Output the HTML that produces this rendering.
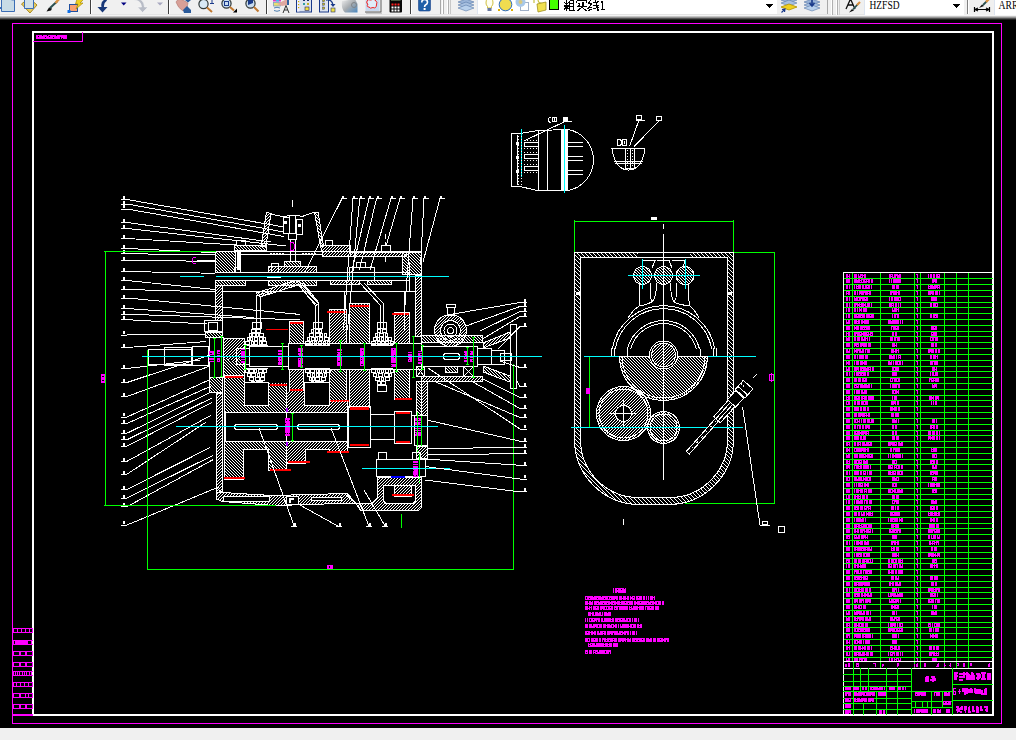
<!DOCTYPE html>
<html><head><meta charset="utf-8"><style>
html,body{margin:0;padding:0;background:#000;width:1016px;height:740px;overflow:hidden}
#tb{position:absolute;left:0;top:0;width:1016px;height:20px}
svg{position:absolute;left:0;top:0}
</style></head><body>
<svg width="1016" height="740" viewBox="0 0 1016 740" shape-rendering="crispEdges">
<defs>
<pattern id="hat" width="3" height="3" patternUnits="userSpaceOnUse"><rect x="2" y="0" width="1" height="1" fill="#fff"/><rect x="1" y="1" width="1" height="1" fill="#fff"/><rect x="0" y="2" width="1" height="1" fill="#fff"/></pattern>
<pattern id="hatb" width="3" height="3" patternUnits="userSpaceOnUse"><rect x="0" y="0" width="1" height="1" fill="#fff"/><rect x="1" y="1" width="1" height="1" fill="#fff"/><rect x="2" y="2" width="1" height="1" fill="#fff"/></pattern>
<pattern id="hatl" width="4" height="4" patternUnits="userSpaceOnUse"><rect x="3" y="0" width="1" height="1" fill="#fff"/><rect x="2" y="1" width="1" height="1" fill="#fff"/><rect x="1" y="2" width="1" height="1" fill="#fff"/><rect x="0" y="3" width="1" height="1" fill="#fff"/></pattern>
<pattern id="hatlb" width="4" height="4" patternUnits="userSpaceOnUse"><rect x="0" y="0" width="1" height="1" fill="#fff"/><rect x="1" y="1" width="1" height="1" fill="#fff"/><rect x="2" y="2" width="1" height="1" fill="#fff"/><rect x="3" y="3" width="1" height="1" fill="#fff"/></pattern>
</defs>
<rect x="0" y="0" width="1016" height="740" fill="#000"/>
<rect x="0" y="0" width="1016" height="15" fill="#f0f0f0"/>
<rect x="0" y="15" width="1016" height="1" fill="#f4f4f4"/>
<rect x="0" y="16" width="1016" height="1" fill="#c4c4c4"/>
<rect x="0" y="17" width="1016" height="1" fill="#959595"/>
<rect x="0" y="18" width="1016" height="1" fill="#555555"/>
<rect x="0" y="19" width="1016" height="1" fill="#222222"/>
<rect x="0" y="728" width="1016" height="12" fill="#f0f0f0"/>
<rect x="12.5" y="23.5" width="989" height="700" stroke="#f0f" stroke-width="1" fill="none"/>
<rect x="33" y="32" width="960" height="683" stroke="#fff" stroke-width="2" fill="none"/>
<rect x="843" y="278" width="150" height="1" fill="#0f0"/>
<rect x="843" y="284" width="150" height="1" fill="#0f0"/>
<rect x="843" y="290" width="150" height="1" fill="#0f0"/>
<rect x="843" y="296" width="150" height="1" fill="#0f0"/>
<rect x="843" y="302" width="150" height="1" fill="#0f0"/>
<rect x="843" y="307" width="150" height="1" fill="#0f0"/>
<rect x="843" y="313" width="150" height="1" fill="#0f0"/>
<rect x="843" y="319" width="150" height="1" fill="#0f0"/>
<rect x="843" y="325" width="150" height="1" fill="#0f0"/>
<rect x="843" y="331" width="150" height="1" fill="#0f0"/>
<rect x="843" y="336" width="150" height="1" fill="#0f0"/>
<rect x="843" y="342" width="150" height="1" fill="#0f0"/>
<rect x="843" y="348" width="150" height="1" fill="#0f0"/>
<rect x="843" y="354" width="150" height="1" fill="#0f0"/>
<rect x="843" y="360" width="150" height="1" fill="#0f0"/>
<rect x="843" y="366" width="150" height="1" fill="#0f0"/>
<rect x="843" y="371" width="150" height="1" fill="#0f0"/>
<rect x="843" y="377" width="150" height="1" fill="#0f0"/>
<rect x="843" y="383" width="150" height="1" fill="#0f0"/>
<rect x="843" y="389" width="150" height="1" fill="#0f0"/>
<rect x="843" y="395" width="150" height="1" fill="#0f0"/>
<rect x="843" y="400" width="150" height="1" fill="#0f0"/>
<rect x="843" y="406" width="150" height="1" fill="#0f0"/>
<rect x="843" y="412" width="150" height="1" fill="#0f0"/>
<rect x="843" y="418" width="150" height="1" fill="#0f0"/>
<rect x="843" y="424" width="150" height="1" fill="#0f0"/>
<rect x="843" y="430" width="150" height="1" fill="#0f0"/>
<rect x="843" y="435" width="150" height="1" fill="#0f0"/>
<rect x="843" y="441" width="150" height="1" fill="#0f0"/>
<rect x="843" y="447" width="150" height="1" fill="#0f0"/>
<rect x="843" y="453" width="150" height="1" fill="#0f0"/>
<rect x="843" y="459" width="150" height="1" fill="#0f0"/>
<rect x="843" y="464" width="150" height="1" fill="#0f0"/>
<rect x="843" y="470" width="150" height="1" fill="#0f0"/>
<rect x="843" y="476" width="150" height="1" fill="#0f0"/>
<rect x="843" y="482" width="150" height="1" fill="#0f0"/>
<rect x="843" y="488" width="150" height="1" fill="#0f0"/>
<rect x="843" y="494" width="150" height="1" fill="#0f0"/>
<rect x="843" y="499" width="150" height="1" fill="#0f0"/>
<rect x="843" y="505" width="150" height="1" fill="#0f0"/>
<rect x="843" y="511" width="150" height="1" fill="#0f0"/>
<rect x="843" y="517" width="150" height="1" fill="#0f0"/>
<rect x="843" y="523" width="150" height="1" fill="#0f0"/>
<rect x="843" y="528" width="150" height="1" fill="#0f0"/>
<rect x="843" y="534" width="150" height="1" fill="#0f0"/>
<rect x="843" y="540" width="150" height="1" fill="#0f0"/>
<rect x="843" y="546" width="150" height="1" fill="#0f0"/>
<rect x="843" y="552" width="150" height="1" fill="#0f0"/>
<rect x="843" y="558" width="150" height="1" fill="#0f0"/>
<rect x="843" y="563" width="150" height="1" fill="#0f0"/>
<rect x="843" y="569" width="150" height="1" fill="#0f0"/>
<rect x="843" y="575" width="150" height="1" fill="#0f0"/>
<rect x="843" y="581" width="150" height="1" fill="#0f0"/>
<rect x="843" y="587" width="150" height="1" fill="#0f0"/>
<rect x="843" y="592" width="150" height="1" fill="#0f0"/>
<rect x="843" y="598" width="150" height="1" fill="#0f0"/>
<rect x="843" y="604" width="150" height="1" fill="#0f0"/>
<rect x="843" y="610" width="150" height="1" fill="#0f0"/>
<rect x="843" y="616" width="150" height="1" fill="#0f0"/>
<rect x="843" y="622" width="150" height="1" fill="#0f0"/>
<rect x="843" y="627" width="150" height="1" fill="#0f0"/>
<rect x="843" y="633" width="150" height="1" fill="#0f0"/>
<rect x="843" y="639" width="150" height="1" fill="#0f0"/>
<rect x="843" y="645" width="150" height="1" fill="#0f0"/>
<rect x="843" y="651" width="150" height="1" fill="#0f0"/>
<rect x="843" y="657" width="150" height="1" fill="#0f0"/>
<rect x="852" y="272" width="1" height="390" fill="#0f0"/>
<rect x="880" y="272" width="1" height="390" fill="#0f0"/>
<rect x="914" y="272" width="1" height="390" fill="#0f0"/>
<rect x="920" y="272" width="1" height="390" fill="#0f0"/>
<rect x="944" y="272" width="1" height="390" fill="#0f0"/>
<rect x="956" y="272" width="1" height="390" fill="#0f0"/>
<rect x="968" y="272" width="1" height="390" fill="#0f0"/>
<rect x="846" y="274" width="4" height="4" fill="#f0f"/>
<rect x="848" y="274" width="1" height="1" fill="#000"/>
<rect x="848" y="275" width="1" height="1" fill="#000"/>
<rect x="848" y="277" width="1" height="1" fill="#000"/>
<rect x="854" y="274" width="12" height="4" fill="#f0f"/>
<rect x="857" y="274" width="1" height="4" fill="#000"/>
<rect x="859" y="274" width="1" height="1" fill="#000"/>
<rect x="859" y="275" width="1" height="1" fill="#000"/>
<rect x="861" y="276" width="1" height="1" fill="#000"/>
<rect x="863" y="274" width="1" height="1" fill="#000"/>
<rect x="863" y="276" width="1" height="1" fill="#000"/>
<rect x="863" y="277" width="1" height="1" fill="#000"/>
<rect x="889" y="274" width="12" height="4" fill="#f0f"/>
<rect x="891" y="275" width="1" height="1" fill="#000"/>
<rect x="891" y="277" width="1" height="1" fill="#000"/>
<rect x="893" y="274" width="1" height="1" fill="#000"/>
<rect x="893" y="275" width="1" height="1" fill="#000"/>
<rect x="893" y="276" width="1" height="1" fill="#000"/>
<rect x="896" y="276" width="1" height="1" fill="#000"/>
<rect x="896" y="277" width="1" height="1" fill="#000"/>
<rect x="898" y="274" width="1" height="1" fill="#000"/>
<rect x="917" y="274" width="1" height="4" fill="#f0f"/>
<rect x="916" y="274" width="1" height="1" fill="#f0f"/>
<rect x="928" y="274" width="12" height="4" fill="#f0f"/>
<rect x="929" y="274" width="1" height="4" fill="#000"/>
<rect x="932" y="274" width="1" height="4" fill="#000"/>
<rect x="935" y="274" width="1" height="4" fill="#000"/>
<rect x="938" y="275" width="1" height="1" fill="#000"/>
<rect x="846" y="279" width="4" height="4" fill="#f0f"/>
<rect x="854" y="279" width="19" height="4" fill="#f0f"/>
<rect x="857" y="279" width="1" height="1" fill="#000"/>
<rect x="860" y="279" width="1" height="1" fill="#000"/>
<rect x="860" y="281" width="1" height="1" fill="#000"/>
<rect x="862" y="280" width="1" height="1" fill="#000"/>
<rect x="862" y="281" width="1" height="1" fill="#000"/>
<rect x="865" y="280" width="1" height="1" fill="#000"/>
<rect x="867" y="280" width="1" height="1" fill="#000"/>
<rect x="867" y="282" width="1" height="1" fill="#000"/>
<rect x="870" y="279" width="1" height="1" fill="#000"/>
<rect x="870" y="280" width="1" height="1" fill="#000"/>
<rect x="870" y="281" width="1" height="1" fill="#000"/>
<rect x="870" y="282" width="1" height="1" fill="#000"/>
<rect x="889" y="279" width="12" height="4" fill="#f0f"/>
<rect x="890" y="279" width="1" height="4" fill="#000"/>
<rect x="892" y="279" width="1" height="4" fill="#000"/>
<rect x="917" y="279" width="1" height="4" fill="#f0f"/>
<rect x="916" y="279" width="1" height="1" fill="#f0f"/>
<rect x="932" y="279" width="5" height="4" fill="#f0f"/>
<rect x="934" y="282" width="1" height="1" fill="#000"/>
<rect x="846" y="285" width="4" height="4" fill="#f0f"/>
<rect x="848" y="285" width="1" height="4" fill="#000"/>
<rect x="854" y="285" width="18" height="4" fill="#f0f"/>
<rect x="855" y="285" width="1" height="4" fill="#000"/>
<rect x="857" y="285" width="1" height="1" fill="#000"/>
<rect x="857" y="287" width="1" height="1" fill="#000"/>
<rect x="861" y="285" width="1" height="4" fill="#000"/>
<rect x="864" y="285" width="1" height="1" fill="#000"/>
<rect x="864" y="286" width="1" height="1" fill="#000"/>
<rect x="864" y="287" width="1" height="1" fill="#000"/>
<rect x="867" y="286" width="1" height="1" fill="#000"/>
<rect x="870" y="285" width="1" height="1" fill="#000"/>
<rect x="870" y="286" width="1" height="1" fill="#000"/>
<rect x="870" y="287" width="1" height="1" fill="#000"/>
<rect x="870" y="288" width="1" height="1" fill="#000"/>
<rect x="892" y="285" width="7" height="4" fill="#f0f"/>
<rect x="895" y="285" width="1" height="4" fill="#000"/>
<rect x="917" y="285" width="1" height="4" fill="#f0f"/>
<rect x="916" y="285" width="1" height="1" fill="#f0f"/>
<rect x="928" y="285" width="12" height="4" fill="#f0f"/>
<rect x="929" y="285" width="1" height="1" fill="#000"/>
<rect x="929" y="287" width="1" height="1" fill="#000"/>
<rect x="933" y="285" width="1" height="1" fill="#000"/>
<rect x="936" y="288" width="1" height="1" fill="#000"/>
<rect x="938" y="286" width="1" height="1" fill="#000"/>
<rect x="938" y="288" width="1" height="1" fill="#000"/>
<rect x="846" y="291" width="4" height="4" fill="#f0f"/>
<rect x="847" y="292" width="1" height="1" fill="#000"/>
<rect x="847" y="294" width="1" height="1" fill="#000"/>
<rect x="854" y="291" width="17" height="4" fill="#f0f"/>
<rect x="856" y="291" width="1" height="4" fill="#000"/>
<rect x="858" y="291" width="1" height="4" fill="#000"/>
<rect x="860" y="294" width="1" height="1" fill="#000"/>
<rect x="864" y="293" width="1" height="1" fill="#000"/>
<rect x="864" y="294" width="1" height="1" fill="#000"/>
<rect x="868" y="292" width="1" height="1" fill="#000"/>
<rect x="868" y="294" width="1" height="1" fill="#000"/>
<rect x="890" y="291" width="10" height="4" fill="#f0f"/>
<rect x="892" y="293" width="1" height="1" fill="#000"/>
<rect x="892" y="294" width="1" height="1" fill="#000"/>
<rect x="897" y="291" width="1" height="1" fill="#000"/>
<rect x="897" y="293" width="1" height="1" fill="#000"/>
<rect x="897" y="294" width="1" height="1" fill="#000"/>
<rect x="917" y="291" width="1" height="4" fill="#f0f"/>
<rect x="916" y="291" width="1" height="1" fill="#f0f"/>
<rect x="928" y="291" width="12" height="4" fill="#f0f"/>
<rect x="931" y="294" width="1" height="1" fill="#000"/>
<rect x="934" y="291" width="1" height="4" fill="#000"/>
<rect x="938" y="291" width="1" height="4" fill="#000"/>
<rect x="846" y="297" width="4" height="4" fill="#f0f"/>
<rect x="848" y="297" width="1" height="4" fill="#000"/>
<rect x="854" y="297" width="14" height="4" fill="#f0f"/>
<rect x="855" y="297" width="1" height="1" fill="#000"/>
<rect x="858" y="298" width="1" height="1" fill="#000"/>
<rect x="858" y="299" width="1" height="1" fill="#000"/>
<rect x="861" y="299" width="1" height="1" fill="#000"/>
<rect x="861" y="300" width="1" height="1" fill="#000"/>
<rect x="865" y="298" width="1" height="1" fill="#000"/>
<rect x="889" y="297" width="12" height="4" fill="#f0f"/>
<rect x="890" y="297" width="1" height="4" fill="#000"/>
<rect x="893" y="297" width="1" height="4" fill="#000"/>
<rect x="899" y="298" width="1" height="1" fill="#000"/>
<rect x="899" y="299" width="1" height="1" fill="#000"/>
<rect x="917" y="297" width="1" height="4" fill="#f0f"/>
<rect x="916" y="297" width="1" height="1" fill="#f0f"/>
<rect x="931" y="297" width="6" height="4" fill="#f0f"/>
<rect x="846" y="303" width="4" height="4" fill="#f0f"/>
<rect x="848" y="303" width="1" height="4" fill="#000"/>
<rect x="854" y="303" width="18" height="4" fill="#f0f"/>
<rect x="856" y="305" width="1" height="1" fill="#000"/>
<rect x="856" y="306" width="1" height="1" fill="#000"/>
<rect x="858" y="303" width="1" height="1" fill="#000"/>
<rect x="858" y="306" width="1" height="1" fill="#000"/>
<rect x="860" y="303" width="1" height="1" fill="#000"/>
<rect x="860" y="305" width="1" height="1" fill="#000"/>
<rect x="864" y="303" width="1" height="1" fill="#000"/>
<rect x="864" y="306" width="1" height="1" fill="#000"/>
<rect x="866" y="303" width="1" height="1" fill="#000"/>
<rect x="866" y="304" width="1" height="1" fill="#000"/>
<rect x="866" y="305" width="1" height="1" fill="#000"/>
<rect x="870" y="303" width="1" height="4" fill="#000"/>
<rect x="889" y="303" width="12" height="4" fill="#f0f"/>
<rect x="892" y="304" width="1" height="1" fill="#000"/>
<rect x="892" y="306" width="1" height="1" fill="#000"/>
<rect x="894" y="303" width="1" height="4" fill="#000"/>
<rect x="897" y="303" width="1" height="4" fill="#000"/>
<rect x="899" y="303" width="1" height="4" fill="#000"/>
<rect x="917" y="303" width="1" height="4" fill="#f0f"/>
<rect x="916" y="303" width="1" height="1" fill="#f0f"/>
<rect x="930" y="303" width="8" height="4" fill="#f0f"/>
<rect x="932" y="303" width="1" height="4" fill="#000"/>
<rect x="936" y="304" width="1" height="1" fill="#000"/>
<rect x="936" y="305" width="1" height="1" fill="#000"/>
<rect x="846" y="308" width="4" height="4" fill="#f0f"/>
<rect x="847" y="308" width="1" height="4" fill="#000"/>
<rect x="854" y="308" width="13" height="4" fill="#f0f"/>
<rect x="856" y="308" width="1" height="4" fill="#000"/>
<rect x="858" y="308" width="1" height="4" fill="#000"/>
<rect x="860" y="308" width="1" height="1" fill="#000"/>
<rect x="860" y="311" width="1" height="1" fill="#000"/>
<rect x="862" y="308" width="1" height="4" fill="#000"/>
<rect x="892" y="308" width="7" height="4" fill="#f0f"/>
<rect x="893" y="308" width="1" height="1" fill="#000"/>
<rect x="893" y="309" width="1" height="1" fill="#000"/>
<rect x="897" y="308" width="1" height="1" fill="#000"/>
<rect x="897" y="310" width="1" height="1" fill="#000"/>
<rect x="897" y="311" width="1" height="1" fill="#000"/>
<rect x="917" y="308" width="1" height="4" fill="#f0f"/>
<rect x="916" y="308" width="1" height="1" fill="#f0f"/>
<rect x="846" y="314" width="4" height="4" fill="#f0f"/>
<rect x="847" y="314" width="1" height="4" fill="#000"/>
<rect x="854" y="314" width="20" height="4" fill="#f0f"/>
<rect x="857" y="315" width="1" height="1" fill="#000"/>
<rect x="861" y="316" width="1" height="1" fill="#000"/>
<rect x="865" y="314" width="1" height="4" fill="#000"/>
<rect x="870" y="315" width="1" height="1" fill="#000"/>
<rect x="892" y="314" width="7" height="4" fill="#f0f"/>
<rect x="893" y="314" width="1" height="4" fill="#000"/>
<rect x="896" y="315" width="1" height="1" fill="#000"/>
<rect x="896" y="316" width="1" height="1" fill="#000"/>
<rect x="896" y="317" width="1" height="1" fill="#000"/>
<rect x="917" y="314" width="1" height="4" fill="#f0f"/>
<rect x="916" y="314" width="1" height="1" fill="#f0f"/>
<rect x="930" y="314" width="8" height="4" fill="#f0f"/>
<rect x="932" y="314" width="1" height="4" fill="#000"/>
<rect x="935" y="316" width="1" height="1" fill="#000"/>
<rect x="846" y="320" width="4" height="4" fill="#f0f"/>
<rect x="847" y="320" width="1" height="1" fill="#000"/>
<rect x="847" y="321" width="1" height="1" fill="#000"/>
<rect x="854" y="320" width="15" height="4" fill="#f0f"/>
<rect x="857" y="320" width="1" height="1" fill="#000"/>
<rect x="857" y="322" width="1" height="1" fill="#000"/>
<rect x="860" y="320" width="1" height="4" fill="#000"/>
<rect x="863" y="320" width="1" height="1" fill="#000"/>
<rect x="863" y="323" width="1" height="1" fill="#000"/>
<rect x="888" y="320" width="15" height="4" fill="#f0f"/>
<rect x="891" y="320" width="1" height="1" fill="#000"/>
<rect x="899" y="320" width="1" height="4" fill="#000"/>
<rect x="901" y="320" width="1" height="4" fill="#000"/>
<rect x="917" y="320" width="1" height="4" fill="#f0f"/>
<rect x="916" y="320" width="1" height="1" fill="#f0f"/>
<rect x="846" y="326" width="4" height="4" fill="#f0f"/>
<rect x="854" y="326" width="16" height="4" fill="#f0f"/>
<rect x="855" y="326" width="1" height="1" fill="#000"/>
<rect x="855" y="329" width="1" height="1" fill="#000"/>
<rect x="859" y="326" width="1" height="4" fill="#000"/>
<rect x="863" y="328" width="1" height="1" fill="#000"/>
<rect x="865" y="328" width="1" height="1" fill="#000"/>
<rect x="891" y="326" width="8" height="4" fill="#f0f"/>
<rect x="892" y="327" width="1" height="1" fill="#000"/>
<rect x="892" y="328" width="1" height="1" fill="#000"/>
<rect x="892" y="329" width="1" height="1" fill="#000"/>
<rect x="896" y="327" width="1" height="1" fill="#000"/>
<rect x="917" y="326" width="1" height="4" fill="#f0f"/>
<rect x="916" y="326" width="1" height="1" fill="#f0f"/>
<rect x="931" y="326" width="6" height="4" fill="#f0f"/>
<rect x="934" y="327" width="1" height="1" fill="#000"/>
<rect x="846" y="332" width="4" height="4" fill="#f0f"/>
<rect x="847" y="332" width="1" height="1" fill="#000"/>
<rect x="847" y="334" width="1" height="1" fill="#000"/>
<rect x="847" y="335" width="1" height="1" fill="#000"/>
<rect x="854" y="332" width="19" height="4" fill="#f0f"/>
<rect x="856" y="334" width="1" height="1" fill="#000"/>
<rect x="856" y="335" width="1" height="1" fill="#000"/>
<rect x="860" y="333" width="1" height="1" fill="#000"/>
<rect x="862" y="332" width="1" height="1" fill="#000"/>
<rect x="862" y="335" width="1" height="1" fill="#000"/>
<rect x="867" y="333" width="1" height="1" fill="#000"/>
<rect x="869" y="332" width="1" height="1" fill="#000"/>
<rect x="869" y="333" width="1" height="1" fill="#000"/>
<rect x="869" y="335" width="1" height="1" fill="#000"/>
<rect x="871" y="334" width="1" height="1" fill="#000"/>
<rect x="892" y="332" width="5" height="4" fill="#f0f"/>
<rect x="894" y="332" width="1" height="4" fill="#000"/>
<rect x="917" y="332" width="1" height="4" fill="#f0f"/>
<rect x="916" y="332" width="1" height="1" fill="#f0f"/>
<rect x="931" y="332" width="6" height="4" fill="#f0f"/>
<rect x="932" y="333" width="1" height="1" fill="#000"/>
<rect x="846" y="337" width="4" height="4" fill="#f0f"/>
<rect x="847" y="337" width="1" height="1" fill="#000"/>
<rect x="854" y="337" width="16" height="4" fill="#f0f"/>
<rect x="856" y="337" width="1" height="4" fill="#000"/>
<rect x="860" y="337" width="1" height="4" fill="#000"/>
<rect x="863" y="337" width="1" height="1" fill="#000"/>
<rect x="863" y="338" width="1" height="1" fill="#000"/>
<rect x="866" y="337" width="1" height="1" fill="#000"/>
<rect x="866" y="339" width="1" height="1" fill="#000"/>
<rect x="866" y="340" width="1" height="1" fill="#000"/>
<rect x="868" y="337" width="1" height="4" fill="#000"/>
<rect x="890" y="337" width="10" height="4" fill="#f0f"/>
<rect x="893" y="337" width="1" height="4" fill="#000"/>
<rect x="896" y="338" width="1" height="1" fill="#000"/>
<rect x="896" y="339" width="1" height="1" fill="#000"/>
<rect x="896" y="340" width="1" height="1" fill="#000"/>
<rect x="917" y="337" width="1" height="4" fill="#f0f"/>
<rect x="916" y="337" width="1" height="1" fill="#f0f"/>
<rect x="930" y="337" width="8" height="4" fill="#f0f"/>
<rect x="931" y="338" width="1" height="1" fill="#000"/>
<rect x="931" y="339" width="1" height="1" fill="#000"/>
<rect x="934" y="338" width="1" height="1" fill="#000"/>
<rect x="934" y="339" width="1" height="1" fill="#000"/>
<rect x="934" y="340" width="1" height="1" fill="#000"/>
<rect x="846" y="343" width="4" height="4" fill="#f0f"/>
<rect x="854" y="343" width="17" height="4" fill="#f0f"/>
<rect x="855" y="346" width="1" height="1" fill="#000"/>
<rect x="857" y="345" width="1" height="1" fill="#000"/>
<rect x="859" y="343" width="1" height="4" fill="#000"/>
<rect x="862" y="346" width="1" height="1" fill="#000"/>
<rect x="867" y="343" width="1" height="4" fill="#000"/>
<rect x="892" y="343" width="5" height="4" fill="#f0f"/>
<rect x="895" y="343" width="1" height="1" fill="#000"/>
<rect x="895" y="344" width="1" height="1" fill="#000"/>
<rect x="895" y="346" width="1" height="1" fill="#000"/>
<rect x="917" y="343" width="1" height="4" fill="#f0f"/>
<rect x="916" y="343" width="1" height="1" fill="#f0f"/>
<rect x="931" y="343" width="6" height="4" fill="#f0f"/>
<rect x="934" y="343" width="1" height="4" fill="#000"/>
<rect x="846" y="349" width="4" height="4" fill="#f0f"/>
<rect x="848" y="349" width="1" height="1" fill="#000"/>
<rect x="848" y="350" width="1" height="1" fill="#000"/>
<rect x="854" y="349" width="16" height="4" fill="#f0f"/>
<rect x="855" y="349" width="1" height="1" fill="#000"/>
<rect x="855" y="352" width="1" height="1" fill="#000"/>
<rect x="858" y="351" width="1" height="1" fill="#000"/>
<rect x="858" y="352" width="1" height="1" fill="#000"/>
<rect x="861" y="349" width="1" height="1" fill="#000"/>
<rect x="861" y="350" width="1" height="1" fill="#000"/>
<rect x="864" y="349" width="1" height="4" fill="#000"/>
<rect x="866" y="350" width="1" height="1" fill="#000"/>
<rect x="866" y="351" width="1" height="1" fill="#000"/>
<rect x="866" y="352" width="1" height="1" fill="#000"/>
<rect x="891" y="349" width="8" height="4" fill="#f0f"/>
<rect x="894" y="349" width="1" height="1" fill="#000"/>
<rect x="894" y="350" width="1" height="1" fill="#000"/>
<rect x="894" y="352" width="1" height="1" fill="#000"/>
<rect x="897" y="349" width="1" height="1" fill="#000"/>
<rect x="897" y="351" width="1" height="1" fill="#000"/>
<rect x="897" y="352" width="1" height="1" fill="#000"/>
<rect x="917" y="349" width="1" height="4" fill="#f0f"/>
<rect x="916" y="349" width="1" height="1" fill="#f0f"/>
<rect x="928" y="349" width="12" height="4" fill="#f0f"/>
<rect x="930" y="352" width="1" height="1" fill="#000"/>
<rect x="934" y="349" width="1" height="4" fill="#000"/>
<rect x="937" y="349" width="1" height="4" fill="#000"/>
<rect x="846" y="355" width="4" height="4" fill="#f0f"/>
<rect x="854" y="355" width="14" height="4" fill="#f0f"/>
<rect x="856" y="355" width="1" height="4" fill="#000"/>
<rect x="858" y="355" width="1" height="4" fill="#000"/>
<rect x="864" y="355" width="1" height="4" fill="#000"/>
<rect x="889" y="355" width="12" height="4" fill="#f0f"/>
<rect x="892" y="355" width="1" height="1" fill="#000"/>
<rect x="895" y="355" width="1" height="4" fill="#000"/>
<rect x="897" y="355" width="1" height="4" fill="#000"/>
<rect x="899" y="356" width="1" height="1" fill="#000"/>
<rect x="899" y="358" width="1" height="1" fill="#000"/>
<rect x="917" y="355" width="1" height="4" fill="#f0f"/>
<rect x="916" y="355" width="1" height="1" fill="#f0f"/>
<rect x="930" y="355" width="8" height="4" fill="#f0f"/>
<rect x="932" y="355" width="1" height="4" fill="#000"/>
<rect x="936" y="355" width="1" height="1" fill="#000"/>
<rect x="936" y="357" width="1" height="1" fill="#000"/>
<rect x="936" y="358" width="1" height="1" fill="#000"/>
<rect x="846" y="361" width="4" height="4" fill="#f0f"/>
<rect x="847" y="361" width="1" height="1" fill="#000"/>
<rect x="847" y="364" width="1" height="1" fill="#000"/>
<rect x="854" y="361" width="13" height="4" fill="#f0f"/>
<rect x="855" y="361" width="1" height="4" fill="#000"/>
<rect x="859" y="361" width="1" height="4" fill="#000"/>
<rect x="863" y="361" width="1" height="1" fill="#000"/>
<rect x="863" y="364" width="1" height="1" fill="#000"/>
<rect x="888" y="361" width="15" height="4" fill="#f0f"/>
<rect x="890" y="361" width="1" height="1" fill="#000"/>
<rect x="892" y="361" width="1" height="4" fill="#000"/>
<rect x="894" y="361" width="1" height="4" fill="#000"/>
<rect x="898" y="362" width="1" height="1" fill="#000"/>
<rect x="898" y="363" width="1" height="1" fill="#000"/>
<rect x="901" y="361" width="1" height="4" fill="#000"/>
<rect x="917" y="361" width="1" height="4" fill="#f0f"/>
<rect x="916" y="361" width="1" height="1" fill="#f0f"/>
<rect x="930" y="361" width="8" height="4" fill="#f0f"/>
<rect x="933" y="362" width="1" height="1" fill="#000"/>
<rect x="933" y="363" width="1" height="1" fill="#000"/>
<rect x="933" y="364" width="1" height="1" fill="#000"/>
<rect x="846" y="367" width="4" height="4" fill="#f0f"/>
<rect x="847" y="367" width="1" height="1" fill="#000"/>
<rect x="847" y="368" width="1" height="1" fill="#000"/>
<rect x="854" y="367" width="20" height="4" fill="#f0f"/>
<rect x="857" y="370" width="1" height="1" fill="#000"/>
<rect x="859" y="367" width="1" height="4" fill="#000"/>
<rect x="862" y="369" width="1" height="1" fill="#000"/>
<rect x="866" y="367" width="1" height="1" fill="#000"/>
<rect x="869" y="368" width="1" height="1" fill="#000"/>
<rect x="869" y="370" width="1" height="1" fill="#000"/>
<rect x="871" y="367" width="1" height="4" fill="#000"/>
<rect x="892" y="367" width="7" height="4" fill="#f0f"/>
<rect x="894" y="368" width="1" height="1" fill="#000"/>
<rect x="894" y="369" width="1" height="1" fill="#000"/>
<rect x="917" y="367" width="1" height="4" fill="#f0f"/>
<rect x="916" y="367" width="1" height="1" fill="#f0f"/>
<rect x="932" y="367" width="5" height="4" fill="#f0f"/>
<rect x="935" y="367" width="1" height="1" fill="#000"/>
<rect x="935" y="368" width="1" height="1" fill="#000"/>
<rect x="935" y="370" width="1" height="1" fill="#000"/>
<rect x="846" y="372" width="4" height="4" fill="#f0f"/>
<rect x="848" y="372" width="1" height="4" fill="#000"/>
<rect x="854" y="372" width="15" height="4" fill="#f0f"/>
<rect x="855" y="372" width="1" height="4" fill="#000"/>
<rect x="859" y="374" width="1" height="1" fill="#000"/>
<rect x="862" y="374" width="1" height="1" fill="#000"/>
<rect x="866" y="372" width="1" height="1" fill="#000"/>
<rect x="866" y="373" width="1" height="1" fill="#000"/>
<rect x="866" y="374" width="1" height="1" fill="#000"/>
<rect x="866" y="375" width="1" height="1" fill="#000"/>
<rect x="892" y="372" width="5" height="4" fill="#f0f"/>
<rect x="917" y="372" width="1" height="4" fill="#f0f"/>
<rect x="916" y="372" width="1" height="1" fill="#f0f"/>
<rect x="930" y="372" width="8" height="4" fill="#f0f"/>
<rect x="931" y="372" width="1" height="4" fill="#000"/>
<rect x="934" y="372" width="1" height="1" fill="#000"/>
<rect x="934" y="373" width="1" height="1" fill="#000"/>
<rect x="934" y="374" width="1" height="1" fill="#000"/>
<rect x="846" y="378" width="4" height="4" fill="#f0f"/>
<rect x="854" y="378" width="13" height="4" fill="#f0f"/>
<rect x="857" y="378" width="1" height="4" fill="#000"/>
<rect x="861" y="378" width="1" height="4" fill="#000"/>
<rect x="864" y="379" width="1" height="1" fill="#000"/>
<rect x="890" y="378" width="10" height="4" fill="#f0f"/>
<rect x="891" y="379" width="1" height="1" fill="#000"/>
<rect x="891" y="380" width="1" height="1" fill="#000"/>
<rect x="893" y="379" width="1" height="1" fill="#000"/>
<rect x="893" y="380" width="1" height="1" fill="#000"/>
<rect x="893" y="381" width="1" height="1" fill="#000"/>
<rect x="897" y="379" width="1" height="1" fill="#000"/>
<rect x="897" y="380" width="1" height="1" fill="#000"/>
<rect x="917" y="378" width="1" height="4" fill="#f0f"/>
<rect x="916" y="378" width="1" height="1" fill="#f0f"/>
<rect x="929" y="378" width="10" height="4" fill="#f0f"/>
<rect x="930" y="380" width="1" height="1" fill="#000"/>
<rect x="930" y="381" width="1" height="1" fill="#000"/>
<rect x="932" y="379" width="1" height="1" fill="#000"/>
<rect x="934" y="379" width="1" height="1" fill="#000"/>
<rect x="934" y="381" width="1" height="1" fill="#000"/>
<rect x="846" y="384" width="4" height="4" fill="#f0f"/>
<rect x="854" y="384" width="18" height="4" fill="#f0f"/>
<rect x="855" y="386" width="1" height="1" fill="#000"/>
<rect x="857" y="385" width="1" height="1" fill="#000"/>
<rect x="859" y="385" width="1" height="1" fill="#000"/>
<rect x="859" y="386" width="1" height="1" fill="#000"/>
<rect x="859" y="387" width="1" height="1" fill="#000"/>
<rect x="863" y="384" width="1" height="1" fill="#000"/>
<rect x="867" y="384" width="1" height="1" fill="#000"/>
<rect x="870" y="384" width="1" height="1" fill="#000"/>
<rect x="870" y="385" width="1" height="1" fill="#000"/>
<rect x="870" y="386" width="1" height="1" fill="#000"/>
<rect x="870" y="387" width="1" height="1" fill="#000"/>
<rect x="890" y="384" width="10" height="4" fill="#f0f"/>
<rect x="891" y="384" width="1" height="4" fill="#000"/>
<rect x="897" y="385" width="1" height="1" fill="#000"/>
<rect x="897" y="386" width="1" height="1" fill="#000"/>
<rect x="897" y="387" width="1" height="1" fill="#000"/>
<rect x="917" y="384" width="1" height="4" fill="#f0f"/>
<rect x="916" y="384" width="1" height="1" fill="#f0f"/>
<rect x="932" y="384" width="5" height="4" fill="#f0f"/>
<rect x="933" y="384" width="1" height="1" fill="#000"/>
<rect x="935" y="387" width="1" height="1" fill="#000"/>
<rect x="846" y="390" width="4" height="4" fill="#f0f"/>
<rect x="854" y="390" width="13" height="4" fill="#f0f"/>
<rect x="855" y="390" width="1" height="4" fill="#000"/>
<rect x="860" y="390" width="1" height="4" fill="#000"/>
<rect x="863" y="390" width="1" height="1" fill="#000"/>
<rect x="863" y="391" width="1" height="1" fill="#000"/>
<rect x="892" y="390" width="7" height="4" fill="#f0f"/>
<rect x="894" y="391" width="1" height="1" fill="#000"/>
<rect x="894" y="392" width="1" height="1" fill="#000"/>
<rect x="897" y="390" width="1" height="1" fill="#000"/>
<rect x="897" y="393" width="1" height="1" fill="#000"/>
<rect x="917" y="390" width="1" height="4" fill="#f0f"/>
<rect x="916" y="390" width="1" height="1" fill="#f0f"/>
<rect x="846" y="396" width="4" height="4" fill="#f0f"/>
<rect x="847" y="396" width="1" height="1" fill="#000"/>
<rect x="847" y="398" width="1" height="1" fill="#000"/>
<rect x="854" y="396" width="20" height="4" fill="#f0f"/>
<rect x="857" y="397" width="1" height="1" fill="#000"/>
<rect x="860" y="396" width="1" height="1" fill="#000"/>
<rect x="860" y="397" width="1" height="1" fill="#000"/>
<rect x="860" y="398" width="1" height="1" fill="#000"/>
<rect x="860" y="399" width="1" height="1" fill="#000"/>
<rect x="863" y="397" width="1" height="1" fill="#000"/>
<rect x="863" y="399" width="1" height="1" fill="#000"/>
<rect x="867" y="396" width="1" height="4" fill="#000"/>
<rect x="892" y="396" width="5" height="4" fill="#f0f"/>
<rect x="893" y="396" width="1" height="4" fill="#000"/>
<rect x="917" y="396" width="1" height="4" fill="#f0f"/>
<rect x="916" y="396" width="1" height="1" fill="#f0f"/>
<rect x="929" y="396" width="10" height="4" fill="#f0f"/>
<rect x="932" y="396" width="1" height="1" fill="#000"/>
<rect x="932" y="399" width="1" height="1" fill="#000"/>
<rect x="934" y="396" width="1" height="4" fill="#000"/>
<rect x="937" y="399" width="1" height="1" fill="#000"/>
<rect x="846" y="401" width="4" height="4" fill="#f0f"/>
<rect x="847" y="402" width="1" height="1" fill="#000"/>
<rect x="847" y="403" width="1" height="1" fill="#000"/>
<rect x="854" y="401" width="14" height="4" fill="#f0f"/>
<rect x="856" y="401" width="1" height="4" fill="#000"/>
<rect x="860" y="401" width="1" height="4" fill="#000"/>
<rect x="864" y="402" width="1" height="1" fill="#000"/>
<rect x="864" y="403" width="1" height="1" fill="#000"/>
<rect x="891" y="401" width="8" height="4" fill="#f0f"/>
<rect x="894" y="404" width="1" height="1" fill="#000"/>
<rect x="896" y="401" width="1" height="4" fill="#000"/>
<rect x="917" y="401" width="1" height="4" fill="#f0f"/>
<rect x="916" y="401" width="1" height="1" fill="#f0f"/>
<rect x="931" y="401" width="6" height="4" fill="#f0f"/>
<rect x="932" y="401" width="1" height="4" fill="#000"/>
<rect x="934" y="401" width="1" height="4" fill="#000"/>
<rect x="846" y="407" width="4" height="4" fill="#f0f"/>
<rect x="854" y="407" width="15" height="4" fill="#f0f"/>
<rect x="859" y="407" width="1" height="4" fill="#000"/>
<rect x="862" y="407" width="1" height="4" fill="#000"/>
<rect x="866" y="407" width="1" height="4" fill="#000"/>
<rect x="890" y="407" width="10" height="4" fill="#f0f"/>
<rect x="893" y="407" width="1" height="1" fill="#000"/>
<rect x="893" y="410" width="1" height="1" fill="#000"/>
<rect x="897" y="407" width="1" height="1" fill="#000"/>
<rect x="897" y="408" width="1" height="1" fill="#000"/>
<rect x="897" y="409" width="1" height="1" fill="#000"/>
<rect x="897" y="410" width="1" height="1" fill="#000"/>
<rect x="917" y="407" width="1" height="4" fill="#f0f"/>
<rect x="916" y="407" width="1" height="1" fill="#f0f"/>
<rect x="846" y="413" width="4" height="4" fill="#f0f"/>
<rect x="854" y="413" width="16" height="4" fill="#f0f"/>
<rect x="857" y="413" width="1" height="4" fill="#000"/>
<rect x="861" y="416" width="1" height="1" fill="#000"/>
<rect x="865" y="414" width="1" height="1" fill="#000"/>
<rect x="865" y="416" width="1" height="1" fill="#000"/>
<rect x="867" y="413" width="1" height="1" fill="#000"/>
<rect x="867" y="414" width="1" height="1" fill="#000"/>
<rect x="867" y="416" width="1" height="1" fill="#000"/>
<rect x="891" y="413" width="8" height="4" fill="#f0f"/>
<rect x="894" y="413" width="1" height="4" fill="#000"/>
<rect x="917" y="413" width="1" height="4" fill="#f0f"/>
<rect x="916" y="413" width="1" height="1" fill="#f0f"/>
<rect x="846" y="419" width="4" height="4" fill="#f0f"/>
<rect x="854" y="419" width="20" height="4" fill="#f0f"/>
<rect x="856" y="420" width="1" height="1" fill="#000"/>
<rect x="856" y="421" width="1" height="1" fill="#000"/>
<rect x="858" y="419" width="1" height="1" fill="#000"/>
<rect x="858" y="420" width="1" height="1" fill="#000"/>
<rect x="858" y="422" width="1" height="1" fill="#000"/>
<rect x="860" y="419" width="1" height="4" fill="#000"/>
<rect x="862" y="419" width="1" height="4" fill="#000"/>
<rect x="866" y="419" width="1" height="1" fill="#000"/>
<rect x="866" y="420" width="1" height="1" fill="#000"/>
<rect x="866" y="421" width="1" height="1" fill="#000"/>
<rect x="866" y="422" width="1" height="1" fill="#000"/>
<rect x="870" y="419" width="1" height="1" fill="#000"/>
<rect x="870" y="420" width="1" height="1" fill="#000"/>
<rect x="870" y="421" width="1" height="1" fill="#000"/>
<rect x="892" y="419" width="7" height="4" fill="#f0f"/>
<rect x="895" y="419" width="1" height="1" fill="#000"/>
<rect x="897" y="419" width="1" height="4" fill="#000"/>
<rect x="917" y="419" width="1" height="4" fill="#f0f"/>
<rect x="916" y="419" width="1" height="1" fill="#f0f"/>
<rect x="932" y="419" width="5" height="4" fill="#f0f"/>
<rect x="935" y="419" width="1" height="4" fill="#000"/>
<rect x="846" y="425" width="4" height="4" fill="#f0f"/>
<rect x="854" y="425" width="16" height="4" fill="#f0f"/>
<rect x="856" y="425" width="1" height="4" fill="#000"/>
<rect x="858" y="426" width="1" height="1" fill="#000"/>
<rect x="858" y="427" width="1" height="1" fill="#000"/>
<rect x="858" y="428" width="1" height="1" fill="#000"/>
<rect x="861" y="425" width="1" height="4" fill="#000"/>
<rect x="864" y="425" width="1" height="4" fill="#000"/>
<rect x="867" y="428" width="1" height="1" fill="#000"/>
<rect x="892" y="425" width="5" height="4" fill="#f0f"/>
<rect x="894" y="425" width="1" height="4" fill="#000"/>
<rect x="917" y="425" width="1" height="4" fill="#f0f"/>
<rect x="916" y="425" width="1" height="1" fill="#f0f"/>
<rect x="930" y="425" width="8" height="4" fill="#f0f"/>
<rect x="932" y="426" width="1" height="1" fill="#000"/>
<rect x="932" y="428" width="1" height="1" fill="#000"/>
<rect x="935" y="425" width="1" height="4" fill="#000"/>
<rect x="846" y="431" width="4" height="4" fill="#f0f"/>
<rect x="854" y="431" width="15" height="4" fill="#f0f"/>
<rect x="856" y="432" width="1" height="1" fill="#000"/>
<rect x="860" y="431" width="1" height="1" fill="#000"/>
<rect x="860" y="434" width="1" height="1" fill="#000"/>
<rect x="864" y="434" width="1" height="1" fill="#000"/>
<rect x="867" y="432" width="1" height="1" fill="#000"/>
<rect x="867" y="434" width="1" height="1" fill="#000"/>
<rect x="892" y="431" width="5" height="4" fill="#f0f"/>
<rect x="894" y="431" width="1" height="4" fill="#000"/>
<rect x="917" y="431" width="1" height="4" fill="#f0f"/>
<rect x="916" y="431" width="1" height="1" fill="#f0f"/>
<rect x="928" y="431" width="12" height="4" fill="#f0f"/>
<rect x="931" y="431" width="1" height="4" fill="#000"/>
<rect x="935" y="431" width="1" height="4" fill="#000"/>
<rect x="938" y="431" width="1" height="4" fill="#000"/>
<rect x="846" y="436" width="4" height="4" fill="#f0f"/>
<rect x="854" y="436" width="12" height="4" fill="#f0f"/>
<rect x="859" y="436" width="1" height="4" fill="#000"/>
<rect x="862" y="436" width="1" height="1" fill="#000"/>
<rect x="862" y="437" width="1" height="1" fill="#000"/>
<rect x="862" y="438" width="1" height="1" fill="#000"/>
<rect x="892" y="436" width="7" height="4" fill="#f0f"/>
<rect x="895" y="436" width="1" height="4" fill="#000"/>
<rect x="917" y="436" width="1" height="4" fill="#f0f"/>
<rect x="916" y="436" width="1" height="1" fill="#f0f"/>
<rect x="928" y="436" width="12" height="4" fill="#f0f"/>
<rect x="929" y="439" width="1" height="1" fill="#000"/>
<rect x="931" y="436" width="1" height="1" fill="#000"/>
<rect x="931" y="439" width="1" height="1" fill="#000"/>
<rect x="935" y="436" width="1" height="4" fill="#000"/>
<rect x="938" y="436" width="1" height="4" fill="#000"/>
<rect x="846" y="442" width="4" height="4" fill="#f0f"/>
<rect x="848" y="443" width="1" height="1" fill="#000"/>
<rect x="848" y="445" width="1" height="1" fill="#000"/>
<rect x="854" y="442" width="18" height="4" fill="#f0f"/>
<rect x="856" y="442" width="1" height="4" fill="#000"/>
<rect x="859" y="443" width="1" height="1" fill="#000"/>
<rect x="859" y="445" width="1" height="1" fill="#000"/>
<rect x="861" y="442" width="1" height="4" fill="#000"/>
<rect x="865" y="442" width="1" height="1" fill="#000"/>
<rect x="865" y="443" width="1" height="1" fill="#000"/>
<rect x="869" y="443" width="1" height="1" fill="#000"/>
<rect x="888" y="442" width="15" height="4" fill="#f0f"/>
<rect x="891" y="445" width="1" height="1" fill="#000"/>
<rect x="895" y="443" width="1" height="1" fill="#000"/>
<rect x="897" y="442" width="1" height="4" fill="#000"/>
<rect x="900" y="442" width="1" height="1" fill="#000"/>
<rect x="917" y="442" width="1" height="4" fill="#f0f"/>
<rect x="916" y="442" width="1" height="1" fill="#f0f"/>
<rect x="846" y="448" width="4" height="4" fill="#f0f"/>
<rect x="848" y="448" width="1" height="1" fill="#000"/>
<rect x="848" y="451" width="1" height="1" fill="#000"/>
<rect x="854" y="448" width="15" height="4" fill="#f0f"/>
<rect x="855" y="449" width="1" height="1" fill="#000"/>
<rect x="855" y="450" width="1" height="1" fill="#000"/>
<rect x="862" y="451" width="1" height="1" fill="#000"/>
<rect x="866" y="448" width="1" height="1" fill="#000"/>
<rect x="866" y="450" width="1" height="1" fill="#000"/>
<rect x="866" y="451" width="1" height="1" fill="#000"/>
<rect x="890" y="448" width="10" height="4" fill="#f0f"/>
<rect x="892" y="448" width="1" height="4" fill="#000"/>
<rect x="894" y="450" width="1" height="1" fill="#000"/>
<rect x="894" y="451" width="1" height="1" fill="#000"/>
<rect x="917" y="448" width="1" height="4" fill="#f0f"/>
<rect x="916" y="448" width="1" height="1" fill="#f0f"/>
<rect x="931" y="448" width="6" height="4" fill="#f0f"/>
<rect x="932" y="448" width="1" height="1" fill="#000"/>
<rect x="932" y="450" width="1" height="1" fill="#000"/>
<rect x="846" y="454" width="4" height="4" fill="#f0f"/>
<rect x="847" y="454" width="1" height="1" fill="#000"/>
<rect x="854" y="454" width="19" height="4" fill="#f0f"/>
<rect x="858" y="454" width="1" height="4" fill="#000"/>
<rect x="864" y="455" width="1" height="1" fill="#000"/>
<rect x="866" y="454" width="1" height="1" fill="#000"/>
<rect x="866" y="457" width="1" height="1" fill="#000"/>
<rect x="870" y="455" width="1" height="1" fill="#000"/>
<rect x="888" y="454" width="15" height="4" fill="#f0f"/>
<rect x="889" y="454" width="1" height="4" fill="#000"/>
<rect x="891" y="454" width="1" height="1" fill="#000"/>
<rect x="891" y="455" width="1" height="1" fill="#000"/>
<rect x="891" y="456" width="1" height="1" fill="#000"/>
<rect x="891" y="457" width="1" height="1" fill="#000"/>
<rect x="894" y="454" width="1" height="1" fill="#000"/>
<rect x="894" y="457" width="1" height="1" fill="#000"/>
<rect x="901" y="454" width="1" height="4" fill="#000"/>
<rect x="917" y="454" width="1" height="4" fill="#f0f"/>
<rect x="916" y="454" width="1" height="1" fill="#f0f"/>
<rect x="932" y="454" width="5" height="4" fill="#f0f"/>
<rect x="935" y="455" width="1" height="1" fill="#000"/>
<rect x="935" y="456" width="1" height="1" fill="#000"/>
<rect x="846" y="460" width="4" height="4" fill="#f0f"/>
<rect x="848" y="460" width="1" height="1" fill="#000"/>
<rect x="848" y="462" width="1" height="1" fill="#000"/>
<rect x="854" y="460" width="14" height="4" fill="#f0f"/>
<rect x="857" y="461" width="1" height="1" fill="#000"/>
<rect x="857" y="462" width="1" height="1" fill="#000"/>
<rect x="860" y="461" width="1" height="1" fill="#000"/>
<rect x="862" y="460" width="1" height="4" fill="#000"/>
<rect x="865" y="460" width="1" height="1" fill="#000"/>
<rect x="892" y="460" width="5" height="4" fill="#f0f"/>
<rect x="895" y="461" width="1" height="1" fill="#000"/>
<rect x="895" y="462" width="1" height="1" fill="#000"/>
<rect x="917" y="460" width="1" height="4" fill="#f0f"/>
<rect x="916" y="460" width="1" height="1" fill="#f0f"/>
<rect x="930" y="460" width="8" height="4" fill="#f0f"/>
<rect x="932" y="462" width="1" height="1" fill="#000"/>
<rect x="935" y="460" width="1" height="4" fill="#000"/>
<rect x="846" y="465" width="4" height="4" fill="#f0f"/>
<rect x="848" y="468" width="1" height="1" fill="#000"/>
<rect x="854" y="465" width="17" height="4" fill="#f0f"/>
<rect x="855" y="466" width="1" height="1" fill="#000"/>
<rect x="855" y="467" width="1" height="1" fill="#000"/>
<rect x="855" y="468" width="1" height="1" fill="#000"/>
<rect x="859" y="465" width="1" height="1" fill="#000"/>
<rect x="859" y="467" width="1" height="1" fill="#000"/>
<rect x="862" y="465" width="1" height="1" fill="#000"/>
<rect x="862" y="466" width="1" height="1" fill="#000"/>
<rect x="862" y="467" width="1" height="1" fill="#000"/>
<rect x="862" y="468" width="1" height="1" fill="#000"/>
<rect x="869" y="465" width="1" height="4" fill="#000"/>
<rect x="888" y="465" width="15" height="4" fill="#f0f"/>
<rect x="891" y="466" width="1" height="1" fill="#000"/>
<rect x="893" y="465" width="1" height="4" fill="#000"/>
<rect x="895" y="466" width="1" height="1" fill="#000"/>
<rect x="895" y="468" width="1" height="1" fill="#000"/>
<rect x="897" y="466" width="1" height="1" fill="#000"/>
<rect x="897" y="467" width="1" height="1" fill="#000"/>
<rect x="900" y="465" width="1" height="4" fill="#000"/>
<rect x="917" y="465" width="1" height="4" fill="#f0f"/>
<rect x="916" y="465" width="1" height="1" fill="#f0f"/>
<rect x="932" y="465" width="5" height="4" fill="#f0f"/>
<rect x="934" y="465" width="1" height="1" fill="#000"/>
<rect x="934" y="466" width="1" height="1" fill="#000"/>
<rect x="846" y="471" width="4" height="4" fill="#f0f"/>
<rect x="848" y="471" width="1" height="4" fill="#000"/>
<rect x="854" y="471" width="18" height="4" fill="#f0f"/>
<rect x="859" y="471" width="1" height="4" fill="#000"/>
<rect x="862" y="471" width="1" height="4" fill="#000"/>
<rect x="864" y="472" width="1" height="1" fill="#000"/>
<rect x="866" y="471" width="1" height="4" fill="#000"/>
<rect x="868" y="471" width="1" height="4" fill="#000"/>
<rect x="888" y="471" width="15" height="4" fill="#f0f"/>
<rect x="891" y="471" width="1" height="1" fill="#000"/>
<rect x="891" y="473" width="1" height="1" fill="#000"/>
<rect x="894" y="472" width="1" height="1" fill="#000"/>
<rect x="896" y="471" width="1" height="4" fill="#000"/>
<rect x="900" y="472" width="1" height="1" fill="#000"/>
<rect x="900" y="473" width="1" height="1" fill="#000"/>
<rect x="917" y="471" width="1" height="4" fill="#f0f"/>
<rect x="916" y="471" width="1" height="1" fill="#f0f"/>
<rect x="930" y="471" width="8" height="4" fill="#f0f"/>
<rect x="932" y="473" width="1" height="1" fill="#000"/>
<rect x="934" y="474" width="1" height="1" fill="#000"/>
<rect x="846" y="477" width="4" height="4" fill="#f0f"/>
<rect x="848" y="478" width="1" height="1" fill="#000"/>
<rect x="848" y="479" width="1" height="1" fill="#000"/>
<rect x="854" y="477" width="17" height="4" fill="#f0f"/>
<rect x="857" y="477" width="1" height="1" fill="#000"/>
<rect x="857" y="478" width="1" height="1" fill="#000"/>
<rect x="862" y="477" width="1" height="1" fill="#000"/>
<rect x="862" y="478" width="1" height="1" fill="#000"/>
<rect x="862" y="479" width="1" height="1" fill="#000"/>
<rect x="864" y="477" width="1" height="1" fill="#000"/>
<rect x="864" y="480" width="1" height="1" fill="#000"/>
<rect x="868" y="478" width="1" height="1" fill="#000"/>
<rect x="868" y="479" width="1" height="1" fill="#000"/>
<rect x="892" y="477" width="7" height="4" fill="#f0f"/>
<rect x="895" y="477" width="1" height="1" fill="#000"/>
<rect x="897" y="478" width="1" height="1" fill="#000"/>
<rect x="897" y="479" width="1" height="1" fill="#000"/>
<rect x="917" y="477" width="1" height="4" fill="#f0f"/>
<rect x="916" y="477" width="1" height="1" fill="#f0f"/>
<rect x="932" y="477" width="5" height="4" fill="#f0f"/>
<rect x="933" y="478" width="1" height="1" fill="#000"/>
<rect x="933" y="480" width="1" height="1" fill="#000"/>
<rect x="846" y="483" width="4" height="4" fill="#f0f"/>
<rect x="854" y="483" width="15" height="4" fill="#f0f"/>
<rect x="855" y="483" width="1" height="4" fill="#000"/>
<rect x="857" y="483" width="1" height="4" fill="#000"/>
<rect x="861" y="484" width="1" height="1" fill="#000"/>
<rect x="863" y="483" width="1" height="4" fill="#000"/>
<rect x="866" y="483" width="1" height="1" fill="#000"/>
<rect x="866" y="486" width="1" height="1" fill="#000"/>
<rect x="892" y="483" width="5" height="4" fill="#f0f"/>
<rect x="894" y="484" width="1" height="1" fill="#000"/>
<rect x="894" y="485" width="1" height="1" fill="#000"/>
<rect x="917" y="483" width="1" height="4" fill="#f0f"/>
<rect x="916" y="483" width="1" height="1" fill="#f0f"/>
<rect x="928" y="483" width="12" height="4" fill="#f0f"/>
<rect x="929" y="483" width="1" height="4" fill="#000"/>
<rect x="935" y="483" width="1" height="1" fill="#000"/>
<rect x="935" y="485" width="1" height="1" fill="#000"/>
<rect x="935" y="486" width="1" height="1" fill="#000"/>
<rect x="846" y="489" width="4" height="4" fill="#f0f"/>
<rect x="854" y="489" width="18" height="4" fill="#f0f"/>
<rect x="855" y="489" width="1" height="1" fill="#000"/>
<rect x="855" y="490" width="1" height="1" fill="#000"/>
<rect x="855" y="491" width="1" height="1" fill="#000"/>
<rect x="855" y="492" width="1" height="1" fill="#000"/>
<rect x="859" y="489" width="1" height="1" fill="#000"/>
<rect x="859" y="491" width="1" height="1" fill="#000"/>
<rect x="859" y="492" width="1" height="1" fill="#000"/>
<rect x="863" y="489" width="1" height="4" fill="#000"/>
<rect x="865" y="490" width="1" height="1" fill="#000"/>
<rect x="865" y="492" width="1" height="1" fill="#000"/>
<rect x="867" y="489" width="1" height="4" fill="#000"/>
<rect x="888" y="489" width="15" height="4" fill="#f0f"/>
<rect x="891" y="490" width="1" height="1" fill="#000"/>
<rect x="891" y="491" width="1" height="1" fill="#000"/>
<rect x="893" y="489" width="1" height="1" fill="#000"/>
<rect x="893" y="492" width="1" height="1" fill="#000"/>
<rect x="896" y="489" width="1" height="1" fill="#000"/>
<rect x="896" y="490" width="1" height="1" fill="#000"/>
<rect x="896" y="491" width="1" height="1" fill="#000"/>
<rect x="900" y="489" width="1" height="1" fill="#000"/>
<rect x="917" y="489" width="1" height="4" fill="#f0f"/>
<rect x="916" y="489" width="1" height="1" fill="#f0f"/>
<rect x="932" y="489" width="5" height="4" fill="#f0f"/>
<rect x="934" y="491" width="1" height="1" fill="#000"/>
<rect x="846" y="495" width="4" height="4" fill="#f0f"/>
<rect x="847" y="495" width="1" height="1" fill="#000"/>
<rect x="847" y="496" width="1" height="1" fill="#000"/>
<rect x="847" y="497" width="1" height="1" fill="#000"/>
<rect x="854" y="495" width="14" height="4" fill="#f0f"/>
<rect x="856" y="495" width="1" height="1" fill="#000"/>
<rect x="856" y="497" width="1" height="1" fill="#000"/>
<rect x="856" y="498" width="1" height="1" fill="#000"/>
<rect x="859" y="495" width="1" height="1" fill="#000"/>
<rect x="859" y="497" width="1" height="1" fill="#000"/>
<rect x="861" y="495" width="1" height="4" fill="#000"/>
<rect x="865" y="495" width="1" height="4" fill="#000"/>
<rect x="892" y="495" width="7" height="4" fill="#f0f"/>
<rect x="895" y="495" width="1" height="1" fill="#000"/>
<rect x="895" y="496" width="1" height="1" fill="#000"/>
<rect x="895" y="497" width="1" height="1" fill="#000"/>
<rect x="895" y="498" width="1" height="1" fill="#000"/>
<rect x="917" y="495" width="1" height="4" fill="#f0f"/>
<rect x="916" y="495" width="1" height="1" fill="#f0f"/>
<rect x="846" y="500" width="4" height="4" fill="#f0f"/>
<rect x="847" y="500" width="1" height="4" fill="#000"/>
<rect x="854" y="500" width="18" height="4" fill="#f0f"/>
<rect x="855" y="500" width="1" height="4" fill="#000"/>
<rect x="859" y="500" width="1" height="1" fill="#000"/>
<rect x="863" y="500" width="1" height="4" fill="#000"/>
<rect x="865" y="501" width="1" height="1" fill="#000"/>
<rect x="865" y="502" width="1" height="1" fill="#000"/>
<rect x="865" y="503" width="1" height="1" fill="#000"/>
<rect x="868" y="500" width="1" height="4" fill="#000"/>
<rect x="892" y="500" width="7" height="4" fill="#f0f"/>
<rect x="893" y="501" width="1" height="1" fill="#000"/>
<rect x="893" y="502" width="1" height="1" fill="#000"/>
<rect x="895" y="502" width="1" height="1" fill="#000"/>
<rect x="895" y="503" width="1" height="1" fill="#000"/>
<rect x="917" y="500" width="1" height="4" fill="#f0f"/>
<rect x="916" y="500" width="1" height="1" fill="#f0f"/>
<rect x="931" y="500" width="6" height="4" fill="#f0f"/>
<rect x="934" y="500" width="1" height="1" fill="#000"/>
<rect x="846" y="506" width="4" height="4" fill="#f0f"/>
<rect x="854" y="506" width="17" height="4" fill="#f0f"/>
<rect x="856" y="508" width="1" height="1" fill="#000"/>
<rect x="859" y="506" width="1" height="4" fill="#000"/>
<rect x="863" y="506" width="1" height="4" fill="#000"/>
<rect x="865" y="507" width="1" height="1" fill="#000"/>
<rect x="867" y="508" width="1" height="1" fill="#000"/>
<rect x="867" y="509" width="1" height="1" fill="#000"/>
<rect x="869" y="507" width="1" height="1" fill="#000"/>
<rect x="869" y="509" width="1" height="1" fill="#000"/>
<rect x="891" y="506" width="8" height="4" fill="#f0f"/>
<rect x="894" y="506" width="1" height="4" fill="#000"/>
<rect x="896" y="506" width="1" height="4" fill="#000"/>
<rect x="917" y="506" width="1" height="4" fill="#f0f"/>
<rect x="916" y="506" width="1" height="1" fill="#f0f"/>
<rect x="930" y="506" width="8" height="4" fill="#f0f"/>
<rect x="932" y="507" width="1" height="1" fill="#000"/>
<rect x="935" y="506" width="1" height="4" fill="#000"/>
<rect x="846" y="512" width="4" height="4" fill="#f0f"/>
<rect x="854" y="512" width="19" height="4" fill="#f0f"/>
<rect x="857" y="512" width="1" height="4" fill="#000"/>
<rect x="860" y="512" width="1" height="4" fill="#000"/>
<rect x="862" y="512" width="1" height="1" fill="#000"/>
<rect x="862" y="513" width="1" height="1" fill="#000"/>
<rect x="865" y="512" width="1" height="4" fill="#000"/>
<rect x="867" y="512" width="1" height="1" fill="#000"/>
<rect x="867" y="515" width="1" height="1" fill="#000"/>
<rect x="871" y="512" width="1" height="1" fill="#000"/>
<rect x="871" y="514" width="1" height="1" fill="#000"/>
<rect x="890" y="512" width="10" height="4" fill="#f0f"/>
<rect x="893" y="513" width="1" height="1" fill="#000"/>
<rect x="917" y="512" width="1" height="4" fill="#f0f"/>
<rect x="916" y="512" width="1" height="1" fill="#f0f"/>
<rect x="928" y="512" width="12" height="4" fill="#f0f"/>
<rect x="929" y="512" width="1" height="1" fill="#000"/>
<rect x="929" y="514" width="1" height="1" fill="#000"/>
<rect x="933" y="512" width="1" height="1" fill="#000"/>
<rect x="933" y="514" width="1" height="1" fill="#000"/>
<rect x="937" y="512" width="1" height="1" fill="#000"/>
<rect x="937" y="514" width="1" height="1" fill="#000"/>
<rect x="846" y="518" width="4" height="4" fill="#f0f"/>
<rect x="854" y="518" width="12" height="4" fill="#f0f"/>
<rect x="855" y="518" width="1" height="4" fill="#000"/>
<rect x="861" y="518" width="1" height="1" fill="#000"/>
<rect x="864" y="518" width="1" height="4" fill="#000"/>
<rect x="888" y="518" width="15" height="4" fill="#f0f"/>
<rect x="889" y="518" width="1" height="4" fill="#000"/>
<rect x="893" y="520" width="1" height="1" fill="#000"/>
<rect x="898" y="518" width="1" height="4" fill="#000"/>
<rect x="900" y="518" width="1" height="1" fill="#000"/>
<rect x="900" y="521" width="1" height="1" fill="#000"/>
<rect x="917" y="518" width="1" height="4" fill="#f0f"/>
<rect x="916" y="518" width="1" height="1" fill="#f0f"/>
<rect x="930" y="518" width="8" height="4" fill="#f0f"/>
<rect x="932" y="518" width="1" height="1" fill="#000"/>
<rect x="932" y="521" width="1" height="1" fill="#000"/>
<rect x="935" y="518" width="1" height="4" fill="#000"/>
<rect x="846" y="524" width="4" height="4" fill="#f0f"/>
<rect x="854" y="524" width="18" height="4" fill="#f0f"/>
<rect x="857" y="525" width="1" height="1" fill="#000"/>
<rect x="857" y="527" width="1" height="1" fill="#000"/>
<rect x="860" y="524" width="1" height="1" fill="#000"/>
<rect x="860" y="526" width="1" height="1" fill="#000"/>
<rect x="862" y="525" width="1" height="1" fill="#000"/>
<rect x="867" y="525" width="1" height="1" fill="#000"/>
<rect x="867" y="526" width="1" height="1" fill="#000"/>
<rect x="891" y="524" width="8" height="4" fill="#f0f"/>
<rect x="894" y="525" width="1" height="1" fill="#000"/>
<rect x="894" y="527" width="1" height="1" fill="#000"/>
<rect x="917" y="524" width="1" height="4" fill="#f0f"/>
<rect x="916" y="524" width="1" height="1" fill="#f0f"/>
<rect x="929" y="524" width="10" height="4" fill="#f0f"/>
<rect x="935" y="524" width="1" height="4" fill="#000"/>
<rect x="846" y="529" width="4" height="4" fill="#f0f"/>
<rect x="854" y="529" width="19" height="4" fill="#f0f"/>
<rect x="856" y="529" width="1" height="1" fill="#000"/>
<rect x="856" y="530" width="1" height="1" fill="#000"/>
<rect x="856" y="532" width="1" height="1" fill="#000"/>
<rect x="859" y="529" width="1" height="4" fill="#000"/>
<rect x="863" y="531" width="1" height="1" fill="#000"/>
<rect x="863" y="532" width="1" height="1" fill="#000"/>
<rect x="865" y="529" width="1" height="1" fill="#000"/>
<rect x="865" y="530" width="1" height="1" fill="#000"/>
<rect x="865" y="532" width="1" height="1" fill="#000"/>
<rect x="869" y="530" width="1" height="1" fill="#000"/>
<rect x="871" y="529" width="1" height="4" fill="#000"/>
<rect x="889" y="529" width="12" height="4" fill="#f0f"/>
<rect x="891" y="530" width="1" height="1" fill="#000"/>
<rect x="895" y="531" width="1" height="1" fill="#000"/>
<rect x="898" y="531" width="1" height="1" fill="#000"/>
<rect x="898" y="532" width="1" height="1" fill="#000"/>
<rect x="917" y="529" width="1" height="4" fill="#f0f"/>
<rect x="916" y="529" width="1" height="1" fill="#f0f"/>
<rect x="928" y="529" width="12" height="4" fill="#f0f"/>
<rect x="933" y="531" width="1" height="1" fill="#000"/>
<rect x="933" y="532" width="1" height="1" fill="#000"/>
<rect x="935" y="530" width="1" height="1" fill="#000"/>
<rect x="846" y="535" width="4" height="4" fill="#f0f"/>
<rect x="848" y="537" width="1" height="1" fill="#000"/>
<rect x="854" y="535" width="14" height="4" fill="#f0f"/>
<rect x="855" y="536" width="1" height="1" fill="#000"/>
<rect x="857" y="535" width="1" height="1" fill="#000"/>
<rect x="857" y="536" width="1" height="1" fill="#000"/>
<rect x="860" y="535" width="1" height="1" fill="#000"/>
<rect x="860" y="536" width="1" height="1" fill="#000"/>
<rect x="860" y="537" width="1" height="1" fill="#000"/>
<rect x="860" y="538" width="1" height="1" fill="#000"/>
<rect x="864" y="538" width="1" height="1" fill="#000"/>
<rect x="866" y="535" width="1" height="1" fill="#000"/>
<rect x="866" y="536" width="1" height="1" fill="#000"/>
<rect x="866" y="538" width="1" height="1" fill="#000"/>
<rect x="892" y="535" width="5" height="4" fill="#f0f"/>
<rect x="917" y="535" width="1" height="4" fill="#f0f"/>
<rect x="916" y="535" width="1" height="1" fill="#f0f"/>
<rect x="928" y="535" width="12" height="4" fill="#f0f"/>
<rect x="930" y="535" width="1" height="4" fill="#000"/>
<rect x="932" y="535" width="1" height="1" fill="#000"/>
<rect x="932" y="536" width="1" height="1" fill="#000"/>
<rect x="932" y="537" width="1" height="1" fill="#000"/>
<rect x="936" y="535" width="1" height="4" fill="#000"/>
<rect x="938" y="535" width="1" height="1" fill="#000"/>
<rect x="938" y="536" width="1" height="1" fill="#000"/>
<rect x="846" y="541" width="4" height="4" fill="#f0f"/>
<rect x="848" y="541" width="1" height="4" fill="#000"/>
<rect x="854" y="541" width="15" height="4" fill="#f0f"/>
<rect x="855" y="541" width="1" height="4" fill="#000"/>
<rect x="859" y="541" width="1" height="1" fill="#000"/>
<rect x="859" y="544" width="1" height="1" fill="#000"/>
<rect x="863" y="541" width="1" height="4" fill="#000"/>
<rect x="866" y="541" width="1" height="1" fill="#000"/>
<rect x="891" y="541" width="8" height="4" fill="#f0f"/>
<rect x="893" y="543" width="1" height="1" fill="#000"/>
<rect x="893" y="544" width="1" height="1" fill="#000"/>
<rect x="896" y="541" width="1" height="1" fill="#000"/>
<rect x="896" y="543" width="1" height="1" fill="#000"/>
<rect x="896" y="544" width="1" height="1" fill="#000"/>
<rect x="917" y="541" width="1" height="4" fill="#f0f"/>
<rect x="916" y="541" width="1" height="1" fill="#f0f"/>
<rect x="929" y="541" width="10" height="4" fill="#f0f"/>
<rect x="931" y="541" width="1" height="1" fill="#000"/>
<rect x="931" y="542" width="1" height="1" fill="#000"/>
<rect x="931" y="544" width="1" height="1" fill="#000"/>
<rect x="933" y="542" width="1" height="1" fill="#000"/>
<rect x="933" y="544" width="1" height="1" fill="#000"/>
<rect x="935" y="541" width="1" height="1" fill="#000"/>
<rect x="935" y="543" width="1" height="1" fill="#000"/>
<rect x="935" y="544" width="1" height="1" fill="#000"/>
<rect x="937" y="543" width="1" height="1" fill="#000"/>
<rect x="937" y="544" width="1" height="1" fill="#000"/>
<rect x="846" y="547" width="4" height="4" fill="#f0f"/>
<rect x="854" y="547" width="18" height="4" fill="#f0f"/>
<rect x="856" y="548" width="1" height="1" fill="#000"/>
<rect x="856" y="550" width="1" height="1" fill="#000"/>
<rect x="862" y="549" width="1" height="1" fill="#000"/>
<rect x="866" y="548" width="1" height="1" fill="#000"/>
<rect x="866" y="550" width="1" height="1" fill="#000"/>
<rect x="870" y="547" width="1" height="1" fill="#000"/>
<rect x="870" y="548" width="1" height="1" fill="#000"/>
<rect x="891" y="547" width="8" height="4" fill="#f0f"/>
<rect x="892" y="547" width="1" height="1" fill="#000"/>
<rect x="892" y="549" width="1" height="1" fill="#000"/>
<rect x="895" y="547" width="1" height="4" fill="#000"/>
<rect x="917" y="547" width="1" height="4" fill="#f0f"/>
<rect x="916" y="547" width="1" height="1" fill="#f0f"/>
<rect x="931" y="547" width="6" height="4" fill="#f0f"/>
<rect x="933" y="547" width="1" height="4" fill="#000"/>
<rect x="846" y="553" width="4" height="4" fill="#f0f"/>
<rect x="854" y="553" width="16" height="4" fill="#f0f"/>
<rect x="855" y="553" width="1" height="4" fill="#000"/>
<rect x="859" y="555" width="1" height="1" fill="#000"/>
<rect x="862" y="553" width="1" height="4" fill="#000"/>
<rect x="865" y="554" width="1" height="1" fill="#000"/>
<rect x="865" y="555" width="1" height="1" fill="#000"/>
<rect x="892" y="553" width="7" height="4" fill="#f0f"/>
<rect x="897" y="553" width="1" height="1" fill="#000"/>
<rect x="897" y="554" width="1" height="1" fill="#000"/>
<rect x="897" y="556" width="1" height="1" fill="#000"/>
<rect x="917" y="553" width="1" height="4" fill="#f0f"/>
<rect x="916" y="553" width="1" height="1" fill="#f0f"/>
<rect x="928" y="553" width="12" height="4" fill="#f0f"/>
<rect x="930" y="556" width="1" height="1" fill="#000"/>
<rect x="934" y="553" width="1" height="1" fill="#000"/>
<rect x="934" y="556" width="1" height="1" fill="#000"/>
<rect x="936" y="553" width="1" height="1" fill="#000"/>
<rect x="936" y="554" width="1" height="1" fill="#000"/>
<rect x="936" y="556" width="1" height="1" fill="#000"/>
<rect x="938" y="556" width="1" height="1" fill="#000"/>
<rect x="846" y="559" width="4" height="4" fill="#f0f"/>
<rect x="847" y="561" width="1" height="1" fill="#000"/>
<rect x="854" y="559" width="19" height="4" fill="#f0f"/>
<rect x="857" y="559" width="1" height="4" fill="#000"/>
<rect x="861" y="559" width="1" height="4" fill="#000"/>
<rect x="865" y="560" width="1" height="1" fill="#000"/>
<rect x="865" y="562" width="1" height="1" fill="#000"/>
<rect x="869" y="560" width="1" height="1" fill="#000"/>
<rect x="869" y="561" width="1" height="1" fill="#000"/>
<rect x="871" y="559" width="1" height="1" fill="#000"/>
<rect x="871" y="560" width="1" height="1" fill="#000"/>
<rect x="871" y="561" width="1" height="1" fill="#000"/>
<rect x="888" y="559" width="15" height="4" fill="#f0f"/>
<rect x="890" y="559" width="1" height="4" fill="#000"/>
<rect x="894" y="560" width="1" height="1" fill="#000"/>
<rect x="894" y="561" width="1" height="1" fill="#000"/>
<rect x="897" y="559" width="1" height="4" fill="#000"/>
<rect x="901" y="559" width="1" height="1" fill="#000"/>
<rect x="901" y="561" width="1" height="1" fill="#000"/>
<rect x="917" y="559" width="1" height="4" fill="#f0f"/>
<rect x="916" y="559" width="1" height="1" fill="#f0f"/>
<rect x="932" y="559" width="5" height="4" fill="#f0f"/>
<rect x="935" y="561" width="1" height="1" fill="#000"/>
<rect x="846" y="564" width="4" height="4" fill="#f0f"/>
<rect x="847" y="564" width="1" height="4" fill="#000"/>
<rect x="854" y="564" width="12" height="4" fill="#f0f"/>
<rect x="856" y="564" width="1" height="1" fill="#000"/>
<rect x="856" y="566" width="1" height="1" fill="#000"/>
<rect x="856" y="567" width="1" height="1" fill="#000"/>
<rect x="859" y="564" width="1" height="1" fill="#000"/>
<rect x="859" y="565" width="1" height="1" fill="#000"/>
<rect x="859" y="567" width="1" height="1" fill="#000"/>
<rect x="861" y="564" width="1" height="1" fill="#000"/>
<rect x="888" y="564" width="15" height="4" fill="#f0f"/>
<rect x="890" y="565" width="1" height="1" fill="#000"/>
<rect x="892" y="564" width="1" height="1" fill="#000"/>
<rect x="892" y="565" width="1" height="1" fill="#000"/>
<rect x="892" y="566" width="1" height="1" fill="#000"/>
<rect x="892" y="567" width="1" height="1" fill="#000"/>
<rect x="896" y="565" width="1" height="1" fill="#000"/>
<rect x="896" y="566" width="1" height="1" fill="#000"/>
<rect x="896" y="567" width="1" height="1" fill="#000"/>
<rect x="898" y="564" width="1" height="4" fill="#000"/>
<rect x="901" y="564" width="1" height="1" fill="#000"/>
<rect x="901" y="565" width="1" height="1" fill="#000"/>
<rect x="917" y="564" width="1" height="4" fill="#f0f"/>
<rect x="916" y="564" width="1" height="1" fill="#f0f"/>
<rect x="930" y="564" width="8" height="4" fill="#f0f"/>
<rect x="933" y="564" width="1" height="1" fill="#000"/>
<rect x="933" y="566" width="1" height="1" fill="#000"/>
<rect x="933" y="567" width="1" height="1" fill="#000"/>
<rect x="935" y="564" width="1" height="1" fill="#000"/>
<rect x="935" y="566" width="1" height="1" fill="#000"/>
<rect x="935" y="567" width="1" height="1" fill="#000"/>
<rect x="846" y="570" width="4" height="4" fill="#f0f"/>
<rect x="854" y="570" width="18" height="4" fill="#f0f"/>
<rect x="855" y="572" width="1" height="1" fill="#000"/>
<rect x="855" y="573" width="1" height="1" fill="#000"/>
<rect x="859" y="570" width="1" height="1" fill="#000"/>
<rect x="859" y="571" width="1" height="1" fill="#000"/>
<rect x="859" y="572" width="1" height="1" fill="#000"/>
<rect x="862" y="570" width="1" height="4" fill="#000"/>
<rect x="864" y="571" width="1" height="1" fill="#000"/>
<rect x="864" y="572" width="1" height="1" fill="#000"/>
<rect x="864" y="573" width="1" height="1" fill="#000"/>
<rect x="868" y="572" width="1" height="1" fill="#000"/>
<rect x="888" y="570" width="15" height="4" fill="#f0f"/>
<rect x="890" y="570" width="1" height="1" fill="#000"/>
<rect x="890" y="571" width="1" height="1" fill="#000"/>
<rect x="890" y="573" width="1" height="1" fill="#000"/>
<rect x="894" y="570" width="1" height="4" fill="#000"/>
<rect x="897" y="570" width="1" height="4" fill="#000"/>
<rect x="917" y="570" width="1" height="4" fill="#f0f"/>
<rect x="916" y="570" width="1" height="1" fill="#f0f"/>
<rect x="846" y="576" width="4" height="4" fill="#f0f"/>
<rect x="854" y="576" width="14" height="4" fill="#f0f"/>
<rect x="856" y="578" width="1" height="1" fill="#000"/>
<rect x="860" y="578" width="1" height="1" fill="#000"/>
<rect x="862" y="576" width="1" height="1" fill="#000"/>
<rect x="862" y="578" width="1" height="1" fill="#000"/>
<rect x="862" y="579" width="1" height="1" fill="#000"/>
<rect x="866" y="577" width="1" height="1" fill="#000"/>
<rect x="891" y="576" width="8" height="4" fill="#f0f"/>
<rect x="894" y="576" width="1" height="4" fill="#000"/>
<rect x="897" y="576" width="1" height="1" fill="#000"/>
<rect x="897" y="577" width="1" height="1" fill="#000"/>
<rect x="917" y="576" width="1" height="4" fill="#f0f"/>
<rect x="916" y="576" width="1" height="1" fill="#f0f"/>
<rect x="930" y="576" width="8" height="4" fill="#f0f"/>
<rect x="933" y="576" width="1" height="4" fill="#000"/>
<rect x="846" y="582" width="4" height="4" fill="#f0f"/>
<rect x="854" y="582" width="16" height="4" fill="#f0f"/>
<rect x="857" y="583" width="1" height="1" fill="#000"/>
<rect x="857" y="585" width="1" height="1" fill="#000"/>
<rect x="863" y="585" width="1" height="1" fill="#000"/>
<rect x="889" y="582" width="12" height="4" fill="#f0f"/>
<rect x="891" y="582" width="1" height="1" fill="#000"/>
<rect x="891" y="584" width="1" height="1" fill="#000"/>
<rect x="891" y="585" width="1" height="1" fill="#000"/>
<rect x="894" y="582" width="1" height="4" fill="#000"/>
<rect x="898" y="582" width="1" height="1" fill="#000"/>
<rect x="898" y="583" width="1" height="1" fill="#000"/>
<rect x="917" y="582" width="1" height="4" fill="#f0f"/>
<rect x="916" y="582" width="1" height="1" fill="#f0f"/>
<rect x="931" y="582" width="6" height="4" fill="#f0f"/>
<rect x="934" y="582" width="1" height="4" fill="#000"/>
<rect x="846" y="588" width="4" height="4" fill="#f0f"/>
<rect x="848" y="588" width="1" height="4" fill="#000"/>
<rect x="854" y="588" width="17" height="4" fill="#f0f"/>
<rect x="857" y="589" width="1" height="1" fill="#000"/>
<rect x="857" y="590" width="1" height="1" fill="#000"/>
<rect x="860" y="588" width="1" height="1" fill="#000"/>
<rect x="860" y="590" width="1" height="1" fill="#000"/>
<rect x="864" y="588" width="1" height="4" fill="#000"/>
<rect x="868" y="588" width="1" height="4" fill="#000"/>
<rect x="892" y="588" width="7" height="4" fill="#f0f"/>
<rect x="895" y="590" width="1" height="1" fill="#000"/>
<rect x="895" y="591" width="1" height="1" fill="#000"/>
<rect x="897" y="588" width="1" height="4" fill="#000"/>
<rect x="917" y="588" width="1" height="4" fill="#f0f"/>
<rect x="916" y="588" width="1" height="1" fill="#f0f"/>
<rect x="928" y="588" width="12" height="4" fill="#f0f"/>
<rect x="930" y="591" width="1" height="1" fill="#000"/>
<rect x="934" y="588" width="1" height="1" fill="#000"/>
<rect x="934" y="590" width="1" height="1" fill="#000"/>
<rect x="937" y="590" width="1" height="1" fill="#000"/>
<rect x="937" y="591" width="1" height="1" fill="#000"/>
<rect x="846" y="593" width="4" height="4" fill="#f0f"/>
<rect x="854" y="593" width="18" height="4" fill="#f0f"/>
<rect x="856" y="595" width="1" height="1" fill="#000"/>
<rect x="860" y="593" width="1" height="4" fill="#000"/>
<rect x="863" y="593" width="1" height="1" fill="#000"/>
<rect x="863" y="594" width="1" height="1" fill="#000"/>
<rect x="863" y="596" width="1" height="1" fill="#000"/>
<rect x="866" y="593" width="1" height="1" fill="#000"/>
<rect x="866" y="596" width="1" height="1" fill="#000"/>
<rect x="869" y="593" width="1" height="1" fill="#000"/>
<rect x="869" y="594" width="1" height="1" fill="#000"/>
<rect x="888" y="593" width="15" height="4" fill="#f0f"/>
<rect x="889" y="593" width="1" height="1" fill="#000"/>
<rect x="889" y="594" width="1" height="1" fill="#000"/>
<rect x="889" y="595" width="1" height="1" fill="#000"/>
<rect x="892" y="596" width="1" height="1" fill="#000"/>
<rect x="896" y="593" width="1" height="1" fill="#000"/>
<rect x="896" y="594" width="1" height="1" fill="#000"/>
<rect x="898" y="593" width="1" height="1" fill="#000"/>
<rect x="917" y="593" width="1" height="4" fill="#f0f"/>
<rect x="916" y="593" width="1" height="1" fill="#f0f"/>
<rect x="930" y="593" width="8" height="4" fill="#f0f"/>
<rect x="933" y="594" width="1" height="1" fill="#000"/>
<rect x="936" y="593" width="1" height="4" fill="#000"/>
<rect x="846" y="599" width="4" height="4" fill="#f0f"/>
<rect x="854" y="599" width="17" height="4" fill="#f0f"/>
<rect x="856" y="602" width="1" height="1" fill="#000"/>
<rect x="858" y="599" width="1" height="4" fill="#000"/>
<rect x="862" y="601" width="1" height="1" fill="#000"/>
<rect x="862" y="602" width="1" height="1" fill="#000"/>
<rect x="864" y="599" width="1" height="4" fill="#000"/>
<rect x="868" y="602" width="1" height="1" fill="#000"/>
<rect x="889" y="599" width="12" height="4" fill="#f0f"/>
<rect x="890" y="599" width="1" height="1" fill="#000"/>
<rect x="890" y="600" width="1" height="1" fill="#000"/>
<rect x="894" y="600" width="1" height="1" fill="#000"/>
<rect x="897" y="602" width="1" height="1" fill="#000"/>
<rect x="899" y="599" width="1" height="4" fill="#000"/>
<rect x="917" y="599" width="1" height="4" fill="#f0f"/>
<rect x="916" y="599" width="1" height="1" fill="#f0f"/>
<rect x="928" y="599" width="12" height="4" fill="#f0f"/>
<rect x="930" y="600" width="1" height="1" fill="#000"/>
<rect x="934" y="599" width="1" height="4" fill="#000"/>
<rect x="936" y="600" width="1" height="1" fill="#000"/>
<rect x="936" y="601" width="1" height="1" fill="#000"/>
<rect x="936" y="602" width="1" height="1" fill="#000"/>
<rect x="846" y="605" width="4" height="4" fill="#f0f"/>
<rect x="854" y="605" width="12" height="4" fill="#f0f"/>
<rect x="857" y="605" width="1" height="1" fill="#000"/>
<rect x="857" y="606" width="1" height="1" fill="#000"/>
<rect x="857" y="608" width="1" height="1" fill="#000"/>
<rect x="860" y="606" width="1" height="1" fill="#000"/>
<rect x="860" y="607" width="1" height="1" fill="#000"/>
<rect x="862" y="605" width="1" height="4" fill="#000"/>
<rect x="891" y="605" width="8" height="4" fill="#f0f"/>
<rect x="893" y="605" width="1" height="1" fill="#000"/>
<rect x="893" y="608" width="1" height="1" fill="#000"/>
<rect x="896" y="606" width="1" height="1" fill="#000"/>
<rect x="917" y="605" width="1" height="4" fill="#f0f"/>
<rect x="916" y="605" width="1" height="1" fill="#f0f"/>
<rect x="932" y="605" width="5" height="4" fill="#f0f"/>
<rect x="933" y="605" width="1" height="4" fill="#000"/>
<rect x="846" y="611" width="4" height="4" fill="#f0f"/>
<rect x="847" y="611" width="1" height="1" fill="#000"/>
<rect x="847" y="612" width="1" height="1" fill="#000"/>
<rect x="854" y="611" width="17" height="4" fill="#f0f"/>
<rect x="855" y="611" width="1" height="1" fill="#000"/>
<rect x="858" y="614" width="1" height="1" fill="#000"/>
<rect x="862" y="611" width="1" height="1" fill="#000"/>
<rect x="862" y="612" width="1" height="1" fill="#000"/>
<rect x="865" y="611" width="1" height="4" fill="#000"/>
<rect x="869" y="611" width="1" height="4" fill="#000"/>
<rect x="892" y="611" width="5" height="4" fill="#f0f"/>
<rect x="895" y="611" width="1" height="4" fill="#000"/>
<rect x="917" y="611" width="1" height="4" fill="#f0f"/>
<rect x="916" y="611" width="1" height="1" fill="#f0f"/>
<rect x="931" y="611" width="6" height="4" fill="#f0f"/>
<rect x="934" y="611" width="1" height="1" fill="#000"/>
<rect x="846" y="617" width="4" height="4" fill="#f0f"/>
<rect x="847" y="617" width="1" height="1" fill="#000"/>
<rect x="854" y="617" width="17" height="4" fill="#f0f"/>
<rect x="856" y="617" width="1" height="1" fill="#000"/>
<rect x="856" y="619" width="1" height="1" fill="#000"/>
<rect x="858" y="619" width="1" height="1" fill="#000"/>
<rect x="858" y="620" width="1" height="1" fill="#000"/>
<rect x="861" y="620" width="1" height="1" fill="#000"/>
<rect x="864" y="617" width="1" height="4" fill="#000"/>
<rect x="868" y="617" width="1" height="1" fill="#000"/>
<rect x="868" y="618" width="1" height="1" fill="#000"/>
<rect x="890" y="617" width="10" height="4" fill="#f0f"/>
<rect x="893" y="617" width="1" height="1" fill="#000"/>
<rect x="893" y="618" width="1" height="1" fill="#000"/>
<rect x="895" y="619" width="1" height="1" fill="#000"/>
<rect x="895" y="620" width="1" height="1" fill="#000"/>
<rect x="897" y="618" width="1" height="1" fill="#000"/>
<rect x="917" y="617" width="1" height="4" fill="#f0f"/>
<rect x="916" y="617" width="1" height="1" fill="#f0f"/>
<rect x="846" y="623" width="4" height="4" fill="#f0f"/>
<rect x="848" y="624" width="1" height="1" fill="#000"/>
<rect x="848" y="626" width="1" height="1" fill="#000"/>
<rect x="854" y="623" width="14" height="4" fill="#f0f"/>
<rect x="857" y="623" width="1" height="1" fill="#000"/>
<rect x="857" y="624" width="1" height="1" fill="#000"/>
<rect x="857" y="626" width="1" height="1" fill="#000"/>
<rect x="860" y="624" width="1" height="1" fill="#000"/>
<rect x="860" y="625" width="1" height="1" fill="#000"/>
<rect x="864" y="623" width="1" height="4" fill="#000"/>
<rect x="888" y="623" width="15" height="4" fill="#f0f"/>
<rect x="889" y="623" width="1" height="4" fill="#000"/>
<rect x="893" y="626" width="1" height="1" fill="#000"/>
<rect x="896" y="623" width="1" height="4" fill="#000"/>
<rect x="898" y="623" width="1" height="4" fill="#000"/>
<rect x="901" y="624" width="1" height="1" fill="#000"/>
<rect x="901" y="625" width="1" height="1" fill="#000"/>
<rect x="917" y="623" width="1" height="4" fill="#f0f"/>
<rect x="916" y="623" width="1" height="1" fill="#f0f"/>
<rect x="928" y="623" width="12" height="4" fill="#f0f"/>
<rect x="929" y="625" width="1" height="1" fill="#000"/>
<rect x="931" y="623" width="1" height="1" fill="#000"/>
<rect x="931" y="624" width="1" height="1" fill="#000"/>
<rect x="931" y="625" width="1" height="1" fill="#000"/>
<rect x="931" y="626" width="1" height="1" fill="#000"/>
<rect x="933" y="623" width="1" height="4" fill="#000"/>
<rect x="935" y="624" width="1" height="1" fill="#000"/>
<rect x="935" y="625" width="1" height="1" fill="#000"/>
<rect x="846" y="628" width="4" height="4" fill="#f0f"/>
<rect x="854" y="628" width="16" height="4" fill="#f0f"/>
<rect x="856" y="629" width="1" height="1" fill="#000"/>
<rect x="856" y="630" width="1" height="1" fill="#000"/>
<rect x="859" y="630" width="1" height="1" fill="#000"/>
<rect x="864" y="630" width="1" height="1" fill="#000"/>
<rect x="888" y="628" width="15" height="4" fill="#f0f"/>
<rect x="891" y="631" width="1" height="1" fill="#000"/>
<rect x="895" y="629" width="1" height="1" fill="#000"/>
<rect x="895" y="630" width="1" height="1" fill="#000"/>
<rect x="898" y="629" width="1" height="1" fill="#000"/>
<rect x="900" y="629" width="1" height="1" fill="#000"/>
<rect x="917" y="628" width="1" height="4" fill="#f0f"/>
<rect x="916" y="628" width="1" height="1" fill="#f0f"/>
<rect x="929" y="628" width="10" height="4" fill="#f0f"/>
<rect x="932" y="628" width="1" height="4" fill="#000"/>
<rect x="934" y="628" width="1" height="4" fill="#000"/>
<rect x="846" y="634" width="4" height="4" fill="#f0f"/>
<rect x="848" y="636" width="1" height="1" fill="#000"/>
<rect x="848" y="637" width="1" height="1" fill="#000"/>
<rect x="854" y="634" width="19" height="4" fill="#f0f"/>
<rect x="855" y="637" width="1" height="1" fill="#000"/>
<rect x="861" y="634" width="1" height="4" fill="#000"/>
<rect x="864" y="635" width="1" height="1" fill="#000"/>
<rect x="864" y="637" width="1" height="1" fill="#000"/>
<rect x="871" y="634" width="1" height="4" fill="#000"/>
<rect x="892" y="634" width="7" height="4" fill="#f0f"/>
<rect x="897" y="634" width="1" height="4" fill="#000"/>
<rect x="917" y="634" width="1" height="4" fill="#f0f"/>
<rect x="916" y="634" width="1" height="1" fill="#f0f"/>
<rect x="930" y="634" width="8" height="4" fill="#f0f"/>
<rect x="931" y="634" width="1" height="1" fill="#000"/>
<rect x="931" y="637" width="1" height="1" fill="#000"/>
<rect x="934" y="634" width="1" height="1" fill="#000"/>
<rect x="934" y="637" width="1" height="1" fill="#000"/>
<rect x="846" y="640" width="4" height="4" fill="#f0f"/>
<rect x="848" y="640" width="1" height="1" fill="#000"/>
<rect x="848" y="641" width="1" height="1" fill="#000"/>
<rect x="848" y="643" width="1" height="1" fill="#000"/>
<rect x="854" y="640" width="16" height="4" fill="#f0f"/>
<rect x="856" y="641" width="1" height="1" fill="#000"/>
<rect x="856" y="642" width="1" height="1" fill="#000"/>
<rect x="858" y="640" width="1" height="1" fill="#000"/>
<rect x="858" y="643" width="1" height="1" fill="#000"/>
<rect x="862" y="640" width="1" height="4" fill="#000"/>
<rect x="864" y="640" width="1" height="4" fill="#000"/>
<rect x="892" y="640" width="5" height="4" fill="#f0f"/>
<rect x="917" y="640" width="1" height="4" fill="#f0f"/>
<rect x="916" y="640" width="1" height="1" fill="#f0f"/>
<rect x="846" y="646" width="4" height="4" fill="#f0f"/>
<rect x="848" y="646" width="1" height="1" fill="#000"/>
<rect x="848" y="648" width="1" height="1" fill="#000"/>
<rect x="848" y="649" width="1" height="1" fill="#000"/>
<rect x="854" y="646" width="18" height="4" fill="#f0f"/>
<rect x="857" y="646" width="1" height="4" fill="#000"/>
<rect x="861" y="646" width="1" height="1" fill="#000"/>
<rect x="861" y="647" width="1" height="1" fill="#000"/>
<rect x="861" y="649" width="1" height="1" fill="#000"/>
<rect x="863" y="646" width="1" height="1" fill="#000"/>
<rect x="863" y="649" width="1" height="1" fill="#000"/>
<rect x="866" y="646" width="1" height="4" fill="#000"/>
<rect x="870" y="646" width="1" height="4" fill="#000"/>
<rect x="890" y="646" width="10" height="4" fill="#f0f"/>
<rect x="891" y="648" width="1" height="1" fill="#000"/>
<rect x="893" y="646" width="1" height="1" fill="#000"/>
<rect x="893" y="647" width="1" height="1" fill="#000"/>
<rect x="893" y="649" width="1" height="1" fill="#000"/>
<rect x="897" y="646" width="1" height="1" fill="#000"/>
<rect x="897" y="647" width="1" height="1" fill="#000"/>
<rect x="897" y="648" width="1" height="1" fill="#000"/>
<rect x="917" y="646" width="1" height="4" fill="#f0f"/>
<rect x="916" y="646" width="1" height="1" fill="#f0f"/>
<rect x="929" y="646" width="10" height="4" fill="#f0f"/>
<rect x="932" y="646" width="1" height="4" fill="#000"/>
<rect x="935" y="646" width="1" height="4" fill="#000"/>
<rect x="846" y="652" width="4" height="4" fill="#f0f"/>
<rect x="848" y="652" width="1" height="1" fill="#000"/>
<rect x="848" y="653" width="1" height="1" fill="#000"/>
<rect x="848" y="654" width="1" height="1" fill="#000"/>
<rect x="854" y="652" width="19" height="4" fill="#f0f"/>
<rect x="857" y="653" width="1" height="1" fill="#000"/>
<rect x="857" y="655" width="1" height="1" fill="#000"/>
<rect x="861" y="652" width="1" height="1" fill="#000"/>
<rect x="861" y="653" width="1" height="1" fill="#000"/>
<rect x="865" y="652" width="1" height="1" fill="#000"/>
<rect x="865" y="653" width="1" height="1" fill="#000"/>
<rect x="865" y="655" width="1" height="1" fill="#000"/>
<rect x="869" y="652" width="1" height="4" fill="#000"/>
<rect x="888" y="652" width="15" height="4" fill="#f0f"/>
<rect x="889" y="652" width="1" height="4" fill="#000"/>
<rect x="891" y="653" width="1" height="1" fill="#000"/>
<rect x="893" y="654" width="1" height="1" fill="#000"/>
<rect x="893" y="655" width="1" height="1" fill="#000"/>
<rect x="895" y="652" width="1" height="4" fill="#000"/>
<rect x="899" y="652" width="1" height="4" fill="#000"/>
<rect x="901" y="652" width="1" height="1" fill="#000"/>
<rect x="901" y="653" width="1" height="1" fill="#000"/>
<rect x="901" y="654" width="1" height="1" fill="#000"/>
<rect x="901" y="655" width="1" height="1" fill="#000"/>
<rect x="917" y="652" width="1" height="4" fill="#f0f"/>
<rect x="916" y="652" width="1" height="1" fill="#f0f"/>
<rect x="929" y="652" width="10" height="4" fill="#f0f"/>
<rect x="932" y="654" width="1" height="1" fill="#000"/>
<rect x="932" y="655" width="1" height="1" fill="#000"/>
<rect x="935" y="652" width="1" height="1" fill="#000"/>
<rect x="935" y="654" width="1" height="1" fill="#000"/>
<rect x="937" y="652" width="1" height="1" fill="#000"/>
<rect x="937" y="654" width="1" height="1" fill="#000"/>
<rect x="846" y="658" width="4" height="4" fill="#f0f"/>
<rect x="847" y="658" width="1" height="1" fill="#000"/>
<rect x="847" y="659" width="1" height="1" fill="#000"/>
<rect x="847" y="661" width="1" height="1" fill="#000"/>
<rect x="854" y="658" width="13" height="4" fill="#f0f"/>
<rect x="855" y="661" width="1" height="1" fill="#000"/>
<rect x="858" y="658" width="1" height="4" fill="#000"/>
<rect x="860" y="660" width="1" height="1" fill="#000"/>
<rect x="860" y="661" width="1" height="1" fill="#000"/>
<rect x="863" y="659" width="1" height="1" fill="#000"/>
<rect x="863" y="660" width="1" height="1" fill="#000"/>
<rect x="863" y="661" width="1" height="1" fill="#000"/>
<rect x="889" y="658" width="12" height="4" fill="#f0f"/>
<rect x="890" y="658" width="1" height="4" fill="#000"/>
<rect x="893" y="658" width="1" height="4" fill="#000"/>
<rect x="895" y="658" width="1" height="1" fill="#000"/>
<rect x="895" y="660" width="1" height="1" fill="#000"/>
<rect x="895" y="661" width="1" height="1" fill="#000"/>
<rect x="897" y="659" width="1" height="1" fill="#000"/>
<rect x="897" y="660" width="1" height="1" fill="#000"/>
<rect x="899" y="658" width="1" height="1" fill="#000"/>
<rect x="899" y="659" width="1" height="1" fill="#000"/>
<rect x="917" y="658" width="1" height="4" fill="#f0f"/>
<rect x="916" y="658" width="1" height="1" fill="#f0f"/>
<rect x="932" y="658" width="5" height="4" fill="#f0f"/>
<rect x="935" y="661" width="1" height="1" fill="#000"/>
<rect x="843" y="272" width="150" height="1" fill="#fff"/>
<rect x="843" y="272" width="1" height="443" fill="#fff"/>
<rect x="843" y="661" width="150" height="1" fill="#fff"/>
<rect x="843" y="668" width="150" height="1" fill="#fff"/>
<rect x="843" y="674" width="68" height="1" fill="#0f0"/>
<rect x="843" y="681" width="68" height="1" fill="#0f0"/>
<rect x="843" y="686" width="68" height="1" fill="#0f0"/>
<rect x="843" y="698" width="68" height="1" fill="#0f0"/>
<rect x="843" y="703" width="68" height="1" fill="#0f0"/>
<rect x="843" y="709" width="68" height="1" fill="#0f0"/>
<rect x="843" y="691" width="109" height="1" fill="#0f0"/>
<rect x="911" y="701" width="41" height="1" fill="#0f0"/>
<rect x="911" y="707" width="41" height="1" fill="#0f0"/>
<rect x="952" y="684" width="41" height="1" fill="#0f0"/>
<rect x="952" y="700" width="41" height="1" fill="#0f0"/>
<rect x="853" y="668" width="1" height="47" fill="#0f0"/>
<rect x="860" y="668" width="1" height="23" fill="#0f0"/>
<rect x="868" y="668" width="1" height="23" fill="#0f0"/>
<rect x="863" y="703" width="1" height="12" fill="#0f0"/>
<rect x="876" y="691" width="1" height="24" fill="#0f0"/>
<rect x="886" y="668" width="1" height="47" fill="#0f0"/>
<rect x="897" y="668" width="1" height="47" fill="#0f0"/>
<rect x="911" y="668" width="1" height="47" fill="#0f0"/>
<rect x="931" y="691" width="1" height="24" fill="#0f0"/>
<rect x="942" y="691" width="1" height="16" fill="#0f0"/>
<rect x="915" y="701" width="1" height="6" fill="#0f0"/>
<rect x="922" y="701" width="1" height="6" fill="#0f0"/>
<rect x="927" y="701" width="1" height="6" fill="#0f0"/>
<rect x="952" y="668" width="1" height="47" fill="#0f0"/>
<rect x="853" y="662" width="1" height="6" fill="#0f0"/>
<rect x="880" y="662" width="1" height="6" fill="#0f0"/>
<rect x="914" y="662" width="1" height="6" fill="#0f0"/>
<rect x="920" y="662" width="1" height="6" fill="#0f0"/>
<rect x="944" y="662" width="1" height="6" fill="#0f0"/>
<rect x="956" y="662" width="1" height="6" fill="#0f0"/>
<rect x="968" y="662" width="1" height="6" fill="#0f0"/>
<rect x="845" y="666" width="2" height="1" fill="#f0f"/>
<rect x="845" y="665" width="2" height="1" fill="#f0f"/>
<rect x="845" y="664" width="1" height="3" fill="#f0f"/>
<rect x="845" y="664" width="1" height="3" fill="#f0f"/>
<rect x="846" y="664" width="1" height="3" fill="#f0f"/>
<rect x="848" y="663" width="2" height="1" fill="#f0f"/>
<rect x="848" y="663" width="2" height="1" fill="#f0f"/>
<rect x="848" y="665" width="2" height="1" fill="#f0f"/>
<rect x="848" y="663" width="1" height="4" fill="#f0f"/>
<rect x="849" y="664" width="1" height="3" fill="#f0f"/>
<rect x="856" y="666" width="3" height="1" fill="#f0f"/>
<rect x="856" y="664" width="3" height="1" fill="#f0f"/>
<rect x="856" y="663" width="3" height="1" fill="#f0f"/>
<rect x="858" y="663" width="1" height="4" fill="#f0f"/>
<rect x="856" y="663" width="1" height="4" fill="#f0f"/>
<rect x="874" y="663" width="1" height="1" fill="#f0f"/>
<rect x="874" y="663" width="2" height="1" fill="#f0f"/>
<rect x="873" y="663" width="3" height="1" fill="#f0f"/>
<rect x="875" y="663" width="1" height="4" fill="#f0f"/>
<rect x="882" y="665" width="2" height="1" fill="#f0f"/>
<rect x="882" y="664" width="2" height="1" fill="#f0f"/>
<rect x="882" y="664" width="1" height="3" fill="#f0f"/>
<rect x="882" y="664" width="1" height="2" fill="#f0f"/>
<rect x="897" y="663" width="2" height="1" fill="#f0f"/>
<rect x="897" y="664" width="2" height="1" fill="#f0f"/>
<rect x="897" y="665" width="2" height="1" fill="#f0f"/>
<rect x="897" y="664" width="1" height="3" fill="#f0f"/>
<rect x="914" y="666" width="1" height="1" fill="#f0f"/>
<rect x="914" y="665" width="1" height="1" fill="#f0f"/>
<rect x="914" y="664" width="1" height="2" fill="#f0f"/>
<rect x="916" y="665" width="2" height="1" fill="#f0f"/>
<rect x="916" y="666" width="2" height="1" fill="#f0f"/>
<rect x="917" y="663" width="1" height="3" fill="#f0f"/>
<rect x="916" y="664" width="1" height="2" fill="#f0f"/>
<rect x="917" y="663" width="1" height="4" fill="#f0f"/>
<rect x="924" y="664" width="2" height="1" fill="#f0f"/>
<rect x="924" y="666" width="2" height="1" fill="#f0f"/>
<rect x="924" y="663" width="2" height="1" fill="#f0f"/>
<rect x="925" y="664" width="1" height="2" fill="#f0f"/>
<rect x="924" y="663" width="1" height="3" fill="#f0f"/>
<rect x="925" y="664" width="1" height="3" fill="#f0f"/>
<rect x="936" y="666" width="3" height="1" fill="#f0f"/>
<rect x="937" y="666" width="1" height="1" fill="#f0f"/>
<rect x="937" y="665" width="2" height="1" fill="#f0f"/>
<rect x="938" y="663" width="1" height="4" fill="#f0f"/>
<rect x="937" y="664" width="1" height="2" fill="#f0f"/>
<rect x="944" y="665" width="2" height="1" fill="#f0f"/>
<rect x="944" y="665" width="2" height="1" fill="#f0f"/>
<rect x="944" y="663" width="1" height="4" fill="#f0f"/>
<rect x="944" y="664" width="1" height="3" fill="#f0f"/>
<rect x="949" y="665" width="2" height="1" fill="#f0f"/>
<rect x="949" y="665" width="2" height="1" fill="#f0f"/>
<rect x="949" y="665" width="2" height="1" fill="#f0f"/>
<rect x="950" y="663" width="1" height="4" fill="#f0f"/>
<rect x="950" y="663" width="1" height="4" fill="#f0f"/>
<rect x="957" y="663" width="2" height="1" fill="#f0f"/>
<rect x="957" y="665" width="2" height="1" fill="#f0f"/>
<rect x="958" y="663" width="1" height="3" fill="#f0f"/>
<rect x="958" y="663" width="1" height="3" fill="#f0f"/>
<rect x="958" y="664" width="1" height="2" fill="#f0f"/>
<rect x="963" y="665" width="2" height="1" fill="#f0f"/>
<rect x="963" y="666" width="2" height="1" fill="#f0f"/>
<rect x="963" y="663" width="2" height="1" fill="#f0f"/>
<rect x="964" y="664" width="1" height="2" fill="#f0f"/>
<rect x="963" y="664" width="1" height="3" fill="#f0f"/>
<rect x="964" y="664" width="1" height="3" fill="#f0f"/>
<rect x="970" y="665" width="2" height="1" fill="#f0f"/>
<rect x="970" y="663" width="2" height="1" fill="#f0f"/>
<rect x="971" y="663" width="1" height="3" fill="#f0f"/>
<rect x="970" y="664" width="1" height="2" fill="#f0f"/>
<rect x="970" y="664" width="1" height="2" fill="#f0f"/>
<rect x="988" y="665" width="2" height="1" fill="#f0f"/>
<rect x="988" y="666" width="2" height="1" fill="#f0f"/>
<rect x="988" y="664" width="2" height="1" fill="#f0f"/>
<rect x="989" y="663" width="1" height="3" fill="#f0f"/>
<rect x="845" y="687" width="6" height="3" fill="#f0f"/>
<rect x="853" y="687" width="6" height="3" fill="#f0f"/>
<rect x="862" y="687" width="5" height="3" fill="#f0f"/>
<rect x="864" y="687" width="1" height="3" fill="#000"/>
<rect x="870" y="687" width="15" height="3" fill="#f0f"/>
<rect x="872" y="688" width="1" height="1" fill="#000"/>
<rect x="878" y="687" width="1" height="1" fill="#000"/>
<rect x="883" y="687" width="1" height="3" fill="#000"/>
<rect x="889" y="687" width="6" height="3" fill="#f0f"/>
<rect x="898" y="687" width="6" height="3" fill="#f0f"/>
<rect x="901" y="687" width="1" height="3" fill="#000"/>
<rect x="905" y="687" width="1" height="3" fill="#f0f"/>
<rect x="845" y="692" width="6" height="4" fill="#f0f"/>
<rect x="847" y="694" width="1" height="1" fill="#000"/>
<rect x="847" y="695" width="1" height="1" fill="#000"/>
<rect x="854" y="692" width="21" height="4" fill="#f0f"/>
<rect x="857" y="692" width="1" height="1" fill="#000"/>
<rect x="862" y="695" width="1" height="1" fill="#000"/>
<rect x="865" y="693" width="1" height="1" fill="#000"/>
<rect x="865" y="694" width="1" height="1" fill="#000"/>
<rect x="871" y="695" width="1" height="1" fill="#000"/>
<rect x="878" y="692" width="8" height="4" fill="#f0f"/>
<rect x="845" y="698" width="6" height="4" fill="#f0f"/>
<rect x="849" y="699" width="1" height="1" fill="#000"/>
<rect x="854" y="698" width="20" height="4" fill="#f0f"/>
<rect x="856" y="698" width="1" height="1" fill="#000"/>
<rect x="856" y="700" width="1" height="1" fill="#000"/>
<rect x="860" y="698" width="1" height="1" fill="#000"/>
<rect x="863" y="701" width="1" height="1" fill="#000"/>
<rect x="867" y="698" width="1" height="4" fill="#000"/>
<rect x="871" y="701" width="1" height="1" fill="#000"/>
<rect x="845" y="704" width="6" height="4" fill="#f0f"/>
<rect x="845" y="710" width="6" height="4" fill="#f0f"/>
<rect x="849" y="713" width="1" height="1" fill="#000"/>
<rect x="879" y="710" width="6" height="4" fill="#f0f"/>
<rect x="882" y="710" width="1" height="4" fill="#000"/>
<rect x="926" y="677" width="3" height="2" fill="#f0f"/>
<rect x="926" y="676" width="3" height="2" fill="#f0f"/>
<rect x="925" y="678" width="4" height="2" fill="#f0f"/>
<rect x="925" y="677" width="2" height="5" fill="#f0f"/>
<rect x="926" y="677" width="2" height="5" fill="#f0f"/>
<rect x="927" y="678" width="2" height="4" fill="#f0f"/>
<rect x="931" y="676" width="4" height="2" fill="#f0f"/>
<rect x="930" y="679" width="4" height="2" fill="#f0f"/>
<rect x="932" y="678" width="2" height="4" fill="#f0f"/>
<rect x="934" y="678" width="2" height="3" fill="#f0f"/>
<rect x="932" y="677" width="2" height="5" fill="#f0f"/>
<rect x="915" y="692" width="11" height="4" fill="#f0f"/>
<rect x="916" y="694" width="1" height="1" fill="#000"/>
<rect x="920" y="695" width="1" height="1" fill="#000"/>
<rect x="934" y="692" width="6" height="4" fill="#f0f"/>
<rect x="935" y="693" width="1" height="1" fill="#000"/>
<rect x="935" y="694" width="1" height="1" fill="#000"/>
<rect x="935" y="695" width="1" height="1" fill="#000"/>
<rect x="944" y="692" width="6" height="4" fill="#f0f"/>
<rect x="947" y="692" width="1" height="1" fill="#000"/>
<rect x="943" y="701" width="8" height="4" fill="#f0f"/>
<rect x="944" y="702" width="1" height="1" fill="#000"/>
<rect x="947" y="702" width="1" height="1" fill="#000"/>
<rect x="914" y="709" width="14" height="4" fill="#f0f"/>
<rect x="915" y="709" width="1" height="4" fill="#000"/>
<rect x="920" y="712" width="1" height="1" fill="#000"/>
<rect x="933" y="709" width="8" height="4" fill="#f0f"/>
<rect x="936" y="709" width="1" height="4" fill="#000"/>
<rect x="939" y="709" width="1" height="1" fill="#000"/>
<rect x="946" y="709" width="4" height="4" fill="#f0f"/>
<rect x="954" y="672" width="4" height="2" fill="#f0f"/>
<rect x="954" y="675" width="4" height="2" fill="#f0f"/>
<rect x="954" y="673" width="2" height="7" fill="#f0f"/>
<rect x="955" y="674" width="2" height="6" fill="#f0f"/>
<rect x="959" y="676" width="5" height="2" fill="#f0f"/>
<rect x="959" y="679" width="4" height="2" fill="#f0f"/>
<rect x="959" y="673" width="5" height="2" fill="#f0f"/>
<rect x="963" y="672" width="2" height="6" fill="#f0f"/>
<rect x="966" y="673" width="3" height="2" fill="#f0f"/>
<rect x="965" y="673" width="4" height="2" fill="#f0f"/>
<rect x="965" y="673" width="3" height="2" fill="#f0f"/>
<rect x="968" y="674" width="2" height="6" fill="#f0f"/>
<rect x="966" y="672" width="2" height="8" fill="#f0f"/>
<rect x="970" y="675" width="5" height="2" fill="#f0f"/>
<rect x="970" y="678" width="5" height="2" fill="#f0f"/>
<rect x="970" y="677" width="5" height="2" fill="#f0f"/>
<rect x="971" y="672" width="2" height="8" fill="#f0f"/>
<rect x="972" y="673" width="2" height="6" fill="#f0f"/>
<rect x="972" y="673" width="2" height="7" fill="#f0f"/>
<rect x="976" y="677" width="4" height="2" fill="#f0f"/>
<rect x="976" y="673" width="4" height="2" fill="#f0f"/>
<rect x="976" y="673" width="3" height="2" fill="#f0f"/>
<rect x="979" y="674" width="2" height="4" fill="#f0f"/>
<rect x="977" y="674" width="2" height="6" fill="#f0f"/>
<rect x="981" y="672" width="5" height="2" fill="#f0f"/>
<rect x="981" y="678" width="5" height="2" fill="#f0f"/>
<rect x="983" y="673" width="2" height="6" fill="#f0f"/>
<rect x="982" y="673" width="2" height="6" fill="#f0f"/>
<rect x="983" y="672" width="2" height="7" fill="#f0f"/>
<rect x="987" y="673" width="3" height="2" fill="#f0f"/>
<rect x="988" y="674" width="2" height="2" fill="#f0f"/>
<rect x="987" y="676" width="4" height="2" fill="#f0f"/>
<rect x="987" y="673" width="2" height="7" fill="#f0f"/>
<rect x="989" y="673" width="2" height="7" fill="#f0f"/>
<rect x="953" y="688" width="1" height="7" fill="#f0f"/>
<rect x="953" y="688" width="3" height="1" fill="#f0f"/>
<rect x="953" y="691" width="3" height="1" fill="#f0f"/>
<rect x="955" y="691" width="1" height="4" fill="#f0f"/>
<rect x="953" y="694" width="3" height="1" fill="#f0f"/>
<rect x="958" y="691" width="3" height="1" fill="#f0f"/>
<rect x="959" y="689" width="1" height="5" fill="#f0f"/>
<rect x="962" y="690" width="5" height="2" fill="#f0f"/>
<rect x="962" y="688" width="4" height="2" fill="#f0f"/>
<rect x="964" y="689" width="2" height="6" fill="#f0f"/>
<rect x="966" y="688" width="2" height="6" fill="#f0f"/>
<rect x="968" y="689" width="5" height="2" fill="#f0f"/>
<rect x="968" y="691" width="5" height="2" fill="#f0f"/>
<rect x="970" y="688" width="2" height="5" fill="#f0f"/>
<rect x="976" y="691" width="4" height="2" fill="#f0f"/>
<rect x="976" y="689" width="3" height="2" fill="#f0f"/>
<rect x="976" y="692" width="4" height="2" fill="#f0f"/>
<rect x="979" y="689" width="2" height="5" fill="#f0f"/>
<rect x="975" y="689" width="2" height="5" fill="#f0f"/>
<rect x="974" y="688" width="2" height="5" fill="#f0f"/>
<rect x="982" y="693" width="4" height="2" fill="#f0f"/>
<rect x="981" y="693" width="5" height="2" fill="#f0f"/>
<rect x="984" y="689" width="2" height="6" fill="#f0f"/>
<rect x="981" y="690" width="2" height="5" fill="#f0f"/>
<rect x="985" y="688" width="2" height="7" fill="#f0f"/>
<rect x="956" y="706" width="3" height="2" fill="#f0f"/>
<rect x="957" y="711" width="1" height="2" fill="#f0f"/>
<rect x="956" y="709" width="3" height="2" fill="#f0f"/>
<rect x="957" y="707" width="2" height="4" fill="#f0f"/>
<rect x="958" y="708" width="2" height="4" fill="#f0f"/>
<rect x="960" y="711" width="2" height="2" fill="#f0f"/>
<rect x="961" y="708" width="2" height="2" fill="#f0f"/>
<rect x="961" y="706" width="2" height="2" fill="#f0f"/>
<rect x="960" y="707" width="2" height="3" fill="#f0f"/>
<rect x="964" y="708" width="3" height="2" fill="#f0f"/>
<rect x="964" y="706" width="3" height="2" fill="#f0f"/>
<rect x="965" y="711" width="1" height="2" fill="#f0f"/>
<rect x="964" y="706" width="2" height="5" fill="#f0f"/>
<rect x="969" y="706" width="1" height="2" fill="#f0f"/>
<rect x="968" y="711" width="3" height="2" fill="#f0f"/>
<rect x="968" y="707" width="2" height="5" fill="#f0f"/>
<rect x="973" y="707" width="1" height="2" fill="#f0f"/>
<rect x="972" y="710" width="3" height="2" fill="#f0f"/>
<rect x="973" y="708" width="1" height="2" fill="#f0f"/>
<rect x="972" y="708" width="2" height="2" fill="#f0f"/>
<rect x="972" y="706" width="2" height="6" fill="#f0f"/>
<rect x="976" y="709" width="3" height="2" fill="#f0f"/>
<rect x="976" y="711" width="3" height="2" fill="#f0f"/>
<rect x="977" y="709" width="2" height="2" fill="#f0f"/>
<rect x="977" y="707" width="2" height="5" fill="#f0f"/>
<rect x="976" y="706" width="2" height="4" fill="#f0f"/>
<rect x="977" y="707" width="2" height="5" fill="#f0f"/>
<rect x="981" y="706" width="1" height="2" fill="#f0f"/>
<rect x="980" y="709" width="3" height="2" fill="#f0f"/>
<rect x="981" y="709" width="2" height="2" fill="#f0f"/>
<rect x="980" y="707" width="2" height="4" fill="#f0f"/>
<rect x="980" y="706" width="2" height="5" fill="#f0f"/>
<rect x="984" y="706" width="3" height="2" fill="#f0f"/>
<rect x="985" y="706" width="1" height="2" fill="#f0f"/>
<rect x="985" y="709" width="2" height="2" fill="#f0f"/>
<rect x="986" y="706" width="2" height="6" fill="#f0f"/>
<rect x="986" y="706" width="2" height="5" fill="#f0f"/>
<polygon points="266.5,212.5 271,213.5 266,246 261,246" fill="url(#hat)" stroke="#fff" stroke-width="1"/>
<polygon points="314.5,212 318,212 323.5,246 320.5,246" fill="url(#hatb)" stroke="#fff" stroke-width="1"/>
<polyline points="271,214 284,217 289.5,215 295,215 302,216.5 315,212" stroke="#fff" stroke-width="1" fill="none"/>
<polygon points="234,245.5 266,245.5 266,250.5 234,250.5" fill="url(#hatb)" stroke="#fff" stroke-width="1"/>
<polygon points="320.5,245.5 350,245.5 350,256.5 323,256.5" fill="url(#hat)" stroke="#fff" stroke-width="1"/>
<rect x="236.5" y="240.5" width="9" height="5" stroke="#fff" stroke-width="1" fill="none"/>
<rect x="325.5" y="240.5" width="7" height="5" stroke="#fff" stroke-width="1" fill="none"/>
<rect x="289.5" y="215.5" width="6" height="18" stroke="#fff" stroke-width="1" fill="none"/>
<rect x="288.5" y="233.5" width="8" height="6" stroke="#fff" stroke-width="1" fill="none"/>
<rect x="290.5" y="239.5" width="5" height="22" stroke="#fff" stroke-width="1" fill="none"/>
<rect x="283.5" y="217.5" width="6" height="16" stroke="#fff" stroke-width="1" fill="none"/>
<rect x="296.5" y="219.5" width="6" height="15" stroke="#fff" stroke-width="1" fill="none"/>
<rect x="284" y="221" width="3" height="3" fill="#fff"/>
<rect x="298" y="224" width="3" height="3" fill="#fff"/>
<rect x="284" y="261" width="17" height="6" fill="url(#hatb)"/>
<rect x="284.5" y="261.5" width="16" height="5" stroke="#fff" stroke-width="1" fill="none"/>
<rect x="268" y="266" width="49" height="7" fill="url(#hat)"/>
<rect x="268.5" y="266.5" width="48" height="6" stroke="#fff" stroke-width="1" fill="none"/>
<rect x="292" y="200" width="1" height="7" fill="#fff"/>
<path d="M290.5,242.5 L293,242.5 L294.5,244.5 L294.5,248.5 L293,250.5 L290.5,250.5 Z" stroke="#f0f" stroke-width="1" fill="none"/>
<line x1="215" y1="251.5" x2="422" y2="251.5" stroke="#fff" stroke-width="1"/>
<rect x="215" y="251" width="21" height="22" fill="url(#hatb)"/>
<rect x="215.5" y="251.5" width="20" height="21" stroke="#fff" stroke-width="1" fill="none"/>
<rect x="237" y="252" width="4" height="18" fill="#fff"/>
<line x1="241" y1="254.5" x2="322" y2="254.5" stroke="#fff" stroke-width="1"/>
<rect x="270" y="253" width="2" height="2" fill="#fff"/>
<rect x="273" y="253" width="2" height="2" fill="#fff"/>
<rect x="276" y="253" width="2" height="2" fill="#fff"/>
<rect x="279" y="253" width="2" height="2" fill="#fff"/>
<rect x="282" y="253" width="2" height="2" fill="#fff"/>
<rect x="302" y="253" width="2" height="2" fill="#fff"/>
<rect x="305" y="253" width="2" height="2" fill="#fff"/>
<rect x="308" y="253" width="2" height="2" fill="#fff"/>
<rect x="311" y="253" width="2" height="2" fill="#fff"/>
<rect x="314" y="253" width="2" height="2" fill="#fff"/>
<line x1="215" y1="272.5" x2="410" y2="272.5" stroke="#fff" stroke-width="1"/>
<rect x="271.5" y="263.5" width="7" height="9" stroke="#fff" stroke-width="1" fill="none"/>
<rect x="234.5" y="267.5" width="6" height="5" stroke="#fff" stroke-width="1" fill="none"/>
<line x1="215" y1="280.5" x2="410" y2="280.5" stroke="#fff" stroke-width="1"/>
<rect x="215" y="280" width="31" height="6" fill="url(#hatb)"/>
<rect x="215.5" y="280.5" width="30" height="5" stroke="#fff" stroke-width="1" fill="none"/>
<rect x="268" y="280" width="49" height="6" fill="url(#hatb)"/>
<rect x="268.5" y="280.5" width="48" height="5" stroke="#fff" stroke-width="1" fill="none"/>
<rect x="330" y="280" width="30" height="5" fill="url(#hat)"/>
<rect x="330.5" y="280.5" width="29" height="4" stroke="#fff" stroke-width="1" fill="none"/>
<rect x="367" y="280" width="25" height="5" fill="url(#hatb)"/>
<rect x="367.5" y="280.5" width="24" height="4" stroke="#fff" stroke-width="1" fill="none"/>
<line x1="222" y1="291.5" x2="415" y2="291.5" stroke="#fff" stroke-width="1"/>
<rect x="267" y="277" width="14" height="1" fill="#fff"/>
<polygon points="256,293 260,297 301,284 297,280" fill="url(#hat)" stroke="#fff" stroke-width="1"/>
<rect x="350" y="252" width="57" height="5" fill="url(#hat)"/>
<rect x="350.5" y="252.5" width="56" height="4" stroke="#fff" stroke-width="1" fill="none"/>
<rect x="402" y="252" width="20" height="23" fill="url(#hatb)"/>
<rect x="402.5" y="252.5" width="19" height="22" stroke="#fff" stroke-width="1" fill="none"/>
<rect x="349.5" y="267.5" width="25" height="13" stroke="#fff" stroke-width="1" fill="none"/>
<rect x="356.5" y="262.5" width="9" height="5" stroke="#fff" stroke-width="1" fill="none"/>
<rect x="381.5" y="245.5" width="9" height="7" stroke="#fff" stroke-width="1" fill="none"/>
<rect x="385" y="234" width="1" height="5" fill="#fff"/>
<rect x="385" y="242" width="1" height="3" fill="#fff"/>
<rect x="385" y="256" width="1" height="6" fill="#fff"/>
<rect x="415" y="275" width="7" height="62" fill="url(#hat)"/>
<rect x="415.5" y="275.5" width="6" height="61" stroke="#fff" stroke-width="1" fill="none"/>
<line x1="409.5" y1="262" x2="409.5" y2="292" stroke="#fff" stroke-width="1"/>
<rect x="215" y="285" width="8" height="36" fill="url(#hat)"/>
<rect x="215.5" y="285.5" width="7" height="35" stroke="#fff" stroke-width="1" fill="none"/>
<rect x="204.5" y="320.5" width="18" height="11" stroke="#fff" stroke-width="1" fill="none"/>
<rect x="208.5" y="322.5" width="9" height="8" stroke="#fff" stroke-width="1" fill="none"/>
<rect x="205" y="332" width="18" height="6" fill="url(#hatb)"/>
<rect x="205.5" y="332.5" width="17" height="5" stroke="#fff" stroke-width="1" fill="none"/>
<rect x="209.5" y="337.5" width="14" height="40" stroke="#fff" stroke-width="1" fill="none"/>
<rect x="209" y="377" width="14" height="16" fill="url(#hatb)"/>
<rect x="209.5" y="377.5" width="13" height="15" stroke="#fff" stroke-width="1" fill="none"/>
<rect x="216" y="393" width="7" height="100" fill="url(#hat)"/>
<rect x="216.5" y="393.5" width="6" height="99" stroke="#fff" stroke-width="1" fill="none"/>
<polygon points="216.5,488 222.5,492.5 272,495.5 347,493.5 356,503 309,504.5 275,505.5 222,501.5 216.5,499" fill="url(#hat)" stroke="#fff" stroke-width="1"/>
<rect x="223.5" y="496.5" width="46" height="5" fill="#000" stroke="#fff" stroke-width="1"/>
<rect x="311.5" y="497.5" width="30" height="3" fill="#000" stroke="#fff" stroke-width="1"/>
<rect x="286.5" y="496.5" width="12" height="8" fill="#000" stroke="#fff" stroke-width="1"/>
<rect x="289" y="498" width="5" height="2" fill="#fff"/>
<rect x="289" y="498" width="2" height="5" fill="#fff"/>
<rect x="148.5" y="349.5" width="44" height="15" stroke="#fff" stroke-width="1" fill="none"/>
<rect x="164.5" y="347.5" width="27" height="18" stroke="#fff" stroke-width="1" fill="none"/>
<rect x="192.5" y="346.5" width="16" height="19" stroke="#fff" stroke-width="1" fill="none"/>
<polygon points="223,338 245,338 245,357 234,362 223,357" fill="url(#hat)" stroke="none" stroke-width="1"/>
<polygon points="223,357 234,362 245,357 245,376 223,376" fill="url(#hatb)" stroke="none" stroke-width="1"/>
<rect x="223.5" y="338.5" width="21" height="37" stroke="#fff" stroke-width="1" fill="none"/>
<rect x="236.5" y="348.5" width="13" height="16" stroke="#fff" stroke-width="1" fill="none"/>
<rect x="249.5" y="346.5" width="39" height="20" stroke="#fff" stroke-width="1" fill="none"/>
<rect x="288.5" y="343.5" width="133" height="26" stroke="#fff" stroke-width="1" fill="none"/>
<rect x="251.5" y="329.5" width="4" height="3" stroke="#fff" stroke-width="1" fill="none"/>
<rect x="256.5" y="329.5" width="4" height="3" stroke="#fff" stroke-width="1" fill="none"/>
<rect x="249.5" y="333.5" width="2" height="3" stroke="#fff" stroke-width="1" fill="none"/>
<rect x="252.5" y="333.5" width="3" height="3" stroke="#fff" stroke-width="1" fill="none"/>
<rect x="256.5" y="333.5" width="2" height="3" stroke="#fff" stroke-width="1" fill="none"/>
<rect x="259.5" y="333.5" width="4" height="3" stroke="#fff" stroke-width="1" fill="none"/>
<rect x="247.5" y="337.5" width="2" height="3" stroke="#fff" stroke-width="1" fill="none"/>
<rect x="250.5" y="337.5" width="2" height="3" stroke="#fff" stroke-width="1" fill="none"/>
<rect x="254.5" y="337.5" width="3" height="3" stroke="#fff" stroke-width="1" fill="none"/>
<rect x="259.5" y="337.5" width="3" height="3" stroke="#fff" stroke-width="1" fill="none"/>
<rect x="263.5" y="337.5" width="2" height="3" stroke="#fff" stroke-width="1" fill="none"/>
<rect x="245.5" y="341.5" width="4" height="3" stroke="#fff" stroke-width="1" fill="none"/>
<rect x="251.5" y="341.5" width="2" height="3" stroke="#fff" stroke-width="1" fill="none"/>
<rect x="254.5" y="341.5" width="3" height="3" stroke="#fff" stroke-width="1" fill="none"/>
<rect x="259.5" y="341.5" width="2" height="3" stroke="#fff" stroke-width="1" fill="none"/>
<rect x="262.5" y="341.5" width="4" height="3" stroke="#fff" stroke-width="1" fill="none"/>
<line x1="245" y1="345.5" x2="268" y2="345.5" stroke="#fff" stroke-width="1"/>
<rect x="251.5" y="381.5" width="3" height="3" stroke="#fff" stroke-width="1" fill="none"/>
<rect x="256.5" y="381.5" width="2" height="3" stroke="#fff" stroke-width="1" fill="none"/>
<rect x="259.5" y="381.5" width="3" height="3" stroke="#fff" stroke-width="1" fill="none"/>
<rect x="249.5" y="377.5" width="4" height="3" stroke="#fff" stroke-width="1" fill="none"/>
<rect x="255.5" y="377.5" width="4" height="3" stroke="#fff" stroke-width="1" fill="none"/>
<rect x="260.5" y="377.5" width="4" height="3" stroke="#fff" stroke-width="1" fill="none"/>
<rect x="247.5" y="373.5" width="3" height="3" stroke="#fff" stroke-width="1" fill="none"/>
<rect x="251.5" y="373.5" width="4" height="3" stroke="#fff" stroke-width="1" fill="none"/>
<rect x="257.5" y="373.5" width="2" height="3" stroke="#fff" stroke-width="1" fill="none"/>
<rect x="261.5" y="373.5" width="3" height="3" stroke="#fff" stroke-width="1" fill="none"/>
<rect x="245.5" y="369.5" width="3" height="3" stroke="#fff" stroke-width="1" fill="none"/>
<rect x="249.5" y="369.5" width="4" height="3" stroke="#fff" stroke-width="1" fill="none"/>
<rect x="254.5" y="369.5" width="2" height="3" stroke="#fff" stroke-width="1" fill="none"/>
<rect x="258.5" y="369.5" width="4" height="3" stroke="#fff" stroke-width="1" fill="none"/>
<rect x="263.5" y="369.5" width="3" height="3" stroke="#fff" stroke-width="1" fill="none"/>
<line x1="245" y1="368.5" x2="268" y2="368.5" stroke="#fff" stroke-width="1"/>
<rect x="252.0" y="322.5" width="9" height="6" stroke="#fff" stroke-width="1" fill="none"/>
<rect x="252.0" y="385.5" width="9" height="6" stroke="#fff" stroke-width="1" fill="none"/>
<rect x="311.5" y="329.5" width="2" height="3" stroke="#fff" stroke-width="1" fill="none"/>
<rect x="315.5" y="329.5" width="3" height="3" stroke="#fff" stroke-width="1" fill="none"/>
<rect x="319.5" y="329.5" width="2" height="3" stroke="#fff" stroke-width="1" fill="none"/>
<rect x="309.5" y="333.5" width="4" height="3" stroke="#fff" stroke-width="1" fill="none"/>
<rect x="315.5" y="333.5" width="4" height="3" stroke="#fff" stroke-width="1" fill="none"/>
<rect x="320.5" y="333.5" width="2" height="3" stroke="#fff" stroke-width="1" fill="none"/>
<rect x="324.5" y="333.5" width="2" height="3" stroke="#fff" stroke-width="1" fill="none"/>
<rect x="307.5" y="337.5" width="2" height="3" stroke="#fff" stroke-width="1" fill="none"/>
<rect x="311.5" y="337.5" width="3" height="3" stroke="#fff" stroke-width="1" fill="none"/>
<rect x="315.5" y="337.5" width="2" height="3" stroke="#fff" stroke-width="1" fill="none"/>
<rect x="319.5" y="337.5" width="3" height="3" stroke="#fff" stroke-width="1" fill="none"/>
<rect x="324.5" y="337.5" width="4" height="3" stroke="#fff" stroke-width="1" fill="none"/>
<rect x="305.5" y="341.5" width="4" height="3" stroke="#fff" stroke-width="1" fill="none"/>
<rect x="310.5" y="341.5" width="2" height="3" stroke="#fff" stroke-width="1" fill="none"/>
<rect x="314.5" y="341.5" width="2" height="3" stroke="#fff" stroke-width="1" fill="none"/>
<rect x="318.5" y="341.5" width="3" height="3" stroke="#fff" stroke-width="1" fill="none"/>
<rect x="323.5" y="341.5" width="2" height="3" stroke="#fff" stroke-width="1" fill="none"/>
<rect x="327.5" y="341.5" width="2" height="3" stroke="#fff" stroke-width="1" fill="none"/>
<line x1="305" y1="345.5" x2="330" y2="345.5" stroke="#fff" stroke-width="1"/>
<rect x="311.5" y="381.5" width="2" height="3" stroke="#fff" stroke-width="1" fill="none"/>
<rect x="315.5" y="381.5" width="3" height="3" stroke="#fff" stroke-width="1" fill="none"/>
<rect x="319.5" y="381.5" width="4" height="3" stroke="#fff" stroke-width="1" fill="none"/>
<rect x="309.5" y="377.5" width="2" height="3" stroke="#fff" stroke-width="1" fill="none"/>
<rect x="312.5" y="377.5" width="2" height="3" stroke="#fff" stroke-width="1" fill="none"/>
<rect x="315.5" y="377.5" width="4" height="3" stroke="#fff" stroke-width="1" fill="none"/>
<rect x="321.5" y="377.5" width="4" height="3" stroke="#fff" stroke-width="1" fill="none"/>
<rect x="307.5" y="373.5" width="3" height="3" stroke="#fff" stroke-width="1" fill="none"/>
<rect x="312.5" y="373.5" width="2" height="3" stroke="#fff" stroke-width="1" fill="none"/>
<rect x="316.5" y="373.5" width="2" height="3" stroke="#fff" stroke-width="1" fill="none"/>
<rect x="319.5" y="373.5" width="3" height="3" stroke="#fff" stroke-width="1" fill="none"/>
<rect x="324.5" y="373.5" width="2" height="3" stroke="#fff" stroke-width="1" fill="none"/>
<rect x="305.5" y="369.5" width="4" height="3" stroke="#fff" stroke-width="1" fill="none"/>
<rect x="310.5" y="369.5" width="4" height="3" stroke="#fff" stroke-width="1" fill="none"/>
<rect x="316.5" y="369.5" width="2" height="3" stroke="#fff" stroke-width="1" fill="none"/>
<rect x="319.5" y="369.5" width="2" height="3" stroke="#fff" stroke-width="1" fill="none"/>
<rect x="323.5" y="369.5" width="2" height="3" stroke="#fff" stroke-width="1" fill="none"/>
<rect x="326.5" y="369.5" width="4" height="3" stroke="#fff" stroke-width="1" fill="none"/>
<line x1="305" y1="368.5" x2="330" y2="368.5" stroke="#fff" stroke-width="1"/>
<rect x="313.0" y="322.5" width="9" height="6" stroke="#fff" stroke-width="1" fill="none"/>
<rect x="313.0" y="385.5" width="9" height="6" stroke="#fff" stroke-width="1" fill="none"/>
<rect x="377.5" y="329.5" width="3" height="3" stroke="#fff" stroke-width="1" fill="none"/>
<rect x="382.5" y="329.5" width="4" height="3" stroke="#fff" stroke-width="1" fill="none"/>
<rect x="375.5" y="333.5" width="2" height="3" stroke="#fff" stroke-width="1" fill="none"/>
<rect x="379.5" y="333.5" width="4" height="3" stroke="#fff" stroke-width="1" fill="none"/>
<rect x="385.5" y="333.5" width="2" height="3" stroke="#fff" stroke-width="1" fill="none"/>
<rect x="373.5" y="337.5" width="3" height="3" stroke="#fff" stroke-width="1" fill="none"/>
<rect x="377.5" y="337.5" width="2" height="3" stroke="#fff" stroke-width="1" fill="none"/>
<rect x="381.5" y="337.5" width="2" height="3" stroke="#fff" stroke-width="1" fill="none"/>
<rect x="385.5" y="337.5" width="2" height="3" stroke="#fff" stroke-width="1" fill="none"/>
<rect x="388.5" y="337.5" width="3" height="3" stroke="#fff" stroke-width="1" fill="none"/>
<rect x="371.5" y="341.5" width="4" height="3" stroke="#fff" stroke-width="1" fill="none"/>
<rect x="377.5" y="341.5" width="3" height="3" stroke="#fff" stroke-width="1" fill="none"/>
<rect x="381.5" y="341.5" width="3" height="3" stroke="#fff" stroke-width="1" fill="none"/>
<rect x="385.5" y="341.5" width="3" height="3" stroke="#fff" stroke-width="1" fill="none"/>
<rect x="390.5" y="341.5" width="3" height="3" stroke="#fff" stroke-width="1" fill="none"/>
<line x1="371" y1="345.5" x2="393" y2="345.5" stroke="#fff" stroke-width="1"/>
<rect x="377.5" y="381.5" width="3" height="3" stroke="#fff" stroke-width="1" fill="none"/>
<rect x="381.5" y="381.5" width="4" height="3" stroke="#fff" stroke-width="1" fill="none"/>
<rect x="375.5" y="377.5" width="4" height="3" stroke="#fff" stroke-width="1" fill="none"/>
<rect x="381.5" y="377.5" width="2" height="3" stroke="#fff" stroke-width="1" fill="none"/>
<rect x="385.5" y="377.5" width="4" height="3" stroke="#fff" stroke-width="1" fill="none"/>
<rect x="373.5" y="373.5" width="3" height="3" stroke="#fff" stroke-width="1" fill="none"/>
<rect x="378.5" y="373.5" width="4" height="3" stroke="#fff" stroke-width="1" fill="none"/>
<rect x="384.5" y="373.5" width="4" height="3" stroke="#fff" stroke-width="1" fill="none"/>
<rect x="389.5" y="373.5" width="2" height="3" stroke="#fff" stroke-width="1" fill="none"/>
<rect x="371.5" y="369.5" width="4" height="3" stroke="#fff" stroke-width="1" fill="none"/>
<rect x="377.5" y="369.5" width="2" height="3" stroke="#fff" stroke-width="1" fill="none"/>
<rect x="381.5" y="369.5" width="2" height="3" stroke="#fff" stroke-width="1" fill="none"/>
<rect x="385.5" y="369.5" width="3" height="3" stroke="#fff" stroke-width="1" fill="none"/>
<rect x="390.5" y="369.5" width="3" height="3" stroke="#fff" stroke-width="1" fill="none"/>
<line x1="371" y1="368.5" x2="393" y2="368.5" stroke="#fff" stroke-width="1"/>
<rect x="377.5" y="322.5" width="9" height="6" stroke="#fff" stroke-width="1" fill="none"/>
<rect x="377.5" y="385.5" width="9" height="6" stroke="#fff" stroke-width="1" fill="none"/>
<rect x="266" y="329" width="22" height="1" fill="#f00"/>
<rect x="289" y="321" width="15" height="23" fill="url(#hatb)"/>
<rect x="289.5" y="321.5" width="14" height="22" stroke="#fff" stroke-width="1" fill="none"/>
<rect x="290" y="322" width="13" height="2" fill="#f00"/>
<rect x="329" y="309" width="18" height="35" fill="url(#hat)"/>
<rect x="329.5" y="309.5" width="17" height="34" stroke="#fff" stroke-width="1" fill="none"/>
<rect x="327" y="311" width="19" height="2" fill="#f00"/>
<rect x="349" y="303" width="21" height="41" fill="url(#hatb)"/>
<rect x="349.5" y="303.5" width="20" height="40" stroke="#fff" stroke-width="1" fill="none"/>
<rect x="350" y="305" width="19" height="2" fill="#f00"/>
<rect x="394" y="312" width="16" height="32" fill="url(#hat)"/>
<rect x="394.5" y="312.5" width="15" height="31" stroke="#fff" stroke-width="1" fill="none"/>
<rect x="392" y="313" width="17" height="2" fill="#f00"/>
<path d="M269,291.5 L256.5,296 L256.5,328 M272,292 L260.5,297 L260.5,328" stroke="#fff" stroke-width="1" fill="none"/>
<path d="M298.5,285 L315.5,305.5 L315.5,328 M302,284 L318.8,304 L318.8,328" stroke="#fff" stroke-width="1" fill="none"/>
<polygon points="299,285 303,283 319,303 316,306" fill="url(#hatb)" stroke="#fff" stroke-width="1"/>
<path d="M360.5,283.5 L380.5,305.5 L380.5,328 M364,283 L383.8,304 L383.8,328" stroke="#fff" stroke-width="1" fill="none"/>
<rect x="344" y="292" width="1" height="21" fill="#fff"/>
<rect x="404" y="292" width="1" height="38" fill="#fff"/>
<rect x="289" y="369" width="15" height="22" fill="url(#hat)"/>
<rect x="289.5" y="369.5" width="14" height="21" stroke="#fff" stroke-width="1" fill="none"/>
<rect x="290" y="389" width="13" height="2" fill="#f00"/>
<rect x="329" y="369" width="18" height="33" fill="url(#hatb)"/>
<rect x="329.5" y="369.5" width="17" height="32" stroke="#fff" stroke-width="1" fill="none"/>
<rect x="330" y="400" width="20" height="2" fill="#f00"/>
<rect x="349" y="369" width="21" height="39" fill="url(#hat)"/>
<rect x="349.5" y="369.5" width="20" height="38" stroke="#fff" stroke-width="1" fill="none"/>
<rect x="350" y="406" width="19" height="2" fill="#f00"/>
<rect x="394" y="369" width="16" height="31" fill="url(#hatb)"/>
<rect x="394.5" y="369.5" width="15" height="30" stroke="#fff" stroke-width="1" fill="none"/>
<rect x="395" y="398" width="17" height="2" fill="#f00"/>
<path d="M225,375 L244,375 L244,382.5 L269,382.5 L269,383 L287,383 L287,479 L225,479 Z" fill="url(#hatb)"/>
<path d="M287,391 L304,391 L304,382.5 L329,382.5 L329,401 L348,401 L348,452 L329,452 L329,449 L305.5,449 L305.5,463 L287,463 Z" fill="url(#hat)"/>
<rect x="244" y="383" width="25" height="22" fill="#000"/>
<rect x="304" y="383" width="25" height="22" fill="#000"/>
<rect x="244" y="449" width="25" height="31" fill="#000"/>
<rect x="269" y="471" width="18" height="9" fill="#000"/>
<rect x="225" y="412" width="123" height="29" fill="#000"/>
<polyline points="244,375 244,405.5 268.5,405.5 268.5,383" stroke="#fff" stroke-width="1" fill="none"/>
<line x1="243.5" y1="382.5" x2="269" y2="382.5" stroke="#fff" stroke-width="1"/>
<polyline points="304.5,382.5 304.5,405.5 329.5,405.5 329.5,401" stroke="#fff" stroke-width="1" fill="none"/>
<line x1="304" y1="382.5" x2="329" y2="382.5" stroke="#fff" stroke-width="1"/>
<line x1="286.5" y1="383" x2="286.5" y2="471" stroke="#fff" stroke-width="1"/>
<polyline points="224.5,375 224.5,479.5 243.5,479.5 243.5,449.5 268.5,449.5 268.5,470.5 286.5,470.5" stroke="#fff" stroke-width="1" fill="none"/>
<polyline points="286.5,463.5 305.5,463.5 305.5,449.5 329.5,449.5 329.5,452.5 347.5,452.5 347.5,401" stroke="#fff" stroke-width="1" fill="none"/>
<rect x="225" y="376" width="18" height="2" fill="#f00"/>
<rect x="270" y="384" width="17" height="2" fill="#f00"/>
<rect x="224" y="477" width="21" height="2" fill="#f00"/>
<rect x="270" y="469" width="21" height="2" fill="#f00"/>
<rect x="288" y="461" width="22" height="2" fill="#f00"/>
<rect x="327" y="451" width="22" height="2" fill="#f00"/>
<rect x="286" y="408" width="2" height="5" fill="#a0f"/>
<rect x="286" y="441" width="2" height="5" fill="#a0f"/>
<rect x="225.5" y="412.5" width="122" height="29" stroke="#fff" stroke-width="1" fill="none"/>
<path d="M236,424.5 L276,424.5 Q280,427 276,429.5 L236,429.5 Q232,427 236,424.5 Z" stroke="#fff" stroke-width="1" fill="none"/>
<path d="M299,424.5 L338,424.5 Q342,427 338,429.5 L299,429.5 Q295,427 299,424.5 Z" stroke="#fff" stroke-width="1" fill="none"/>
<rect x="285" y="418" width="5" height="18" fill="#f0f"/>
<rect x="286" y="420" width="1" height="1" fill="#000"/>
<rect x="289" y="420" width="1" height="1" fill="#000"/>
<rect x="285" y="423" width="1" height="1" fill="#000"/>
<rect x="285" y="426" width="1" height="1" fill="#000"/>
<rect x="286" y="426" width="1" height="1" fill="#000"/>
<rect x="287" y="426" width="1" height="1" fill="#000"/>
<rect x="288" y="426" width="1" height="1" fill="#000"/>
<rect x="289" y="426" width="1" height="1" fill="#000"/>
<rect x="285" y="433" width="1" height="1" fill="#000"/>
<rect x="287" y="433" width="1" height="1" fill="#000"/>
<rect x="289" y="433" width="1" height="1" fill="#000"/>
<rect x="292" y="413" width="1" height="29" fill="#0f0"/>
<rect x="291" y="413" width="3" height="1" fill="#0f0"/>
<rect x="291" y="440" width="3" height="1" fill="#0f0"/>
<rect x="348.5" y="406.5" width="22" height="41" stroke="#fff" stroke-width="1" fill="none"/>
<rect x="350" y="408" width="19" height="2" fill="#f00"/>
<rect x="350" y="444" width="19" height="2" fill="#f00"/>
<rect x="370.5" y="414.5" width="24" height="25" stroke="#fff" stroke-width="1" fill="none"/>
<rect x="394.5" y="411.5" width="17" height="32" stroke="#fff" stroke-width="1" fill="none"/>
<rect x="396" y="412" width="14" height="2" fill="#f00"/>
<rect x="396" y="441" width="14" height="2" fill="#f00"/>
<line x1="412" y1="415.5" x2="427" y2="415.5" stroke="#fff" stroke-width="1"/>
<rect x="416" y="381" width="6" height="35" fill="url(#hatb)"/>
<rect x="416.5" y="381.5" width="5" height="34" stroke="#fff" stroke-width="1" fill="none"/>
<rect x="421" y="381" width="7" height="35" fill="url(#hat)"/>
<rect x="421.5" y="381.5" width="6" height="34" stroke="#fff" stroke-width="1" fill="none"/>
<rect x="414.5" y="415.5" width="13" height="30" stroke="#fff" stroke-width="1" fill="none"/>
<rect x="415" y="418" width="6" height="18" fill="#f0f"/>
<rect x="417" y="419" width="1" height="1" fill="#000"/>
<rect x="418" y="419" width="1" height="1" fill="#000"/>
<rect x="415" y="421" width="6" height="1" fill="#000"/>
<rect x="417" y="423" width="1" height="1" fill="#000"/>
<rect x="420" y="423" width="1" height="1" fill="#000"/>
<rect x="415" y="425" width="6" height="1" fill="#000"/>
<rect x="415" y="427" width="6" height="1" fill="#000"/>
<rect x="415" y="429" width="6" height="1" fill="#000"/>
<rect x="415" y="431" width="6" height="1" fill="#000"/>
<rect x="415" y="433" width="1" height="1" fill="#000"/>
<rect x="417" y="412" width="1" height="40" fill="#0f0"/>
<rect x="421" y="416" width="1" height="30" fill="#0f0"/>
<rect x="416" y="446" width="12" height="13" fill="url(#hat)"/>
<rect x="416.5" y="446.5" width="11" height="12" stroke="#fff" stroke-width="1" fill="none"/>
<rect x="376.5" y="459.5" width="49" height="17" stroke="#fff" stroke-width="1" fill="none"/>
<rect x="378.5" y="452.5" width="8" height="7" stroke="#fff" stroke-width="1" fill="none"/>
<rect x="412.5" y="452.5" width="8" height="7" stroke="#fff" stroke-width="1" fill="none"/>
<rect x="419" y="454" width="1" height="29" fill="#0f0"/>
<rect x="413" y="461" width="5" height="16" fill="#f0f"/>
<rect x="413" y="463" width="5" height="1" fill="#000"/>
<rect x="413" y="465" width="5" height="1" fill="#000"/>
<rect x="413" y="468" width="5" height="1" fill="#000"/>
<rect x="413" y="470" width="1" height="1" fill="#000"/>
<rect x="413" y="475" width="1" height="1" fill="#000"/>
<rect x="416" y="475" width="1" height="1" fill="#000"/>
<path d="M377.5,477 L377.5,498 L372,503.5 L356,503.5 L360.5,510.5 L416,510.5 Q421.5,510.5 421.5,505 L421.5,477 Z M383.5,485.5 L415.5,485.5 L415.5,499 Q415.5,503.5 411,503.5 L388,503.5 Q383.5,503.5 383.5,499 Z" fill="url(#hat)" fill-rule="evenodd" stroke="#fff" stroke-width="1"/>
<rect x="394" y="485" width="18" height="12" fill="url(#hat)"/>
<rect x="394.5" y="485.5" width="17" height="11" stroke="#fff" stroke-width="1" fill="none"/>
<rect x="392" y="494" width="22" height="2" fill="#f00"/>
<rect x="391" y="476" width="14" height="2" fill="#00f"/>
<line x1="345" y1="494" x2="356" y2="503.5" stroke="#fff" stroke-width="1"/>
<rect x="421" y="335" width="62" height="8" fill="url(#hatb)"/>
<rect x="421.5" y="335.5" width="61" height="7" stroke="#fff" stroke-width="1" fill="none"/>
<rect x="421" y="376" width="62" height="6" fill="url(#hat)"/>
<rect x="421.5" y="376.5" width="61" height="5" stroke="#fff" stroke-width="1" fill="none"/>
<rect x="421.5" y="346.5" width="56" height="20" stroke="#fff" stroke-width="1" fill="none"/>
<path d="M445,353.5 L458,353.5 Q461.5,356.5 458,359.5 L445,359.5 Q441.5,356.5 445,353.5 Z" stroke="#fff" stroke-width="1" fill="none"/>
<rect x="463.5" y="366.5" width="10" height="10" stroke="#fff" stroke-width="1" fill="none"/>
<line x1="464" y1="367" x2="473" y2="376" stroke="#fff" stroke-width="1"/>
<line x1="473" y1="367" x2="464" y2="376" stroke="#fff" stroke-width="1"/>
<rect x="416.5" y="366.5" width="8" height="10" stroke="#fff" stroke-width="1" fill="none"/>
<line x1="417" y1="367" x2="424" y2="376" stroke="#fff" stroke-width="1"/>
<line x1="424" y1="367" x2="417" y2="376" stroke="#fff" stroke-width="1"/>
<rect x="445" y="366" width="13" height="7" fill="url(#hatb)"/>
<rect x="445.5" y="366.5" width="12" height="6" stroke="#fff" stroke-width="1" fill="none"/>
<circle cx="450.5" cy="330.5" r="13" stroke="url(#hat)" stroke-width="6" fill="none"/>
<circle cx="450.5" cy="330.5" r="16" stroke="#fff" stroke-width="1" fill="none"/>
<circle cx="450.5" cy="330.5" r="10" stroke="#fff" stroke-width="1" fill="none"/>
<circle cx="450.5" cy="330.5" r="6.5" stroke="#fff" stroke-width="1" fill="none"/>
<circle cx="450.5" cy="330.5" r="3" stroke="#fff" stroke-width="1" fill="none"/>
<rect x="447.5" y="307.5" width="7" height="8" stroke="#fff" stroke-width="1" fill="none"/>
<rect x="446.5" y="304.5" width="9" height="3" stroke="#fff" stroke-width="1" fill="none"/>
<rect x="477.5" y="348.5" width="14" height="16" stroke="#fff" stroke-width="1" fill="none"/>
<rect x="491.5" y="350.5" width="13" height="14" stroke="#fff" stroke-width="1" fill="none"/>
<rect x="500.5" y="353.5" width="11" height="7" stroke="#fff" stroke-width="1" fill="none"/>
<rect x="510.5" y="324.5" width="6" height="64" stroke="#fff" stroke-width="1" fill="none"/>
<polygon points="483,343 510,332 510,338 483,348" fill="url(#hat)" stroke="#fff" stroke-width="1"/>
<polygon points="483,366 510,376 510,382 483,372" fill="url(#hatb)" stroke="#fff" stroke-width="1"/>
<rect x="209" y="351" width="5" height="11" fill="#f0f"/>
<rect x="210" y="353" width="1" height="1" fill="#000"/>
<rect x="211" y="353" width="1" height="1" fill="#000"/>
<rect x="209" y="355" width="5" height="1" fill="#000"/>
<rect x="209" y="357" width="5" height="1" fill="#000"/>
<rect x="209" y="360" width="5" height="1" fill="#000"/>
<rect x="217" y="350" width="3" height="12" fill="#f0f"/>
<rect x="218" y="352" width="1" height="1" fill="#000"/>
<rect x="219" y="352" width="1" height="1" fill="#000"/>
<rect x="217" y="354" width="3" height="1" fill="#000"/>
<rect x="217" y="357" width="3" height="1" fill="#000"/>
<rect x="218" y="360" width="1" height="1" fill="#000"/>
<rect x="241" y="349" width="4" height="14" fill="#f0f"/>
<rect x="241" y="350" width="4" height="1" fill="#000"/>
<rect x="241" y="358" width="4" height="1" fill="#000"/>
<rect x="241" y="360" width="4" height="1" fill="#000"/>
<rect x="278" y="350" width="5" height="15" fill="#f0f"/>
<rect x="278" y="352" width="5" height="1" fill="#000"/>
<rect x="278" y="355" width="5" height="1" fill="#000"/>
<rect x="280" y="358" width="1" height="1" fill="#000"/>
<rect x="278" y="361" width="1" height="1" fill="#000"/>
<rect x="280" y="361" width="1" height="1" fill="#000"/>
<rect x="298" y="348" width="5" height="19" fill="#f0f"/>
<rect x="301" y="350" width="1" height="1" fill="#000"/>
<rect x="298" y="352" width="1" height="1" fill="#000"/>
<rect x="299" y="352" width="1" height="1" fill="#000"/>
<rect x="302" y="352" width="1" height="1" fill="#000"/>
<rect x="298" y="355" width="1" height="1" fill="#000"/>
<rect x="298" y="357" width="5" height="1" fill="#000"/>
<rect x="299" y="359" width="1" height="1" fill="#000"/>
<rect x="301" y="361" width="1" height="1" fill="#000"/>
<rect x="302" y="364" width="1" height="1" fill="#000"/>
<rect x="337" y="349" width="5" height="17" fill="#f0f"/>
<rect x="337" y="351" width="5" height="1" fill="#000"/>
<rect x="337" y="353" width="1" height="1" fill="#000"/>
<rect x="341" y="353" width="1" height="1" fill="#000"/>
<rect x="341" y="355" width="1" height="1" fill="#000"/>
<rect x="338" y="361" width="1" height="1" fill="#000"/>
<rect x="339" y="361" width="1" height="1" fill="#000"/>
<rect x="340" y="361" width="1" height="1" fill="#000"/>
<rect x="360" y="348" width="5" height="18" fill="#f0f"/>
<rect x="362" y="350" width="1" height="1" fill="#000"/>
<rect x="364" y="350" width="1" height="1" fill="#000"/>
<rect x="363" y="355" width="1" height="1" fill="#000"/>
<rect x="361" y="358" width="1" height="1" fill="#000"/>
<rect x="364" y="358" width="1" height="1" fill="#000"/>
<rect x="361" y="360" width="1" height="1" fill="#000"/>
<rect x="361" y="364" width="1" height="1" fill="#000"/>
<rect x="362" y="364" width="1" height="1" fill="#000"/>
<rect x="391" y="348" width="5" height="19" fill="#f0f"/>
<rect x="393" y="349" width="1" height="1" fill="#000"/>
<rect x="394" y="355" width="1" height="1" fill="#000"/>
<rect x="394" y="357" width="1" height="1" fill="#000"/>
<rect x="391" y="363" width="5" height="1" fill="#000"/>
<rect x="391" y="365" width="1" height="1" fill="#000"/>
<rect x="408" y="352" width="4" height="10" fill="#f0f"/>
<rect x="408" y="353" width="4" height="1" fill="#000"/>
<rect x="408" y="356" width="4" height="1" fill="#000"/>
<rect x="408" y="358" width="1" height="1" fill="#000"/>
<rect x="409" y="360" width="1" height="1" fill="#000"/>
<rect x="418" y="351" width="4" height="13" fill="#f0f"/>
<rect x="418" y="352" width="4" height="1" fill="#000"/>
<rect x="420" y="354" width="1" height="1" fill="#000"/>
<rect x="421" y="354" width="1" height="1" fill="#000"/>
<rect x="420" y="356" width="1" height="1" fill="#000"/>
<rect x="419" y="358" width="1" height="1" fill="#000"/>
<rect x="420" y="358" width="1" height="1" fill="#000"/>
<rect x="418" y="361" width="4" height="1" fill="#000"/>
<rect x="464" y="351" width="3" height="11" fill="#f0f"/>
<rect x="464" y="353" width="1" height="1" fill="#000"/>
<rect x="464" y="355" width="1" height="1" fill="#000"/>
<rect x="465" y="357" width="1" height="1" fill="#000"/>
<rect x="464" y="359" width="3" height="1" fill="#000"/>
<rect x="470" y="351" width="3" height="11" fill="#f0f"/>
<rect x="470" y="352" width="1" height="1" fill="#000"/>
<rect x="470" y="355" width="3" height="1" fill="#000"/>
<rect x="470" y="358" width="3" height="1" fill="#000"/>
<rect x="472" y="360" width="1" height="1" fill="#000"/>
<rect x="214" y="338" width="1" height="40" fill="#0f0"/>
<rect x="213" y="338" width="3" height="1" fill="#0f0"/>
<rect x="213" y="377" width="3" height="1" fill="#0f0"/>
<rect x="221" y="336" width="1" height="41" fill="#0f0"/>
<rect x="220" y="336" width="3" height="1" fill="#0f0"/>
<rect x="220" y="376" width="3" height="1" fill="#0f0"/>
<rect x="245" y="345" width="1" height="25" fill="#0f0"/>
<rect x="244" y="345" width="3" height="1" fill="#0f0"/>
<rect x="244" y="369" width="3" height="1" fill="#0f0"/>
<rect x="282" y="343" width="1" height="27" fill="#0f0"/>
<rect x="281" y="343" width="3" height="1" fill="#0f0"/>
<rect x="281" y="369" width="3" height="1" fill="#0f0"/>
<rect x="301" y="345" width="1" height="23" fill="#0f0"/>
<rect x="300" y="345" width="3" height="1" fill="#0f0"/>
<rect x="300" y="367" width="3" height="1" fill="#0f0"/>
<rect x="340" y="340" width="1" height="32" fill="#0f0"/>
<rect x="339" y="340" width="3" height="1" fill="#0f0"/>
<rect x="339" y="371" width="3" height="1" fill="#0f0"/>
<rect x="364" y="343" width="1" height="28" fill="#0f0"/>
<rect x="363" y="343" width="3" height="1" fill="#0f0"/>
<rect x="363" y="370" width="3" height="1" fill="#0f0"/>
<rect x="396" y="343" width="1" height="29" fill="#0f0"/>
<rect x="395" y="343" width="3" height="1" fill="#0f0"/>
<rect x="395" y="371" width="3" height="1" fill="#0f0"/>
<rect x="413" y="336" width="1" height="42" fill="#0f0"/>
<rect x="412" y="336" width="3" height="1" fill="#0f0"/>
<rect x="412" y="377" width="3" height="1" fill="#0f0"/>
<rect x="422" y="345" width="1" height="25" fill="#0f0"/>
<rect x="421" y="345" width="3" height="1" fill="#0f0"/>
<rect x="421" y="369" width="3" height="1" fill="#0f0"/>
<rect x="467" y="347" width="1" height="18" fill="#0f0"/>
<rect x="466" y="347" width="3" height="1" fill="#0f0"/>
<rect x="466" y="364" width="3" height="1" fill="#0f0"/>
<rect x="473" y="337" width="1" height="41" fill="#0f0"/>
<rect x="472" y="337" width="3" height="1" fill="#0f0"/>
<rect x="472" y="377" width="3" height="1" fill="#0f0"/>
<line x1="121" y1="199.5" x2="127" y2="199.5" stroke="#fff" stroke-width="1"/>
<rect x="123" y="196" width="2" height="3" fill="#fff"/>
<line x1="127" y1="199.5" x2="284" y2="227" stroke="#fff" stroke-width="1"/>
<line x1="121" y1="204.0" x2="127" y2="204.0" stroke="#fff" stroke-width="1"/>
<rect x="123" y="201" width="2" height="3" fill="#fff"/>
<line x1="127" y1="204.0" x2="284" y2="232" stroke="#fff" stroke-width="1"/>
<line x1="121" y1="209.0" x2="127" y2="209.0" stroke="#fff" stroke-width="1"/>
<rect x="123" y="205" width="2" height="3" fill="#fff"/>
<line x1="127" y1="209.0" x2="284" y2="236.5" stroke="#fff" stroke-width="1"/>
<line x1="121" y1="222.5" x2="127" y2="222.5" stroke="#fff" stroke-width="1"/>
<rect x="123" y="219" width="2" height="3" fill="#fff"/>
<line x1="127" y1="222.5" x2="271" y2="242" stroke="#fff" stroke-width="1"/>
<line x1="121" y1="228.5" x2="127" y2="228.5" stroke="#fff" stroke-width="1"/>
<rect x="123" y="225" width="2" height="3" fill="#fff"/>
<line x1="127" y1="228.5" x2="286" y2="246" stroke="#fff" stroke-width="1"/>
<line x1="121" y1="238.5" x2="127" y2="238.5" stroke="#fff" stroke-width="1"/>
<rect x="123" y="235" width="2" height="3" fill="#fff"/>
<line x1="127" y1="238.5" x2="237" y2="245" stroke="#fff" stroke-width="1"/>
<line x1="121" y1="248.5" x2="127" y2="248.5" stroke="#fff" stroke-width="1"/>
<rect x="123" y="245" width="2" height="3" fill="#fff"/>
<line x1="127" y1="248.5" x2="215" y2="252.7" stroke="#fff" stroke-width="1"/>
<line x1="121" y1="253.7" x2="127" y2="253.7" stroke="#fff" stroke-width="1"/>
<rect x="123" y="250" width="2" height="3" fill="#fff"/>
<line x1="127" y1="253.7" x2="215" y2="255" stroke="#fff" stroke-width="1"/>
<line x1="121" y1="260.2" x2="127" y2="260.2" stroke="#fff" stroke-width="1"/>
<rect x="123" y="257" width="2" height="3" fill="#fff"/>
<line x1="127" y1="260.2" x2="215" y2="261.4" stroke="#fff" stroke-width="1"/>
<line x1="121" y1="271.5" x2="127" y2="271.5" stroke="#fff" stroke-width="1"/>
<rect x="123" y="268" width="2" height="3" fill="#fff"/>
<line x1="127" y1="271.5" x2="215" y2="273.3" stroke="#fff" stroke-width="1"/>
<line x1="121" y1="280.5" x2="127" y2="280.5" stroke="#fff" stroke-width="1"/>
<rect x="123" y="277" width="2" height="3" fill="#fff"/>
<line x1="127" y1="280.5" x2="215" y2="289.5" stroke="#fff" stroke-width="1"/>
<line x1="121" y1="289.5" x2="127" y2="289.5" stroke="#fff" stroke-width="1"/>
<rect x="123" y="286" width="2" height="3" fill="#fff"/>
<line x1="127" y1="289.5" x2="215" y2="292" stroke="#fff" stroke-width="1"/>
<line x1="121" y1="298.0" x2="127" y2="298.0" stroke="#fff" stroke-width="1"/>
<rect x="123" y="295" width="2" height="3" fill="#fff"/>
<line x1="127" y1="298.0" x2="299.6" y2="314.4" stroke="#fff" stroke-width="1"/>
<line x1="121" y1="308.5" x2="127" y2="308.5" stroke="#fff" stroke-width="1"/>
<rect x="123" y="305" width="2" height="3" fill="#fff"/>
<line x1="127" y1="308.5" x2="254" y2="317.6" stroke="#fff" stroke-width="1"/>
<line x1="121" y1="314.3" x2="127" y2="314.3" stroke="#fff" stroke-width="1"/>
<rect x="123" y="311" width="2" height="3" fill="#fff"/>
<line x1="127" y1="314.3" x2="299.6" y2="319.8" stroke="#fff" stroke-width="1"/>
<line x1="121" y1="319.7" x2="127" y2="319.7" stroke="#fff" stroke-width="1"/>
<rect x="123" y="316" width="2" height="3" fill="#fff"/>
<line x1="127" y1="319.7" x2="206.5" y2="324" stroke="#fff" stroke-width="1"/>
<line x1="121" y1="335.0" x2="127" y2="335.0" stroke="#fff" stroke-width="1"/>
<rect x="123" y="331" width="2" height="3" fill="#fff"/>
<line x1="127" y1="335.0" x2="206.5" y2="334.5" stroke="#fff" stroke-width="1"/>
<line x1="121" y1="347.5" x2="127" y2="347.5" stroke="#fff" stroke-width="1"/>
<rect x="123" y="344" width="2" height="3" fill="#fff"/>
<line x1="127" y1="347.5" x2="206.5" y2="341.5" stroke="#fff" stroke-width="1"/>
<line x1="121" y1="368.5" x2="127" y2="368.5" stroke="#fff" stroke-width="1"/>
<rect x="123" y="365" width="2" height="3" fill="#fff"/>
<line x1="127" y1="368.5" x2="200" y2="360" stroke="#fff" stroke-width="1"/>
<line x1="121" y1="382.5" x2="127" y2="382.5" stroke="#fff" stroke-width="1"/>
<rect x="123" y="379" width="2" height="3" fill="#fff"/>
<line x1="127" y1="382.5" x2="210" y2="355" stroke="#fff" stroke-width="1"/>
<line x1="121" y1="396.5" x2="127" y2="396.5" stroke="#fff" stroke-width="1"/>
<rect x="123" y="393" width="2" height="3" fill="#fff"/>
<line x1="127" y1="396.5" x2="210" y2="366" stroke="#fff" stroke-width="1"/>
<line x1="121" y1="417.0" x2="127" y2="417.0" stroke="#fff" stroke-width="1"/>
<rect x="123" y="413" width="2" height="3" fill="#fff"/>
<line x1="127" y1="417.0" x2="209.7" y2="379.7" stroke="#fff" stroke-width="1"/>
<line x1="121" y1="423.5" x2="127" y2="423.5" stroke="#fff" stroke-width="1"/>
<rect x="123" y="420" width="2" height="3" fill="#fff"/>
<line x1="127" y1="423.5" x2="210.8" y2="386.2" stroke="#fff" stroke-width="1"/>
<line x1="121" y1="433.2" x2="127" y2="433.2" stroke="#fff" stroke-width="1"/>
<rect x="123" y="430" width="2" height="3" fill="#fff"/>
<line x1="127" y1="433.2" x2="211.8" y2="391.6" stroke="#fff" stroke-width="1"/>
<line x1="121" y1="439.7" x2="127" y2="439.7" stroke="#fff" stroke-width="1"/>
<rect x="123" y="436" width="2" height="3" fill="#fff"/>
<line x1="127" y1="439.7" x2="211.8" y2="398" stroke="#fff" stroke-width="1"/>
<line x1="121" y1="446.1" x2="127" y2="446.1" stroke="#fff" stroke-width="1"/>
<rect x="123" y="443" width="2" height="3" fill="#fff"/>
<line x1="127" y1="446.1" x2="211.8" y2="402.4" stroke="#fff" stroke-width="1"/>
<line x1="121" y1="461.3" x2="127" y2="461.3" stroke="#fff" stroke-width="1"/>
<rect x="123" y="458" width="2" height="3" fill="#fff"/>
<line x1="127" y1="461.3" x2="210.8" y2="415.4" stroke="#fff" stroke-width="1"/>
<line x1="121" y1="474.2" x2="127" y2="474.2" stroke="#fff" stroke-width="1"/>
<rect x="123" y="471" width="2" height="3" fill="#fff"/>
<line x1="127" y1="474.2" x2="206.4" y2="421.9" stroke="#fff" stroke-width="1"/>
<line x1="121" y1="489.4" x2="127" y2="489.4" stroke="#fff" stroke-width="1"/>
<rect x="123" y="486" width="2" height="3" fill="#fff"/>
<line x1="127" y1="489.4" x2="209.7" y2="447.8" stroke="#fff" stroke-width="1"/>
<line x1="121" y1="498.0" x2="127" y2="498.0" stroke="#fff" stroke-width="1"/>
<rect x="123" y="495" width="2" height="3" fill="#fff"/>
<line x1="127" y1="498.0" x2="213" y2="455.4" stroke="#fff" stroke-width="1"/>
<line x1="121" y1="506.7" x2="127" y2="506.7" stroke="#fff" stroke-width="1"/>
<rect x="123" y="503" width="2" height="3" fill="#fff"/>
<line x1="127" y1="506.7" x2="213" y2="459.7" stroke="#fff" stroke-width="1"/>
<line x1="121" y1="525.0" x2="127" y2="525.0" stroke="#fff" stroke-width="1"/>
<rect x="123" y="521" width="2" height="3" fill="#fff"/>
<line x1="127" y1="525.0" x2="219.4" y2="486.7" stroke="#fff" stroke-width="1"/>
<rect x="104" y="251" width="112" height="1" fill="#0f0"/>
<rect x="105" y="251" width="1" height="255" fill="#0f0"/>
<rect x="104" y="505" width="172" height="1" fill="#0f0"/>
<rect x="147" y="350" width="1" height="220" fill="#0f0"/>
<rect x="148" y="569" width="366" height="1" fill="#0f0"/>
<rect x="513" y="364" width="1" height="206" fill="#0f0"/>
<rect x="101" y="374" width="4" height="9" fill="#f0f"/>
<rect x="102" y="376" width="2" height="1" fill="#000"/>
<rect x="102" y="380" width="2" height="1" fill="#000"/>
<path d="M196,257.5 L193.5,257.5 L192.5,259 L192.5,262 L193.5,263.5 L196,263.5" stroke="#f0f" stroke-width="1" fill="none"/>
<line x1="197" y1="260.5" x2="215" y2="260.5" stroke="#fff" stroke-width="1"/>
<rect x="327" y="565" width="6" height="4" fill="#f0f"/>
<rect x="329" y="566" width="1" height="2" fill="#000"/>
<rect x="401" y="514" width="1" height="14" fill="#0f0"/>
<rect x="142" y="356" width="400" height="1" fill="#0ff"/>
<rect x="176" y="426" width="262" height="1" fill="#0ff"/>
<rect x="180" y="276" width="24" height="1" fill="#0ff"/>
<rect x="216" y="276" width="233" height="1" fill="#0ff"/>
<rect x="362" y="468" width="88" height="1" fill="#0ff"/>
<line x1="520" y1="302.5" x2="527" y2="302.5" stroke="#fff" stroke-width="1"/>
<rect x="524" y="299" width="2" height="3" fill="#fff"/>
<line x1="520" y1="302.5" x2="453" y2="314" stroke="#fff" stroke-width="1"/>
<line x1="520" y1="306.5" x2="527" y2="306.5" stroke="#fff" stroke-width="1"/>
<rect x="524" y="303" width="2" height="3" fill="#fff"/>
<line x1="520" y1="306.5" x2="466" y2="326" stroke="#fff" stroke-width="1"/>
<line x1="520" y1="311.5" x2="527" y2="311.5" stroke="#fff" stroke-width="1"/>
<rect x="524" y="308" width="2" height="3" fill="#fff"/>
<line x1="520" y1="311.5" x2="480" y2="331" stroke="#fff" stroke-width="1"/>
<line x1="520" y1="316.5" x2="527" y2="316.5" stroke="#fff" stroke-width="1"/>
<rect x="524" y="313" width="2" height="3" fill="#fff"/>
<line x1="520" y1="316.5" x2="482.5" y2="339" stroke="#fff" stroke-width="1"/>
<line x1="520" y1="326.5" x2="527" y2="326.5" stroke="#fff" stroke-width="1"/>
<rect x="524" y="323" width="2" height="3" fill="#fff"/>
<line x1="520" y1="326.5" x2="498" y2="349" stroke="#fff" stroke-width="1"/>
<line x1="520" y1="367.5" x2="527" y2="367.5" stroke="#fff" stroke-width="1"/>
<rect x="524" y="364" width="2" height="3" fill="#fff"/>
<line x1="520" y1="367.5" x2="500" y2="361" stroke="#fff" stroke-width="1"/>
<line x1="520" y1="386.5" x2="527" y2="386.5" stroke="#fff" stroke-width="1"/>
<rect x="524" y="383" width="2" height="3" fill="#fff"/>
<line x1="520" y1="386.5" x2="516" y2="380" stroke="#fff" stroke-width="1"/>
<line x1="520" y1="397.5" x2="527" y2="397.5" stroke="#fff" stroke-width="1"/>
<rect x="524" y="394" width="2" height="3" fill="#fff"/>
<line x1="520" y1="397.5" x2="483" y2="379" stroke="#fff" stroke-width="1"/>
<line x1="520" y1="408.5" x2="527" y2="408.5" stroke="#fff" stroke-width="1"/>
<rect x="524" y="405" width="2" height="3" fill="#fff"/>
<line x1="520" y1="408.5" x2="473" y2="382" stroke="#fff" stroke-width="1"/>
<line x1="520" y1="417.5" x2="527" y2="417.5" stroke="#fff" stroke-width="1"/>
<rect x="524" y="414" width="2" height="3" fill="#fff"/>
<line x1="520" y1="417.5" x2="436" y2="382" stroke="#fff" stroke-width="1"/>
<line x1="520" y1="429.0" x2="527" y2="429.0" stroke="#fff" stroke-width="1"/>
<rect x="524" y="425" width="2" height="3" fill="#fff"/>
<line x1="520" y1="429.0" x2="428" y2="368" stroke="#fff" stroke-width="1"/>
<line x1="520" y1="441.2" x2="527" y2="441.2" stroke="#fff" stroke-width="1"/>
<rect x="524" y="438" width="2" height="3" fill="#fff"/>
<line x1="520" y1="441.2" x2="427" y2="420" stroke="#fff" stroke-width="1"/>
<line x1="520" y1="447.3" x2="527" y2="447.3" stroke="#fff" stroke-width="1"/>
<rect x="524" y="444" width="2" height="3" fill="#fff"/>
<line x1="520" y1="447.3" x2="427" y2="448.7" stroke="#fff" stroke-width="1"/>
<line x1="520" y1="453.5" x2="527" y2="453.5" stroke="#fff" stroke-width="1"/>
<rect x="524" y="450" width="2" height="3" fill="#fff"/>
<line x1="520" y1="453.5" x2="427" y2="455" stroke="#fff" stroke-width="1"/>
<line x1="520" y1="465.3" x2="527" y2="465.3" stroke="#fff" stroke-width="1"/>
<rect x="524" y="462" width="2" height="3" fill="#fff"/>
<line x1="520" y1="465.3" x2="425" y2="459" stroke="#fff" stroke-width="1"/>
<line x1="520" y1="479.0" x2="527" y2="479.0" stroke="#fff" stroke-width="1"/>
<rect x="524" y="475" width="2" height="3" fill="#fff"/>
<line x1="520" y1="479.0" x2="425" y2="466.5" stroke="#fff" stroke-width="1"/>
<line x1="520" y1="491.9" x2="527" y2="491.9" stroke="#fff" stroke-width="1"/>
<rect x="524" y="488" width="2" height="3" fill="#fff"/>
<line x1="520" y1="491.9" x2="425" y2="480" stroke="#fff" stroke-width="1"/>
<line x1="342" y1="198.5" x2="347" y2="198.5" stroke="#fff" stroke-width="1"/>
<rect x="342" y="196" width="2" height="3" fill="#fff"/>
<line x1="342" y1="198.5" x2="305" y2="272" stroke="#fff" stroke-width="1"/>
<line x1="353" y1="198.5" x2="358" y2="198.5" stroke="#fff" stroke-width="1"/>
<rect x="353" y="196" width="2" height="3" fill="#fff"/>
<line x1="353" y1="198.5" x2="343.5" y2="330" stroke="#fff" stroke-width="1"/>
<line x1="359.7" y1="198.5" x2="364.7" y2="198.5" stroke="#fff" stroke-width="1"/>
<rect x="360" y="196" width="2" height="3" fill="#fff"/>
<line x1="359.7" y1="198.5" x2="347.5" y2="330" stroke="#fff" stroke-width="1"/>
<line x1="369" y1="198.5" x2="374" y2="198.5" stroke="#fff" stroke-width="1"/>
<rect x="369" y="196" width="2" height="3" fill="#fff"/>
<line x1="369" y1="198.5" x2="351.5" y2="273" stroke="#fff" stroke-width="1"/>
<line x1="376.6" y1="198.5" x2="381.6" y2="198.5" stroke="#fff" stroke-width="1"/>
<rect x="377" y="196" width="2" height="3" fill="#fff"/>
<line x1="376.6" y1="198.5" x2="359.4" y2="270" stroke="#fff" stroke-width="1"/>
<line x1="391" y1="198.5" x2="396" y2="198.5" stroke="#fff" stroke-width="1"/>
<rect x="391" y="196" width="2" height="3" fill="#fff"/>
<line x1="391" y1="198.5" x2="370" y2="270" stroke="#fff" stroke-width="1"/>
<line x1="400" y1="198.5" x2="405" y2="198.5" stroke="#fff" stroke-width="1"/>
<rect x="400" y="196" width="2" height="3" fill="#fff"/>
<line x1="400" y1="198.5" x2="386" y2="246" stroke="#fff" stroke-width="1"/>
<line x1="413" y1="198.5" x2="418" y2="198.5" stroke="#fff" stroke-width="1"/>
<rect x="413" y="196" width="2" height="3" fill="#fff"/>
<line x1="413" y1="198.5" x2="404.6" y2="310" stroke="#fff" stroke-width="1"/>
<line x1="424" y1="198.5" x2="429" y2="198.5" stroke="#fff" stroke-width="1"/>
<rect x="424" y="196" width="2" height="3" fill="#fff"/>
<line x1="424" y1="198.5" x2="420.6" y2="265" stroke="#fff" stroke-width="1"/>
<line x1="440" y1="198.5" x2="445" y2="198.5" stroke="#fff" stroke-width="1"/>
<rect x="440" y="196" width="2" height="3" fill="#fff"/>
<line x1="440" y1="198.5" x2="423" y2="262" stroke="#fff" stroke-width="1"/>
<line x1="291.3" y1="526.5" x2="297.3" y2="526.5" stroke="#fff" stroke-width="1"/>
<rect x="294" y="523" width="2" height="3" fill="#fff"/>
<line x1="294.3" y1="526.5" x2="259" y2="428" stroke="#fff" stroke-width="1"/>
<line x1="335.6" y1="526.5" x2="341.6" y2="526.5" stroke="#fff" stroke-width="1"/>
<rect x="339" y="523" width="2" height="3" fill="#fff"/>
<line x1="338.6" y1="526.5" x2="300" y2="505" stroke="#fff" stroke-width="1"/>
<line x1="366" y1="526.5" x2="372" y2="526.5" stroke="#fff" stroke-width="1"/>
<rect x="369" y="523" width="2" height="3" fill="#fff"/>
<line x1="369" y1="526.5" x2="331" y2="428" stroke="#fff" stroke-width="1"/>
<line x1="382.4" y1="526.5" x2="388.4" y2="526.5" stroke="#fff" stroke-width="1"/>
<rect x="385" y="523" width="2" height="3" fill="#fff"/>
<line x1="385.4" y1="526.5" x2="364" y2="490" stroke="#fff" stroke-width="1"/>
<rect x="575" y="221" width="159" height="1" fill="#0f0"/>
<rect x="574" y="220" width="1" height="32" fill="#0f0"/>
<rect x="733" y="220" width="1" height="32" fill="#0f0"/>
<rect x="651" y="217" width="6" height="3" fill="#fff"/>
<rect x="734" y="252" width="41" height="1" fill="#0f0"/>
<rect x="774" y="252" width="1" height="252" fill="#0f0"/>
<rect x="685" y="503" width="90" height="1" fill="#0f0"/>
<rect x="769.5" y="374.5" width="4" height="6" stroke="#f0f" stroke-width="1" fill="none"/>
<rect x="771" y="373" width="1" height="9" fill="#f0f"/>
<rect x="589" y="356" width="1" height="72" fill="#0f0"/>
<rect x="586" y="388" width="4" height="6" fill="#f0f"/>
<path d="M574.5,252.5 L733.5,252.5 L733.5,439.5 A65,65 0 0 1 668.5,504.5 L639.5,504.5 A65,65 0 0 1 574.5,439.5 Z M580.5,257.5 L727.5,257.5 L727.5,439.5 A58,58 0 0 1 669.5,497.5 L638.5,497.5 A58,58 0 0 1 580.5,439.5 Z" fill="url(#hatlb)" fill-rule="evenodd" stroke="#fff" stroke-width="1"/>
<rect x="638" y="253" width="52" height="5" fill="#000"/>
<line x1="638" y1="252.5" x2="690" y2="252.5" stroke="#fff" stroke-width="1"/>
<line x1="638" y1="257.5" x2="690" y2="257.5" stroke="#fff" stroke-width="1"/>
<rect x="576" y="292" width="4" height="3" fill="#fff"/>
<rect x="728" y="292" width="4" height="3" fill="#fff"/>
<rect x="663" y="224" width="1" height="5" fill="#fff"/>
<rect x="663" y="234" width="1" height="246" fill="#fff"/>
<circle cx="642.5" cy="275.5" r="9" fill="url(#hatb)" stroke="#fff" stroke-width="1"/>
<circle cx="663.5" cy="275.5" r="9" fill="url(#hatb)" stroke="#fff" stroke-width="1"/>
<circle cx="685" cy="275.5" r="9" fill="url(#hatb)" stroke="#fff" stroke-width="1"/>
<polyline points="642,260.5 655,260.5 652,268" stroke="#fff" stroke-width="1" fill="none"/>
<polyline points="657,260.5 669,260.5 672,268" stroke="#fff" stroke-width="1" fill="none"/>
<polyline points="672,260.5 685,260.5 683,268" stroke="#fff" stroke-width="1" fill="none"/>
<rect x="628" y="275" width="72" height="1" fill="#0ff"/>
<rect x="642" y="259" width="1" height="30" fill="#0ff"/>
<rect x="685" y="259" width="1" height="30" fill="#0ff"/>
<path d="M639,284 Q641,295 639,306 Q633,310 628,318 M651,283 Q649,296 652,302 Q656,298 657,283 M652,302 Q646,305 640,306 M671,283 Q670,296 674,302 Q678,298 676,283 M674,302 Q680,305 690,306 M689,284 Q687,295 690,306 Q695,310 699,318" stroke="#fff" stroke-width="1" fill="none"/>
<path d="M612.28,348.66 A52,52 0 0 1 714.72,348.66" stroke="#fff" fill="none" stroke-width="1"/>
<path d="M615.235,349.17 A49,49 0 0 1 711.765,349.17" stroke="#fff" fill="none" stroke-width="1"/>
<path d="M627.61,348.62 A37,37 0 0 1 699.39,348.62" stroke="#fff" fill="none" stroke-width="1"/>
<path d="M630.52,349.34 A34,34 0 0 1 696.48,349.34" stroke="#fff" fill="none" stroke-width="1"/>
<line x1="611" y1="348" x2="611" y2="357" stroke="#fff" stroke-width="1"/>
<line x1="716" y1="348" x2="716" y2="357" stroke="#fff" stroke-width="1"/>
<line x1="614" y1="348" x2="614" y2="357" stroke="#fff" stroke-width="1"/>
<line x1="713" y1="348" x2="713" y2="357" stroke="#fff" stroke-width="1"/>
<line x1="627" y1="349" x2="627" y2="357" stroke="#fff" stroke-width="1"/>
<line x1="700" y1="349" x2="700" y2="357" stroke="#fff" stroke-width="1"/>
<rect x="584" y="356" width="172" height="1" fill="#0ff"/>
<path d="M619.5,356.5 A44,44 0 0 0 707.5,356.5 Z" fill="url(#hatb)" stroke="#fff" stroke-width="1"/>
<path d="M622,356.5 A41.5,41.5 0 0 0 705,356.5" fill="none" stroke="#fff" stroke-width="1"/>
<circle cx="663.5" cy="355" r="14" fill="#000" stroke="#fff" stroke-width="1"/>
<circle cx="663.5" cy="355" r="12" fill="url(#hat)" stroke="#fff" stroke-width="1"/>
<line x1="663.5" y1="341" x2="663.5" y2="369" stroke="#fff" stroke-width="1"/>
<circle cx="623.5" cy="413.5" r="27" fill="url(#hat)" stroke="#fff" stroke-width="1"/>
<circle cx="623.5" cy="413.5" r="24.5" stroke="#fff" stroke-width="1" fill="none"/>
<circle cx="623.5" cy="413.5" r="8" fill="#000" stroke="#fff" stroke-width="1"/>
<line x1="610" y1="413.5" x2="637" y2="413.5" stroke="#fff" stroke-width="1"/>
<line x1="623.5" y1="400" x2="623.5" y2="427" stroke="#fff" stroke-width="1"/>
<circle cx="663.5" cy="427.5" r="16" fill="url(#hatb)" stroke="#fff" stroke-width="1"/>
<circle cx="663.5" cy="427.5" r="13.5" stroke="#fff" stroke-width="1" fill="none"/>
<rect x="571" y="427" width="172" height="1" fill="#0ff"/>
<g transform="translate(687.8,452.8) rotate(-48.5)" stroke="#fff" stroke-width="1" fill="none"><rect x="0" y="-2" width="48" height="4" fill="#000"/><line x1="6" y1="0" x2="44" y2="0" stroke-dasharray="2,5"/><rect x="44" y="-4.5" width="34" height="9" fill="#000"/><line x1="44" y1="-1.5" x2="78" y2="-1.5"/><line x1="44" y1="1.5" x2="78" y2="1.5"/><rect x="66" y="-5.5" width="12" height="11" fill="#000"/><rect x="79" y="-6.5" width="12" height="13" fill="#000"/><line x1="83" y1="-6" x2="83" y2="6"/><line x1="87" y1="-6" x2="87" y2="6" stroke-dasharray="1,2"/></g>
<line x1="752.5" y1="378.5" x2="757" y2="374" stroke="#fff" stroke-width="1"/>
<line x1="742.6" y1="407" x2="760" y2="525" stroke="#fff" stroke-width="1"/>
<line x1="760" y1="525.5" x2="770" y2="525.5" stroke="#fff" stroke-width="1"/>
<rect x="762.5" y="521.5" width="5" height="3" stroke="#fff" stroke-width="1" fill="none"/>
<rect x="778.5" y="526.5" width="6" height="6" stroke="#fff" stroke-width="1" fill="none"/>
<rect x="623" y="519" width="1" height="6" fill="#fff"/>
<polyline points="511,133.5 520,133.5 537.5,130.5 568,129.5" stroke="#fff" stroke-width="1" fill="none"/>
<polyline points="511,186.5 520,186.5 537.5,190.5 568,190.5" stroke="#fff" stroke-width="1" fill="none"/>
<line x1="511.5" y1="133" x2="511.5" y2="187" stroke="#fff" stroke-width="1"/>
<path d="M568,129.5 A31,31 0 0 1 568,190.5" fill="none" stroke="#fff" stroke-width="1"/>
<line x1="538.5" y1="130" x2="538.5" y2="191" stroke="#fff" stroke-width="1"/>
<line x1="547.5" y1="130" x2="547.5" y2="191" stroke="#fff" stroke-width="1"/>
<rect x="561" y="129" width="7" height="62" fill="#fff"/>
<rect x="568" y="142" width="15" height="1" fill="#fff"/>
<rect x="568" y="146" width="15" height="1" fill="#fff"/>
<rect x="568" y="156" width="15" height="1" fill="#fff"/>
<rect x="568" y="160" width="15" height="1" fill="#fff"/>
<rect x="568" y="170" width="15" height="1" fill="#fff"/>
<rect x="568" y="174" width="15" height="1" fill="#fff"/>
<rect x="521" y="129" width="1" height="48" fill="#0ff"/>
<rect x="564" y="125" width="1" height="68" fill="#0ff"/>
<line x1="517.5" y1="135" x2="517.5" y2="185" stroke="#fff" stroke-width="1"/>
<rect x="524.5" y="142.5" width="14" height="4" stroke="#fff" stroke-width="1" fill="none"/>
<rect x="524" y="140" width="1" height="1" fill="#fff"/>
<rect x="524" y="148" width="1" height="1" fill="#fff"/>
<rect x="527" y="140" width="1" height="1" fill="#fff"/>
<rect x="527" y="148" width="1" height="1" fill="#fff"/>
<rect x="530" y="140" width="1" height="1" fill="#fff"/>
<rect x="530" y="148" width="1" height="1" fill="#fff"/>
<rect x="533" y="140" width="1" height="1" fill="#fff"/>
<rect x="533" y="148" width="1" height="1" fill="#fff"/>
<rect x="536" y="140" width="1" height="1" fill="#fff"/>
<rect x="536" y="148" width="1" height="1" fill="#fff"/>
<rect x="524.5" y="154.5" width="14" height="4" stroke="#fff" stroke-width="1" fill="none"/>
<rect x="524" y="152" width="1" height="1" fill="#fff"/>
<rect x="524" y="160" width="1" height="1" fill="#fff"/>
<rect x="527" y="152" width="1" height="1" fill="#fff"/>
<rect x="527" y="160" width="1" height="1" fill="#fff"/>
<rect x="530" y="152" width="1" height="1" fill="#fff"/>
<rect x="530" y="160" width="1" height="1" fill="#fff"/>
<rect x="533" y="152" width="1" height="1" fill="#fff"/>
<rect x="533" y="160" width="1" height="1" fill="#fff"/>
<rect x="536" y="152" width="1" height="1" fill="#fff"/>
<rect x="536" y="160" width="1" height="1" fill="#fff"/>
<rect x="524.5" y="166.5" width="14" height="4" stroke="#fff" stroke-width="1" fill="none"/>
<rect x="524" y="164" width="1" height="1" fill="#fff"/>
<rect x="524" y="172" width="1" height="1" fill="#fff"/>
<rect x="527" y="164" width="1" height="1" fill="#fff"/>
<rect x="527" y="172" width="1" height="1" fill="#fff"/>
<rect x="530" y="164" width="1" height="1" fill="#fff"/>
<rect x="530" y="172" width="1" height="1" fill="#fff"/>
<rect x="533" y="164" width="1" height="1" fill="#fff"/>
<rect x="533" y="172" width="1" height="1" fill="#fff"/>
<rect x="536" y="164" width="1" height="1" fill="#fff"/>
<rect x="536" y="172" width="1" height="1" fill="#fff"/>
<rect x="518" y="136" width="1" height="1" fill="#fff"/>
<rect x="521" y="136" width="1" height="1" fill="#fff"/>
<rect x="518" y="139" width="1" height="1" fill="#fff"/>
<rect x="521" y="139" width="1" height="1" fill="#fff"/>
<rect x="518" y="142" width="1" height="1" fill="#fff"/>
<rect x="521" y="142" width="1" height="1" fill="#fff"/>
<rect x="518" y="145" width="1" height="1" fill="#fff"/>
<rect x="521" y="145" width="1" height="1" fill="#fff"/>
<rect x="518" y="148" width="1" height="1" fill="#fff"/>
<rect x="521" y="148" width="1" height="1" fill="#fff"/>
<rect x="518" y="151" width="1" height="1" fill="#fff"/>
<rect x="521" y="151" width="1" height="1" fill="#fff"/>
<rect x="518" y="154" width="1" height="1" fill="#fff"/>
<rect x="521" y="154" width="1" height="1" fill="#fff"/>
<rect x="518" y="157" width="1" height="1" fill="#fff"/>
<rect x="521" y="157" width="1" height="1" fill="#fff"/>
<rect x="518" y="160" width="1" height="1" fill="#fff"/>
<rect x="521" y="160" width="1" height="1" fill="#fff"/>
<rect x="518" y="163" width="1" height="1" fill="#fff"/>
<rect x="521" y="163" width="1" height="1" fill="#fff"/>
<rect x="518" y="166" width="1" height="1" fill="#fff"/>
<rect x="521" y="166" width="1" height="1" fill="#fff"/>
<rect x="518" y="169" width="1" height="1" fill="#fff"/>
<rect x="521" y="169" width="1" height="1" fill="#fff"/>
<rect x="518" y="172" width="1" height="1" fill="#fff"/>
<rect x="521" y="172" width="1" height="1" fill="#fff"/>
<rect x="518" y="175" width="1" height="1" fill="#fff"/>
<rect x="521" y="175" width="1" height="1" fill="#fff"/>
<rect x="518" y="178" width="1" height="1" fill="#fff"/>
<rect x="521" y="178" width="1" height="1" fill="#fff"/>
<rect x="518" y="181" width="1" height="1" fill="#fff"/>
<rect x="521" y="181" width="1" height="1" fill="#fff"/>
<rect x="518" y="184" width="1" height="1" fill="#fff"/>
<rect x="521" y="184" width="1" height="1" fill="#fff"/>
<rect x="516" y="142" width="3" height="3" fill="#fff"/>
<rect x="516" y="156" width="3" height="3" fill="#fff"/>
<rect x="516" y="170" width="3" height="3" fill="#fff"/>
<path d="M551,117.5 L549.5,117.5 L548.5,118.5 L548.5,121 L549.5,122 L551,122" stroke="#fff" stroke-width="1" fill="none"/>
<rect x="552.5" y="117.5" width="4" height="4" stroke="#fff" stroke-width="1" fill="none"/>
<rect x="554" y="118" width="1" height="3" fill="#fff"/>
<rect x="563" y="117" width="5" height="4" fill="#fff"/>
<line x1="563" y1="121.5" x2="572" y2="121.5" stroke="#fff" stroke-width="1"/>
<line x1="566" y1="121" x2="524" y2="141" stroke="#fff" stroke-width="1"/>
<path d="M612,148.5 L645,148.5 Q642,170 628.5,170 Q615,170 612,148.5 Z" fill="none" stroke="#fff" stroke-width="1"/>
<rect x="625.5" y="148.5" width="9" height="20" stroke="#fff" stroke-width="1" fill="none"/>
<line x1="630" y1="149" x2="630" y2="168" stroke="#fff" stroke-width="1"/>
<line x1="614" y1="161.5" x2="643" y2="161.5" stroke="#fff" stroke-width="1"/>
<line x1="615" y1="163.5" x2="642" y2="163.5" stroke="#fff" stroke-width="1"/>
<rect x="627" y="150" width="1" height="1" fill="#fff"/>
<rect x="632" y="150" width="1" height="1" fill="#fff"/>
<rect x="627" y="153" width="1" height="1" fill="#fff"/>
<rect x="632" y="153" width="1" height="1" fill="#fff"/>
<rect x="627" y="156" width="1" height="1" fill="#fff"/>
<rect x="632" y="156" width="1" height="1" fill="#fff"/>
<rect x="627" y="159" width="1" height="1" fill="#fff"/>
<rect x="632" y="159" width="1" height="1" fill="#fff"/>
<rect x="627" y="162" width="1" height="1" fill="#fff"/>
<rect x="632" y="162" width="1" height="1" fill="#fff"/>
<rect x="627" y="165" width="1" height="1" fill="#fff"/>
<rect x="632" y="165" width="1" height="1" fill="#fff"/>
<path d="M617.5,139.5 L620,139.5 L621.5,141 L621.5,144 L620,145.5 L617.5,145.5 Z" stroke="#fff" stroke-width="1" fill="none"/>
<rect x="622.5" y="139.5" width="4" height="6" stroke="#fff" stroke-width="1" fill="none"/>
<rect x="624" y="141" width="1" height="3" fill="#fff"/>
<rect x="636.5" y="115.5" width="5" height="4" stroke="#fff" stroke-width="1" fill="none"/>
<line x1="636" y1="120.5" x2="645" y2="120.5" stroke="#fff" stroke-width="1"/>
<line x1="639" y1="120" x2="629.5" y2="146.5" stroke="#fff" stroke-width="1"/>
<rect x="656.5" y="116.5" width="5" height="4" stroke="#fff" stroke-width="1" fill="none"/>
<line x1="659" y1="121" x2="634" y2="146.5" stroke="#fff" stroke-width="1"/>
<rect x="613" y="588" width="13" height="5" fill="#f0f"/>
<rect x="614" y="588" width="1" height="5" fill="#000"/>
<rect x="617" y="589" width="1" height="1" fill="#000"/>
<rect x="617" y="592" width="1" height="1" fill="#000"/>
<rect x="621" y="589" width="1" height="1" fill="#000"/>
<rect x="624" y="588" width="1" height="1" fill="#000"/>
<rect x="585" y="596" width="70" height="4" fill="#f0f"/>
<rect x="586" y="597" width="1" height="1" fill="#000"/>
<rect x="586" y="598" width="1" height="1" fill="#000"/>
<rect x="589" y="598" width="1" height="1" fill="#000"/>
<rect x="593" y="596" width="1" height="1" fill="#000"/>
<rect x="597" y="598" width="1" height="1" fill="#000"/>
<rect x="601" y="596" width="1" height="1" fill="#000"/>
<rect x="604" y="598" width="1" height="1" fill="#000"/>
<rect x="608" y="597" width="1" height="1" fill="#000"/>
<rect x="608" y="598" width="1" height="1" fill="#000"/>
<rect x="610" y="598" width="1" height="1" fill="#000"/>
<rect x="615" y="599" width="1" height="1" fill="#000"/>
<rect x="618" y="596" width="1" height="4" fill="#000"/>
<rect x="622" y="596" width="1" height="1" fill="#000"/>
<rect x="622" y="597" width="1" height="1" fill="#000"/>
<rect x="622" y="599" width="1" height="1" fill="#000"/>
<rect x="626" y="596" width="1" height="1" fill="#000"/>
<rect x="626" y="597" width="1" height="1" fill="#000"/>
<rect x="626" y="599" width="1" height="1" fill="#000"/>
<rect x="629" y="596" width="1" height="4" fill="#000"/>
<rect x="631" y="596" width="1" height="1" fill="#000"/>
<rect x="631" y="599" width="1" height="1" fill="#000"/>
<rect x="633" y="597" width="1" height="1" fill="#000"/>
<rect x="635" y="596" width="1" height="4" fill="#000"/>
<rect x="638" y="597" width="1" height="1" fill="#000"/>
<rect x="642" y="596" width="1" height="4" fill="#000"/>
<rect x="645" y="596" width="1" height="4" fill="#000"/>
<rect x="647" y="596" width="1" height="4" fill="#000"/>
<rect x="649" y="596" width="1" height="4" fill="#000"/>
<rect x="653" y="596" width="1" height="1" fill="#000"/>
<rect x="653" y="598" width="1" height="1" fill="#000"/>
<rect x="653" y="599" width="1" height="1" fill="#000"/>
<rect x="585" y="601" width="79" height="4" fill="#f0f"/>
<rect x="588" y="601" width="1" height="1" fill="#000"/>
<rect x="588" y="602" width="1" height="1" fill="#000"/>
<rect x="588" y="604" width="1" height="1" fill="#000"/>
<rect x="591" y="601" width="1" height="1" fill="#000"/>
<rect x="593" y="601" width="1" height="4" fill="#000"/>
<rect x="597" y="603" width="1" height="1" fill="#000"/>
<rect x="599" y="601" width="1" height="1" fill="#000"/>
<rect x="603" y="603" width="1" height="1" fill="#000"/>
<rect x="607" y="603" width="1" height="1" fill="#000"/>
<rect x="610" y="601" width="1" height="1" fill="#000"/>
<rect x="610" y="604" width="1" height="1" fill="#000"/>
<rect x="613" y="603" width="1" height="1" fill="#000"/>
<rect x="616" y="601" width="1" height="1" fill="#000"/>
<rect x="616" y="604" width="1" height="1" fill="#000"/>
<rect x="620" y="601" width="1" height="1" fill="#000"/>
<rect x="620" y="603" width="1" height="1" fill="#000"/>
<rect x="625" y="602" width="1" height="1" fill="#000"/>
<rect x="628" y="603" width="1" height="1" fill="#000"/>
<rect x="633" y="601" width="1" height="4" fill="#000"/>
<rect x="636" y="601" width="1" height="1" fill="#000"/>
<rect x="636" y="604" width="1" height="1" fill="#000"/>
<rect x="640" y="602" width="1" height="1" fill="#000"/>
<rect x="647" y="603" width="1" height="1" fill="#000"/>
<rect x="649" y="601" width="1" height="1" fill="#000"/>
<rect x="651" y="603" width="1" height="1" fill="#000"/>
<rect x="654" y="601" width="1" height="1" fill="#000"/>
<rect x="654" y="604" width="1" height="1" fill="#000"/>
<rect x="657" y="602" width="1" height="1" fill="#000"/>
<rect x="657" y="603" width="1" height="1" fill="#000"/>
<rect x="661" y="601" width="1" height="4" fill="#000"/>
<rect x="585" y="606" width="74" height="4" fill="#f0f"/>
<rect x="588" y="606" width="1" height="1" fill="#000"/>
<rect x="588" y="607" width="1" height="1" fill="#000"/>
<rect x="588" y="609" width="1" height="1" fill="#000"/>
<rect x="590" y="606" width="1" height="1" fill="#000"/>
<rect x="590" y="608" width="1" height="1" fill="#000"/>
<rect x="590" y="609" width="1" height="1" fill="#000"/>
<rect x="592" y="606" width="1" height="4" fill="#000"/>
<rect x="596" y="607" width="1" height="1" fill="#000"/>
<rect x="599" y="606" width="1" height="4" fill="#000"/>
<rect x="602" y="609" width="1" height="1" fill="#000"/>
<rect x="605" y="607" width="1" height="1" fill="#000"/>
<rect x="605" y="608" width="1" height="1" fill="#000"/>
<rect x="607" y="607" width="1" height="1" fill="#000"/>
<rect x="607" y="608" width="1" height="1" fill="#000"/>
<rect x="610" y="607" width="1" height="1" fill="#000"/>
<rect x="613" y="606" width="1" height="4" fill="#000"/>
<rect x="615" y="608" width="1" height="1" fill="#000"/>
<rect x="618" y="607" width="1" height="1" fill="#000"/>
<rect x="618" y="608" width="1" height="1" fill="#000"/>
<rect x="618" y="609" width="1" height="1" fill="#000"/>
<rect x="628" y="606" width="1" height="4" fill="#000"/>
<rect x="630" y="606" width="1" height="1" fill="#000"/>
<rect x="630" y="608" width="1" height="1" fill="#000"/>
<rect x="632" y="606" width="1" height="1" fill="#000"/>
<rect x="632" y="607" width="1" height="1" fill="#000"/>
<rect x="638" y="606" width="1" height="1" fill="#000"/>
<rect x="638" y="608" width="1" height="1" fill="#000"/>
<rect x="638" y="609" width="1" height="1" fill="#000"/>
<rect x="644" y="606" width="1" height="4" fill="#000"/>
<rect x="646" y="607" width="1" height="1" fill="#000"/>
<rect x="646" y="608" width="1" height="1" fill="#000"/>
<rect x="646" y="609" width="1" height="1" fill="#000"/>
<rect x="650" y="607" width="1" height="1" fill="#000"/>
<rect x="654" y="606" width="1" height="4" fill="#000"/>
<rect x="588" y="612" width="23" height="4" fill="#f0f"/>
<rect x="591" y="612" width="1" height="1" fill="#000"/>
<rect x="591" y="614" width="1" height="1" fill="#000"/>
<rect x="591" y="615" width="1" height="1" fill="#000"/>
<rect x="594" y="612" width="1" height="1" fill="#000"/>
<rect x="594" y="613" width="1" height="1" fill="#000"/>
<rect x="594" y="614" width="1" height="1" fill="#000"/>
<rect x="598" y="612" width="1" height="1" fill="#000"/>
<rect x="601" y="612" width="1" height="1" fill="#000"/>
<rect x="601" y="613" width="1" height="1" fill="#000"/>
<rect x="601" y="614" width="1" height="1" fill="#000"/>
<rect x="603" y="612" width="1" height="4" fill="#000"/>
<rect x="607" y="612" width="1" height="1" fill="#000"/>
<rect x="585" y="618" width="54" height="4" fill="#f0f"/>
<rect x="586" y="618" width="1" height="4" fill="#000"/>
<rect x="588" y="618" width="1" height="4" fill="#000"/>
<rect x="590" y="619" width="1" height="1" fill="#000"/>
<rect x="590" y="620" width="1" height="1" fill="#000"/>
<rect x="593" y="619" width="1" height="1" fill="#000"/>
<rect x="595" y="621" width="1" height="1" fill="#000"/>
<rect x="597" y="620" width="1" height="1" fill="#000"/>
<rect x="597" y="621" width="1" height="1" fill="#000"/>
<rect x="600" y="618" width="1" height="4" fill="#000"/>
<rect x="603" y="618" width="1" height="1" fill="#000"/>
<rect x="603" y="619" width="1" height="1" fill="#000"/>
<rect x="603" y="620" width="1" height="1" fill="#000"/>
<rect x="611" y="618" width="1" height="1" fill="#000"/>
<rect x="611" y="620" width="1" height="1" fill="#000"/>
<rect x="614" y="618" width="1" height="4" fill="#000"/>
<rect x="618" y="620" width="1" height="1" fill="#000"/>
<rect x="621" y="619" width="1" height="1" fill="#000"/>
<rect x="625" y="618" width="1" height="1" fill="#000"/>
<rect x="625" y="619" width="1" height="1" fill="#000"/>
<rect x="628" y="619" width="1" height="1" fill="#000"/>
<rect x="628" y="620" width="1" height="1" fill="#000"/>
<rect x="631" y="618" width="1" height="4" fill="#000"/>
<rect x="633" y="618" width="1" height="4" fill="#000"/>
<rect x="637" y="618" width="1" height="4" fill="#000"/>
<rect x="585" y="624" width="57" height="4" fill="#f0f"/>
<rect x="588" y="624" width="1" height="4" fill="#000"/>
<rect x="592" y="624" width="1" height="1" fill="#000"/>
<rect x="592" y="625" width="1" height="1" fill="#000"/>
<rect x="595" y="627" width="1" height="1" fill="#000"/>
<rect x="598" y="625" width="1" height="1" fill="#000"/>
<rect x="598" y="626" width="1" height="1" fill="#000"/>
<rect x="602" y="624" width="1" height="4" fill="#000"/>
<rect x="606" y="624" width="1" height="1" fill="#000"/>
<rect x="606" y="626" width="1" height="1" fill="#000"/>
<rect x="606" y="627" width="1" height="1" fill="#000"/>
<rect x="610" y="624" width="1" height="1" fill="#000"/>
<rect x="612" y="625" width="1" height="1" fill="#000"/>
<rect x="612" y="626" width="1" height="1" fill="#000"/>
<rect x="614" y="624" width="1" height="1" fill="#000"/>
<rect x="614" y="627" width="1" height="1" fill="#000"/>
<rect x="617" y="624" width="1" height="4" fill="#000"/>
<rect x="619" y="624" width="1" height="4" fill="#000"/>
<rect x="621" y="624" width="1" height="1" fill="#000"/>
<rect x="621" y="625" width="1" height="1" fill="#000"/>
<rect x="629" y="624" width="1" height="1" fill="#000"/>
<rect x="629" y="625" width="1" height="1" fill="#000"/>
<rect x="629" y="627" width="1" height="1" fill="#000"/>
<rect x="632" y="625" width="1" height="1" fill="#000"/>
<rect x="632" y="626" width="1" height="1" fill="#000"/>
<rect x="636" y="624" width="1" height="4" fill="#000"/>
<rect x="639" y="624" width="1" height="1" fill="#000"/>
<rect x="639" y="626" width="1" height="1" fill="#000"/>
<rect x="585" y="631" width="52" height="4" fill="#f0f"/>
<rect x="587" y="632" width="1" height="1" fill="#000"/>
<rect x="590" y="631" width="1" height="1" fill="#000"/>
<rect x="590" y="633" width="1" height="1" fill="#000"/>
<rect x="590" y="634" width="1" height="1" fill="#000"/>
<rect x="593" y="631" width="1" height="1" fill="#000"/>
<rect x="593" y="634" width="1" height="1" fill="#000"/>
<rect x="596" y="631" width="1" height="4" fill="#000"/>
<rect x="599" y="631" width="1" height="1" fill="#000"/>
<rect x="599" y="632" width="1" height="1" fill="#000"/>
<rect x="603" y="632" width="1" height="1" fill="#000"/>
<rect x="603" y="634" width="1" height="1" fill="#000"/>
<rect x="606" y="631" width="1" height="4" fill="#000"/>
<rect x="610" y="634" width="1" height="1" fill="#000"/>
<rect x="613" y="633" width="1" height="1" fill="#000"/>
<rect x="613" y="634" width="1" height="1" fill="#000"/>
<rect x="618" y="631" width="1" height="1" fill="#000"/>
<rect x="618" y="632" width="1" height="1" fill="#000"/>
<rect x="621" y="633" width="1" height="1" fill="#000"/>
<rect x="623" y="631" width="1" height="1" fill="#000"/>
<rect x="623" y="634" width="1" height="1" fill="#000"/>
<rect x="626" y="633" width="1" height="1" fill="#000"/>
<rect x="626" y="634" width="1" height="1" fill="#000"/>
<rect x="629" y="631" width="1" height="4" fill="#000"/>
<rect x="631" y="631" width="1" height="1" fill="#000"/>
<rect x="631" y="632" width="1" height="1" fill="#000"/>
<rect x="631" y="633" width="1" height="1" fill="#000"/>
<rect x="631" y="634" width="1" height="1" fill="#000"/>
<rect x="635" y="631" width="1" height="4" fill="#000"/>
<rect x="585" y="638" width="84" height="4" fill="#f0f"/>
<rect x="588" y="639" width="1" height="1" fill="#000"/>
<rect x="588" y="640" width="1" height="1" fill="#000"/>
<rect x="590" y="638" width="1" height="4" fill="#000"/>
<rect x="594" y="639" width="1" height="1" fill="#000"/>
<rect x="598" y="638" width="1" height="4" fill="#000"/>
<rect x="601" y="638" width="1" height="4" fill="#000"/>
<rect x="603" y="640" width="1" height="1" fill="#000"/>
<rect x="603" y="641" width="1" height="1" fill="#000"/>
<rect x="606" y="638" width="1" height="1" fill="#000"/>
<rect x="606" y="640" width="1" height="1" fill="#000"/>
<rect x="609" y="640" width="1" height="1" fill="#000"/>
<rect x="613" y="639" width="1" height="1" fill="#000"/>
<rect x="613" y="641" width="1" height="1" fill="#000"/>
<rect x="617" y="638" width="1" height="4" fill="#000"/>
<rect x="621" y="641" width="1" height="1" fill="#000"/>
<rect x="624" y="641" width="1" height="1" fill="#000"/>
<rect x="626" y="638" width="1" height="1" fill="#000"/>
<rect x="626" y="640" width="1" height="1" fill="#000"/>
<rect x="626" y="641" width="1" height="1" fill="#000"/>
<rect x="629" y="638" width="1" height="1" fill="#000"/>
<rect x="631" y="638" width="1" height="4" fill="#000"/>
<rect x="635" y="640" width="1" height="1" fill="#000"/>
<rect x="638" y="640" width="1" height="1" fill="#000"/>
<rect x="642" y="639" width="1" height="1" fill="#000"/>
<rect x="645" y="638" width="1" height="4" fill="#000"/>
<rect x="649" y="638" width="1" height="1" fill="#000"/>
<rect x="652" y="638" width="1" height="4" fill="#000"/>
<rect x="656" y="638" width="1" height="4" fill="#000"/>
<rect x="660" y="639" width="1" height="1" fill="#000"/>
<rect x="663" y="638" width="1" height="1" fill="#000"/>
<rect x="663" y="641" width="1" height="1" fill="#000"/>
<rect x="666" y="640" width="1" height="1" fill="#000"/>
<rect x="666" y="641" width="1" height="1" fill="#000"/>
<rect x="588" y="643" width="30" height="4" fill="#f0f"/>
<rect x="589" y="643" width="1" height="1" fill="#000"/>
<rect x="589" y="645" width="1" height="1" fill="#000"/>
<rect x="591" y="644" width="1" height="1" fill="#000"/>
<rect x="595" y="643" width="1" height="1" fill="#000"/>
<rect x="595" y="644" width="1" height="1" fill="#000"/>
<rect x="604" y="643" width="1" height="1" fill="#000"/>
<rect x="604" y="645" width="1" height="1" fill="#000"/>
<rect x="608" y="643" width="1" height="1" fill="#000"/>
<rect x="608" y="645" width="1" height="1" fill="#000"/>
<rect x="612" y="643" width="1" height="4" fill="#000"/>
<rect x="585" y="650" width="26" height="4" fill="#f0f"/>
<rect x="586" y="652" width="1" height="1" fill="#000"/>
<rect x="588" y="650" width="1" height="4" fill="#000"/>
<rect x="592" y="650" width="1" height="4" fill="#000"/>
<rect x="594" y="651" width="1" height="1" fill="#000"/>
<rect x="594" y="653" width="1" height="1" fill="#000"/>
<rect x="596" y="652" width="1" height="1" fill="#000"/>
<rect x="598" y="650" width="1" height="1" fill="#000"/>
<rect x="598" y="651" width="1" height="1" fill="#000"/>
<rect x="605" y="651" width="1" height="1" fill="#000"/>
<rect x="605" y="652" width="1" height="1" fill="#000"/>
<rect x="609" y="652" width="1" height="1" fill="#000"/>
<rect x="609" y="653" width="1" height="1" fill="#000"/>
<rect x="13" y="628" width="20" height="1" fill="#f0f"/>
<rect x="13" y="632" width="20" height="1" fill="#f0f"/>
<rect x="13" y="629" width="1" height="3" fill="#f0f"/>
<rect x="17" y="629" width="1" height="3" fill="#f0f"/>
<rect x="21" y="629" width="1" height="3" fill="#f0f"/>
<rect x="25" y="629" width="1" height="3" fill="#f0f"/>
<rect x="29" y="629" width="1" height="3" fill="#f0f"/>
<rect x="32" y="629" width="1" height="3" fill="#f0f"/>
<rect x="13" y="640" width="20" height="1" fill="#f0f"/>
<rect x="13" y="644" width="20" height="1" fill="#f0f"/>
<rect x="13" y="641" width="1" height="3" fill="#f0f"/>
<rect x="15" y="641" width="1" height="3" fill="#f0f"/>
<rect x="16" y="641" width="1" height="3" fill="#f0f"/>
<rect x="17" y="641" width="1" height="3" fill="#f0f"/>
<rect x="18" y="641" width="1" height="3" fill="#f0f"/>
<rect x="19" y="641" width="1" height="3" fill="#f0f"/>
<rect x="20" y="641" width="1" height="3" fill="#f0f"/>
<rect x="21" y="641" width="1" height="3" fill="#f0f"/>
<rect x="22" y="641" width="1" height="3" fill="#f0f"/>
<rect x="23" y="641" width="1" height="3" fill="#f0f"/>
<rect x="24" y="641" width="1" height="3" fill="#f0f"/>
<rect x="25" y="641" width="1" height="3" fill="#f0f"/>
<rect x="26" y="641" width="1" height="3" fill="#f0f"/>
<rect x="27" y="641" width="1" height="3" fill="#f0f"/>
<rect x="31" y="641" width="1" height="3" fill="#f0f"/>
<rect x="13" y="651" width="20" height="1" fill="#f0f"/>
<rect x="13" y="655" width="20" height="1" fill="#f0f"/>
<rect x="13" y="652" width="1" height="3" fill="#f0f"/>
<rect x="19" y="652" width="1" height="3" fill="#f0f"/>
<rect x="20" y="652" width="1" height="3" fill="#f0f"/>
<rect x="25" y="652" width="1" height="3" fill="#f0f"/>
<rect x="26" y="652" width="1" height="3" fill="#f0f"/>
<rect x="32" y="652" width="1" height="3" fill="#f0f"/>
<rect x="13" y="662" width="20" height="1" fill="#f0f"/>
<rect x="13" y="666" width="20" height="1" fill="#f0f"/>
<rect x="13" y="663" width="1" height="3" fill="#f0f"/>
<rect x="19" y="663" width="1" height="3" fill="#f0f"/>
<rect x="20" y="663" width="1" height="3" fill="#f0f"/>
<rect x="25" y="663" width="1" height="3" fill="#f0f"/>
<rect x="26" y="663" width="1" height="3" fill="#f0f"/>
<rect x="32" y="663" width="1" height="3" fill="#f0f"/>
<rect x="13" y="671" width="20" height="1" fill="#f0f"/>
<rect x="13" y="675" width="20" height="1" fill="#f0f"/>
<rect x="13" y="672" width="1" height="3" fill="#f0f"/>
<rect x="15" y="672" width="1" height="3" fill="#f0f"/>
<rect x="17" y="672" width="1" height="3" fill="#f0f"/>
<rect x="19" y="672" width="1" height="3" fill="#f0f"/>
<rect x="22" y="672" width="1" height="3" fill="#f0f"/>
<rect x="24" y="672" width="1" height="3" fill="#f0f"/>
<rect x="26" y="672" width="1" height="3" fill="#f0f"/>
<rect x="29" y="672" width="1" height="3" fill="#f0f"/>
<rect x="31" y="672" width="1" height="3" fill="#f0f"/>
<rect x="13" y="682" width="20" height="1" fill="#f0f"/>
<rect x="13" y="686" width="20" height="1" fill="#f0f"/>
<rect x="13" y="683" width="1" height="3" fill="#f0f"/>
<rect x="16" y="683" width="1" height="3" fill="#f0f"/>
<rect x="20" y="683" width="1" height="3" fill="#f0f"/>
<rect x="24" y="683" width="1" height="3" fill="#f0f"/>
<rect x="28" y="683" width="1" height="3" fill="#f0f"/>
<rect x="32" y="683" width="1" height="3" fill="#f0f"/>
<rect x="13" y="693" width="20" height="1" fill="#f0f"/>
<rect x="13" y="697" width="20" height="1" fill="#f0f"/>
<rect x="13" y="694" width="1" height="3" fill="#f0f"/>
<rect x="19" y="694" width="1" height="3" fill="#f0f"/>
<rect x="20" y="694" width="1" height="3" fill="#f0f"/>
<rect x="25" y="694" width="1" height="3" fill="#f0f"/>
<rect x="28" y="694" width="1" height="3" fill="#f0f"/>
<rect x="32" y="694" width="1" height="3" fill="#f0f"/>
<rect x="13" y="704" width="20" height="1" fill="#f0f"/>
<rect x="13" y="708" width="20" height="1" fill="#f0f"/>
<rect x="13" y="705" width="1" height="3" fill="#f0f"/>
<rect x="19" y="705" width="1" height="3" fill="#f0f"/>
<rect x="20" y="705" width="1" height="3" fill="#f0f"/>
<rect x="25" y="705" width="1" height="3" fill="#f0f"/>
<rect x="26" y="705" width="1" height="3" fill="#f0f"/>
<rect x="32" y="705" width="1" height="3" fill="#f0f"/>
<rect x="15" y="641" width="12" height="3" fill="#f0f"/>
<rect x="13" y="714" width="20" height="2" fill="#f0f"/>
<rect x="82" y="32" width="1" height="10" fill="#f0f"/>
<rect x="33" y="41" width="50" height="1" fill="#f0f"/>
<rect x="36" y="35" width="31" height="4" fill="#f0f"/>
<rect x="38" y="36" width="1" height="1" fill="#000"/>
<rect x="42" y="35" width="1" height="1" fill="#000"/>
<rect x="45" y="37" width="1" height="1" fill="#000"/>
<rect x="47" y="35" width="1" height="1" fill="#000"/>
<rect x="49" y="36" width="1" height="1" fill="#000"/>
<rect x="53" y="37" width="1" height="1" fill="#000"/>
<rect x="56" y="35" width="1" height="1" fill="#000"/>
<rect x="60" y="37" width="1" height="1" fill="#000"/>
<rect x="60" y="38" width="1" height="1" fill="#000"/>
<rect x="62" y="38" width="1" height="1" fill="#000"/>
<rect x="0" y="0" width="441" height="15" fill="#f0f0f0"/>
<rect x="0" y="14" width="441" height="1" fill="#dcdcdc"/>
<rect x="440" y="0" width="1" height="15" fill="#a8a8a8"/>
<rect x="442" y="0" width="1" height="15" fill="#ffffff"/><rect x="443" y="0" width="1" height="15" fill="#b0b0b0"/>
<rect x="447" y="0" width="1" height="15" fill="#ffffff"/><rect x="448" y="0" width="1" height="15" fill="#b0b0b0"/>
<rect x="450" y="0" width="1" height="15" fill="#c8c8c8"/>
<rect x="90" y="0" width="1" height="14" fill="#404040"/><rect x="91" y="0" width="1" height="14" fill="#ffffff"/>
<rect x="168" y="0" width="1" height="14" fill="#404040"/><rect x="169" y="0" width="1" height="14" fill="#ffffff"/>
<rect x="266" y="0" width="1" height="14" fill="#404040"/><rect x="267" y="0" width="1" height="14" fill="#ffffff"/>
<rect x="410" y="0" width="1" height="14" fill="#404040"/><rect x="411" y="0" width="1" height="14" fill="#ffffff"/>
<g shape-rendering="geometricPrecision">
<path d="M1.5,-3 L11.5,-3 L14.5,0 L14.5,11.5 L1.5,11.5 Z" fill="#c8dbe6" stroke="#3b6db5" stroke-width="1"/>
<path d="M11.5,0 L14.5,0 L11.5,-3 Z" fill="#fff" stroke="#3b6db5" stroke-width="0.8"/>
<rect x="0" y="7" width="1.5" height="2" fill="#3b6db5"/>
<path d="M21.5,4 L29,-2 L37,5 L30,13 Z" fill="#e8cc60" stroke="#a88a20" stroke-width="1"/>
<path d="M24.5,-2 L31.5,-2 L33.5,0 L33.5,8.5 L24.5,8.5 Z" fill="#d0e0ea" stroke="#3b6db5" stroke-width="1"/>
<path d="M46.5,11.5 L49,7.5 L52,8.5 L51,10.5 Z" fill="#111"/>
<path d="M50,8 L57,1.5" stroke="#2a5050" stroke-width="2"/><path d="M55.5,3 L59,-1" stroke="#d89040" stroke-width="2.4"/>
<rect x="69.5" y="4.5" width="8" height="7" fill="#f8a070" stroke="#2050a0" stroke-width="1"/>
<rect x="67.5" y="10" width="3" height="3" fill="#1070e8"/>
<path d="M77,-1 L84,-1 L80,3 L83,3 L76,9 L78,4 L75.5,4 Z" fill="#f0d020" stroke="#a08000" stroke-width="0.6"/>
<path d="M106,-1 Q100,1 101.5,7 L97.5,7 L102.5,12.5 L107.5,7 L104,7 Q103.5,3 107,0.5 Z" fill="#183878"/>
<path d="M121,2.5 L126.5,2.5 L123.75,5.5 Z" fill="#000080"/>
<path d="M133.5,0 Q141,0 141.5,7 L137.5,7 L142.5,12.5 L148,7 L144.5,7 Q144,-2 134,-2 Z" fill="#b8bcc6" stroke="#f8f8f8" stroke-width="0.6"/>
<path d="M157,2.5 L163,2.5 L160,5.5 Z" fill="#a8a8c0"/>
<path d="M176,2 Q178,-2 183,0 L188,3 L187,8 L183,11 Q178,8 176,2 Z" fill="#d8a098" stroke="#b07870" stroke-width="0.6"/>
<path d="M183,10 L187,6 L191,10 L191,13 L184,13 Z" fill="#2a5a9a"/>
<path d="M185,0 L191,0 L188,2.5 Z" fill="#2a5a9a"/>
<circle cx="203.5" cy="4" r="4.6" fill="#d8e8f4" stroke="#303838" stroke-width="1.2"/>
<path d="M207,7.5 L212,12" stroke="#c07830" stroke-width="2"/>
<rect x="210" y="3" width="4" height="1" fill="#1a3a8a"/><rect x="211.5" y="0" width="1" height="3" fill="#1a3a8a"/>
<circle cx="226.5" cy="3.5" r="4.6" fill="#c8dcf0" stroke="#303838" stroke-width="1.2"/>
<rect x="224.5" y="1.5" width="4" height="4" fill="none" stroke="#1a3a8a" stroke-width="1"/>
<path d="M230,7 L234,10.5" stroke="#c07830" stroke-width="2"/><path d="M233,12.5 L237,12.5 L237,8.5 Z" fill="#000"/>
<circle cx="250.5" cy="3.5" r="4.6" fill="#c8dcf0" stroke="#303838" stroke-width="1.2"/>
<path d="M248,-1 L253,-1 L253,3 L248,5 Z" fill="#1a3a8a"/>
<path d="M254,7 L258.5,11.5" stroke="#c07830" stroke-width="2"/>
<rect x="273" y="0" width="8" height="1.5" fill="#e040c0"/><rect x="276" y="0" width="3" height="1.5" fill="#40c0f0"/>
<rect x="273.5" y="2.5" width="7" height="3.5" fill="#e8e070" stroke="#80a0c0" stroke-width="0.8"/>
<path d="M274,8 Q277,6.5 280,8 M274,10.5 Q277,12 280,10.5" stroke="#5080b0" stroke-width="1" fill="none"/>
<path d="M277,4 L283,1 L287,-1 L287,5 L282,6 Z" fill="#e0a8a0"/><rect x="287" y="-1" width="2" height="6" fill="#3060a0"/>
<path d="M283,13 L286,5.5 L289,13 M284.2,10 L287.8,10" stroke="#303030" stroke-width="1" fill="none"/>
<rect x="296.5" y="-1" width="15" height="13" fill="#dde4ee" stroke="#1a3a8a" stroke-width="1"/>
<rect x="297" y="-1" width="2.5" height="12.5" fill="#f0f0ff"/>
<rect x="298" y="1" width="1.2" height="1.2" fill="#d0b000"/>
<rect x="298" y="4" width="1.2" height="1.2" fill="#d0b000"/>
<rect x="298" y="7" width="1.2" height="1.2" fill="#d0b000"/>
<rect x="303" y="-1" width="2" height="2" fill="#203070"/><rect x="307" y="-1" width="2" height="2" fill="#203070"/>
<rect x="303" y="3" width="2" height="2" fill="#30a0a0"/><rect x="307" y="3" width="2" height="2" fill="#c0b020"/>
<rect x="305" y="7" width="4" height="3.5" fill="#f0e040" stroke="#202060" stroke-width="0.6"/>
<rect x="319.5" y="-1" width="9" height="13" fill="#dde4ee" stroke="#1a3a8a" stroke-width="1"/>
<rect x="322.5" y="-0.5" width="2.2" height="2.2" fill="#c0b020" stroke="#203070" stroke-width="0.4"/>
<rect x="322.5" y="3" width="2.2" height="2.2" fill="#c0b020" stroke="#203070" stroke-width="0.4"/>
<rect x="322.5" y="7" width="2.2" height="2.2" fill="#c0b020" stroke="#203070" stroke-width="0.4"/>
<path d="M326,0 Q332,-1 333,5" stroke="#1a3a8a" stroke-width="1.4" fill="none"/><path d="M330.5,4 L335.5,4 L333,7 Z" fill="#1a3a8a"/>
<rect x="331" y="8" width="4" height="4" fill="#f0e040" stroke="#203070" stroke-width="0.6"/>
<defs><linearGradient id="ssg" x1="0" y1="0" x2="1" y2="1"><stop offset="0" stop-color="#f0f0f0"/><stop offset="0.5" stop-color="#a8acb0"/><stop offset="1" stop-color="#4a88c0"/></linearGradient></defs>
<path d="M342,1 L355,-1 L357.5,4 L357.5,12.5 L345,12.5 Q341,9 342,1 Z" fill="url(#ssg)"/>
<circle cx="354" cy="5" r="2.5" fill="none" stroke="#808488" stroke-width="1"/>
<rect x="365.5" y="-1" width="14" height="12" fill="#c8d8ee"/>
<path d="M365,12 L381,12 L381,-1" stroke="#606060" stroke-width="1" fill="none"/><path d="M366,13 L382,13" stroke="#909090" stroke-width="0.8"/>
<path d="M367,1 Q366,4 368,4 Q366,7 369,7 Q370,9 373,7.5 Q376,9 376.5,5 Q378,2 375,0 Q374,-2 371,0 Q368,-1 367,1 Z" fill="#e0ecf8" stroke="#f02020" stroke-width="1"/>
<rect x="389.5" y="-1" width="12.5" height="13.5" rx="1" fill="#080808"/>
<rect x="391" y="-1" width="9.5" height="1.5" fill="#90b080"/>
<rect x="391.5" y="3.5" width="2" height="2" fill="#ff2020"/>
<rect x="391.5" y="6.5" width="2" height="2" fill="#ffffff"/>
<rect x="391.5" y="9.5" width="2" height="2" fill="#ffffff"/>
<rect x="394.5" y="3.5" width="2" height="2" fill="#ff2020"/>
<rect x="394.5" y="6.5" width="2" height="2" fill="#ffffff"/>
<rect x="394.5" y="9.5" width="2" height="2" fill="#ffffff"/>
<rect x="397.5" y="3.5" width="2" height="2" fill="#ff2020"/>
<rect x="397.5" y="6.5" width="2" height="2" fill="#ffffff"/>
<rect x="397.5" y="9.5" width="2" height="2" fill="#ffffff"/>
<rect x="418.5" y="-2" width="12" height="13" rx="1.5" fill="#2060a8" stroke="#18408a" stroke-width="0.6"/>
<path d="M421.8,2.5 Q421.8,-0.5 424.5,-0.5 Q427.5,-0.5 427.5,2.3 Q427.5,4 425.5,5 Q424.6,5.6 424.6,7" stroke="#fff" stroke-width="1.6" fill="none"/>
<rect x="423.6" y="8" width="2" height="2" fill="#fff"/>
<path d="M458,2 L466,-1 L474,2 L466,5 Z" fill="#9ab4d8" stroke="#5878a8" stroke-width="0.6"/>
<path d="M458,5 L466,2 L474,5 L466,8 Z" fill="#a8c0e0" stroke="#5878a8" stroke-width="0.6"/>
<path d="M458,8 L466,5 L474,8 L466,11 Z" fill="#b8d0ec" stroke="#5878a8" stroke-width="0.6"/>
</g>
<rect x="478" y="0" width="299" height="15" fill="#ffffff"/>
<rect x="477" y="0" width="1" height="15" fill="#dde4f0"/>
<g shape-rendering="geometricPrecision">
<path d="M486,3 Q486,-2 489.5,-2 Q493,-2 493,3 Q493,5 491.5,6.5 L491.5,8 L487.5,8 L487.5,6.5 Q486,5 486,3 Z" fill="#fffff0" stroke="#d0c040" stroke-width="1"/>
<rect x="487.5" y="8" width="4" height="3" fill="#6878a0"/>
<circle cx="505.5" cy="4.5" r="6.3" fill="#f0dc50" stroke="#2a6ac0" stroke-width="1"/>
<rect x="498" y="9" width="2" height="2" fill="#e0b000"/><rect x="511" y="9" width="2" height="2" fill="#e0b000"/>
<rect x="520.5" y="2.5" width="8" height="8" fill="#fff" stroke="#a0b0c8" stroke-width="1"/>
<circle cx="520.5" cy="2" r="5" fill="#a8c8e8"/><circle cx="520.5" cy="2" r="2" fill="#d8c880"/>
<path d="M534,-1 L534,3" stroke="#c8c040" stroke-width="1.2"/><path d="M538,-1 Q538,3 541,3 L541,10" stroke="#c8c040" stroke-width="1.2" fill="none"/>
<path d="M537,4 L546,2 L546,10 L538,12 Z" fill="#f0e050" stroke="#a09020" stroke-width="0.8"/>
</g>
<rect x="549.5" y="-1" width="9" height="10.5" fill="#44ff00" stroke="#000" stroke-width="1"/>
<g stroke="#000" stroke-width="1.1" fill="none">
<path d="M566.5,0 V11 M564,6 H569 M564.5,2 L565.5,4 M568.5,2 L567.5,4 M566,7 L564,10 M567,7 L568.5,9"/>
<path d="M569.5,0.5 H573.5 V10.5 M569.5,0.5 V10.5 M569.5,3.5 H573.5 M569.5,6.8 H573.5 M568.5,10.5 H575"/>
<path d="M576.5,0.8 H586.5 M576.5,0.8 V2.5 M586.5,0.8 V2.5 M578,3 L580,4.5 M578.5,5 L580.5,6.5 M583,2 V6.5 M576.5,6.5 H587 M582.5,7 L577,11 M583,8 L586.5,11"/>
<path d="M590.5,0 L588.5,3.5 L591.5,4 L588.5,8 L592,7.5 M588,10.5 L592,9 M593,2.5 H598 M593,5.5 H599 M593,8.5 L599,7.5 M595.5,0 L598,11 M599,9 L598.5,11 M597,1 L598.5,2"/>
</g>
<path d="M602.5,1 V9.5 M601,2.5 L602.5,1 M600.8,9.7 H604.5" stroke="#000" stroke-width="1.2" fill="none"/>
<path d="M766,4 L773,4 L769.5,8 Z" fill="#000"/>
<rect x="777" y="0" width="50" height="15" fill="#f0f0f0"/>
<rect x="827" y="0" width="1" height="15" fill="#a8a8a8"/><rect x="0" y="14" width="1016" height="1" fill="#e4e4e4"/>
<rect x="831" y="0" width="1" height="15" fill="#ffffff"/><rect x="832" y="0" width="1" height="15" fill="#b0b0b0"/>
<rect x="836" y="0" width="1" height="15" fill="#ffffff"/><rect x="837" y="0" width="1" height="15" fill="#b0b0b0"/>
<rect x="839" y="0" width="1" height="15" fill="#d0d0d0"/>
<g shape-rendering="geometricPrecision">
<path d="M781,0 L789,-3 L797,0 L789,3 Z" fill="#9ab4d8" stroke="#5878a8" stroke-width="0.6"/>
<path d="M781,3 L789,0 L797,3 L789,6 Z" fill="#a8c0e0" stroke="#5878a8" stroke-width="0.6"/>
<path d="M781,7 L789,4 L797,7 L789,10 Z" fill="#f0d020" stroke="#b09000" stroke-width="0.8"/>
<path d="M781.5,12.5 L785,9 M782,9.5 L785,9 L784.5,12" stroke="#1a3a8a" stroke-width="1.2" fill="none"/>
<path d="M804,2 L812,-1 L820,2 L812,5 Z" fill="#9ab4d8" stroke="#5878a8" stroke-width="0.6"/>
<path d="M804,5 L812,2 L820,5 L812,8 Z" fill="#a8c0e0" stroke="#5878a8" stroke-width="0.6"/>
<path d="M804,8 L812,5 L820,8 L812,11 Z" fill="#b8d0ec" stroke="#5878a8" stroke-width="0.6"/>
<path d="M812,-1 L812,5 M809.5,3 L812,6 L814.5,3" stroke="#1a3a8a" stroke-width="1.6" fill="none"/>
<path d="M846,9 L850.5,-1 L855,9 M847.5,5 L853.5,5" stroke="#101010" stroke-width="1.3" fill="none"/>
<path d="M849,12.5 L852,9 L854,10.5 Z" fill="#101010"/><path d="M853,9.5 L858,4" stroke="#2a5050" stroke-width="1.8"/><path d="M857,5 L860,2" stroke="#d89040" stroke-width="2.2"/>
</g>
<rect x="865" y="0" width="99" height="15" fill="#ffffff"/><rect x="864" y="0" width="1" height="15" fill="#dde4f0"/>
<text x="869.5" y="9" font-family="Liberation Serif" font-size="11.5" fill="#000" textLength="30" lengthAdjust="spacingAndGlyphs">HZFSD</text>
<path d="M953,4 L960,4 L956.5,8 Z" fill="#000"/>
<rect x="964" y="0" width="31" height="15" fill="#f0f0f0"/>
<rect x="967" y="0" width="1" height="14" fill="#808080"/><rect x="968" y="0" width="1" height="14" fill="#fff"/>
<g shape-rendering="geometricPrecision">
<path d="M974.5,7 V12 M989.5,7 V12 M975,9.5 H989 M975,9.5 L978,8 M975,9.5 L978,11 M989,9.5 L986,8 M989,9.5 L986,11" stroke="#000" stroke-width="1.2" fill="none"/>
<path d="M979,8 L982,4.5 L984,6 Z" fill="#101010"/><path d="M983,5 L987,1" stroke="#2a5050" stroke-width="1.8"/><path d="M986,2 L989,-1" stroke="#d89040" stroke-width="2.2"/>
</g>
<rect x="995" y="0" width="21" height="15" fill="#ffffff"/><rect x="994" y="0" width="1" height="15" fill="#dde4f0"/>
<text x="998.5" y="9" font-family="Liberation Serif" font-size="11.5" fill="#000" textLength="20" lengthAdjust="spacingAndGlyphs">ARR</text>
</svg>
</body></html>
